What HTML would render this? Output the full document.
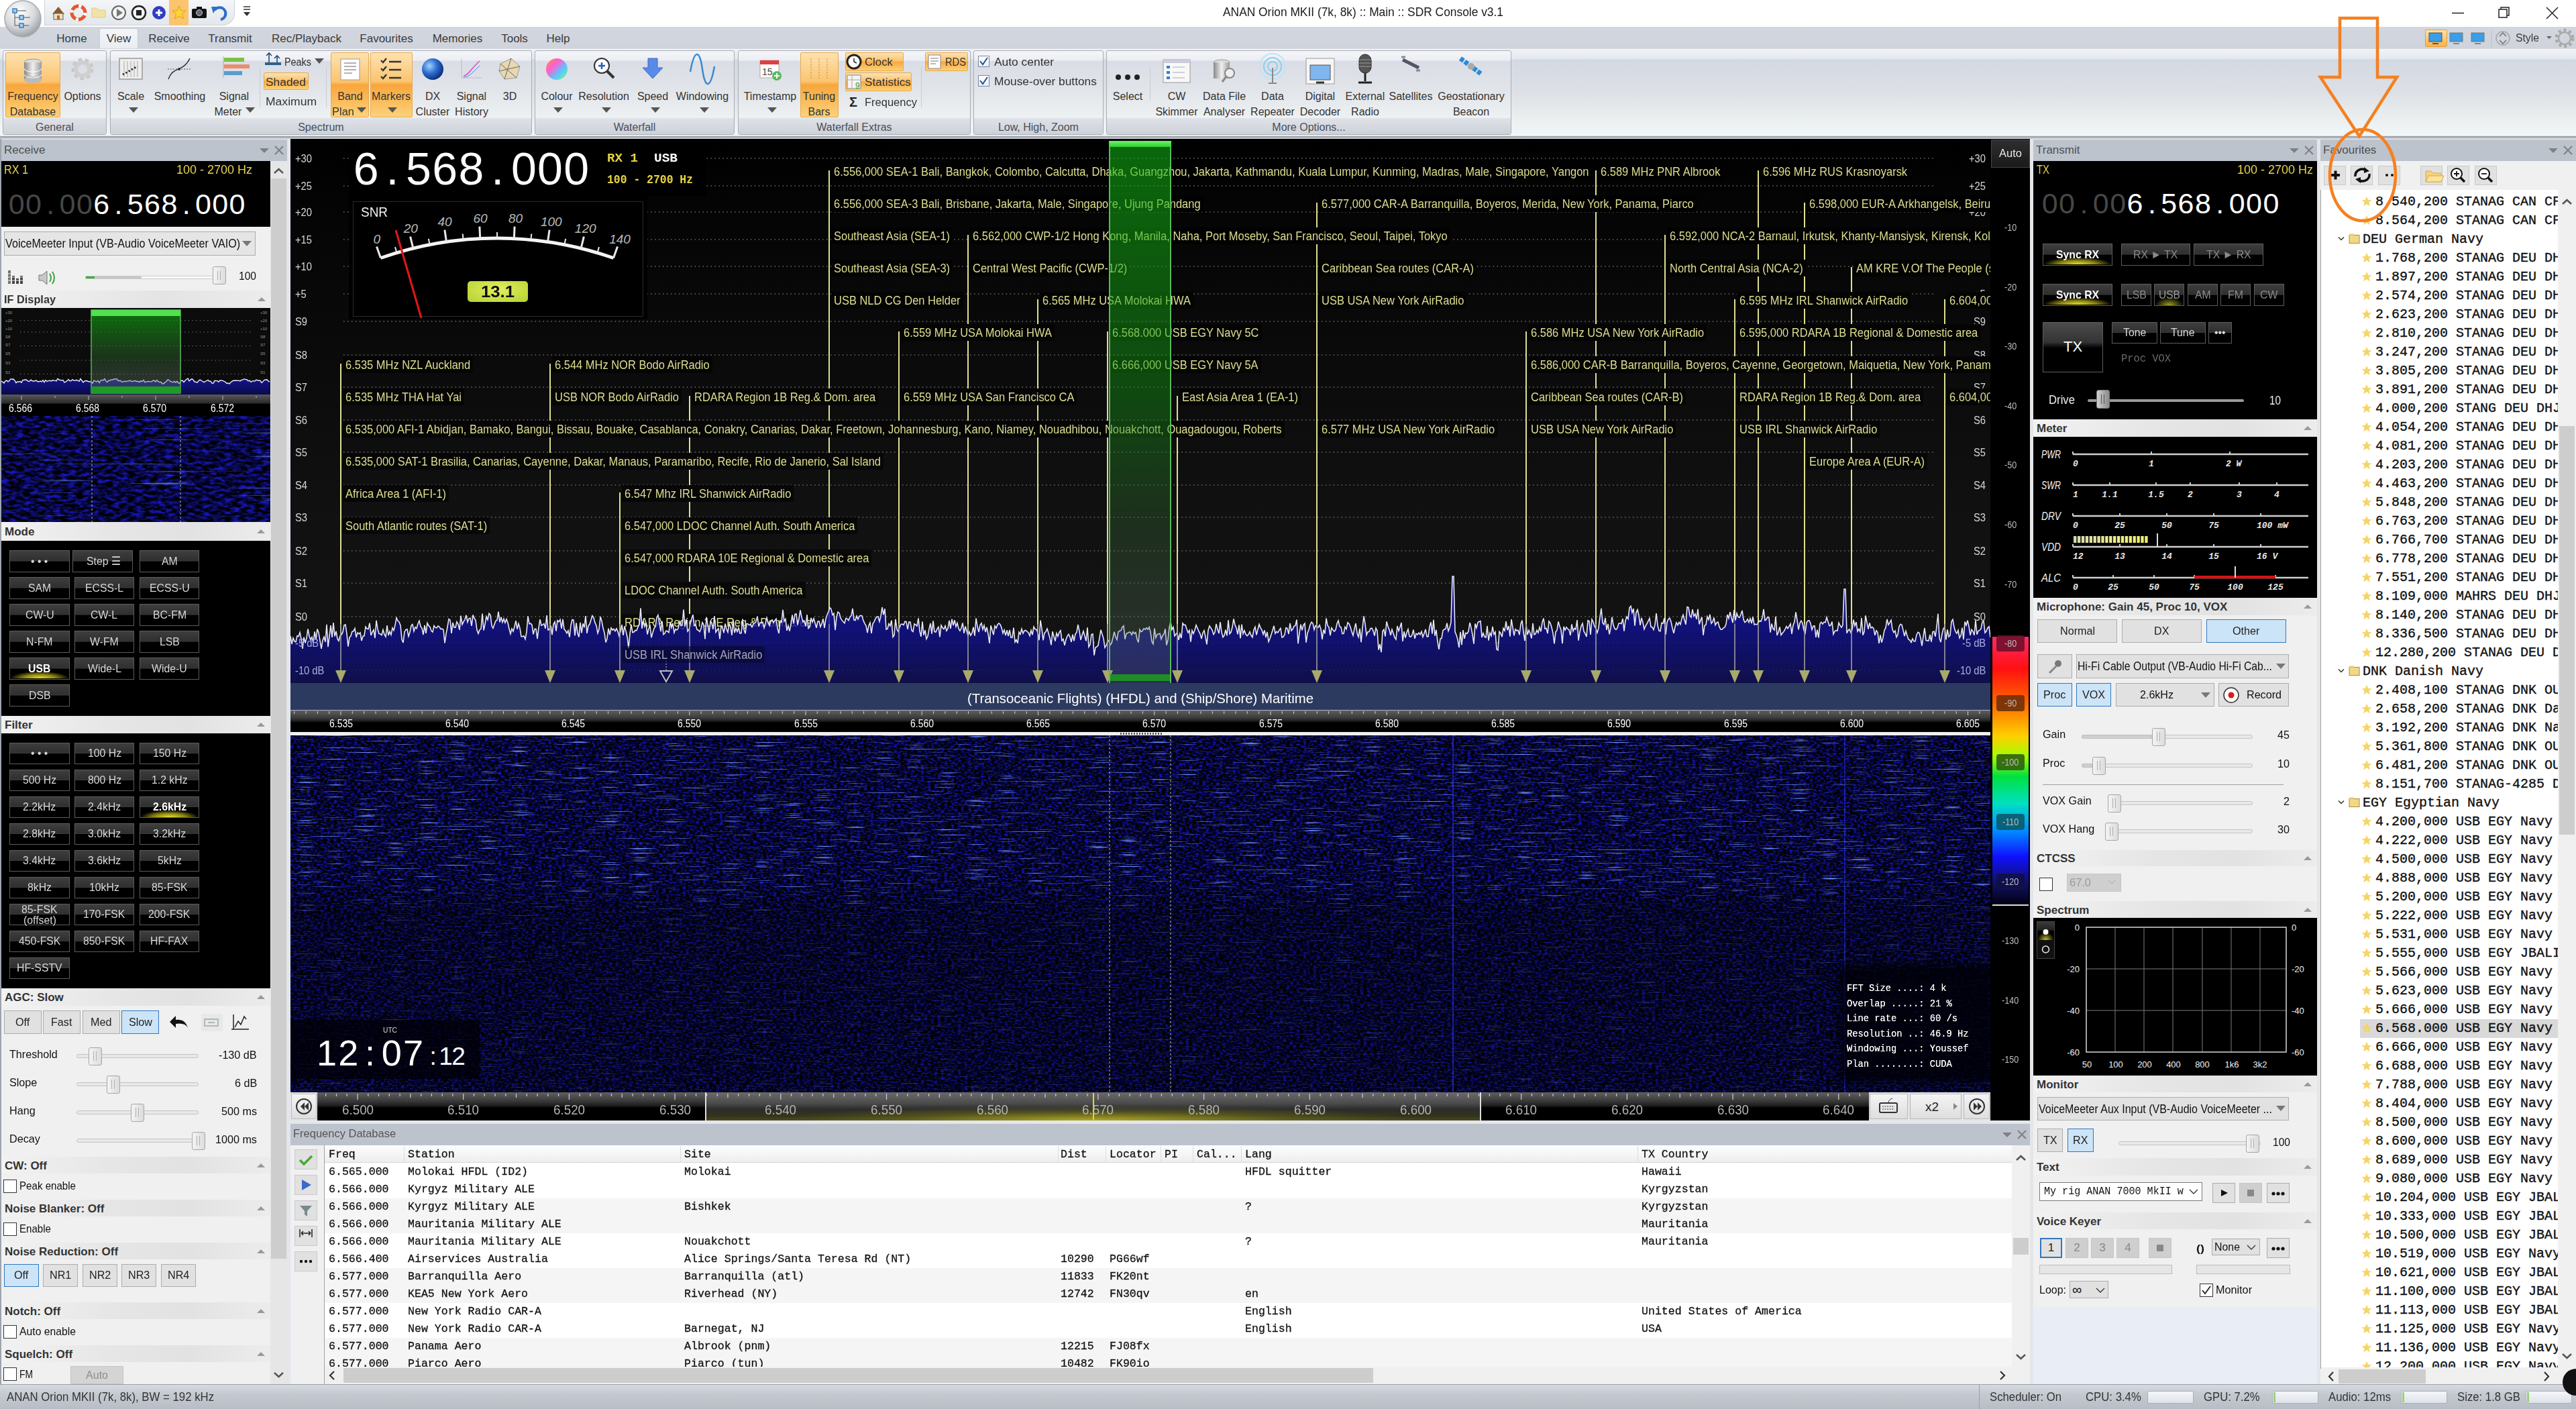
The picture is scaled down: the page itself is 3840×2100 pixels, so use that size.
<!DOCTYPE html><html><head><meta charset="utf-8"><style>
html,body{margin:0;padding:0}
body{width:3840px;height:2100px;overflow:hidden;position:relative;background:#e9ecf0;font-family:"Liberation Sans",sans-serif}
.a{position:absolute}
.t{position:absolute;white-space:nowrap}
.s{font-family:"Liberation Sans",sans-serif}
.m{font-family:"Liberation Mono",monospace}
</style></head><body><div class="a" style="left:0px;top:0px;width:3840px;height:40px;background:#fff;"></div><div class="a" style="left:66px;top:0px;width:284px;height:38px;background:linear-gradient(#f4f6f8,#e3e7ec);border:1px solid #cdd3da;border-top:none;border-radius:0 0 18px 0;box-sizing:border-box;"></div><svg class="a" style="left:66px;top:0px" width="330" height="40">
    <g transform="translate(21,19)"><path d="M-9,2 L0,-9 L9,2 Z" fill="#8b5a2b"/><rect x="-7" y="1" width="14" height="9" fill="#e8e0d0" stroke="#7a5a3a"/><rect x="-2" y="4" width="4" height="6" fill="#b06a20"/></g>
    <g transform="translate(51,19)"><circle r="10" fill="none" stroke="#e4572e" stroke-width="5"/><circle r="10" fill="none" stroke="#fff" stroke-width="5" stroke-dasharray="4 11.7"/></g>
    <g transform="translate(81,19)"><path d="M-10,-7 h7 l2,3 h11 v11 h-20 z" fill="#f3e2a8" stroke="#e2cb86"/></g>
    <g transform="translate(111,19)"><circle r="10" fill="#f4f4f4" stroke="#666" stroke-width="2"/><path d="M-3,-6 L6,0 L-3,6 Z" fill="#777"/></g>
    <g transform="translate(141,19)"><circle r="10" fill="#f4f4f4" stroke="#222" stroke-width="2.5"/><rect x="-4" y="-4" width="8" height="8" fill="#222"/></g>
    <g transform="translate(171,19)"><circle r="10" fill="#2f3fc0"/><path d="M-5,0 h10 M0,-5 v10" stroke="#fff" stroke-width="3"/></g>
    <rect x="186" y="0" width="29" height="38" fill="#fbc46f"/>
    <g transform="translate(201,19)"><path d="M0,-10 L3,-3 L10,-3 L4.5,2 L6.5,9 L0,5 L-6.5,9 L-4.5,2 L-10,-3 L-3,-3 Z" fill="#ffd23a" stroke="#e0a010"/></g>
    <g transform="translate(231,19)"><rect x="-11" y="-6" width="22" height="14" rx="2" fill="#111"/><rect x="-4" y="-9" width="8" height="4" fill="#111"/><circle r="4.5" fill="#667" stroke="#ccc"/></g>
    <g transform="translate(261,19)"><path d="M-7,-4 A9,9 0 1 1 2,10" fill="none" stroke="#2a6fd0" stroke-width="4"/><path d="M-12,-9 L-3,-9 L-9,1 Z" fill="#2a6fd0"/></g>
    <g transform="translate(302,17)"><path d="M-5,-7 h10 M-5,-3 h10" stroke="#333" stroke-width="1.6"/><path d="M-5,1 h10 l-5,6 z" fill="#333"/></g>
    </svg><div class="t s" style="left:1823.0px;top:8.0px;font-size:18px;line-height:21px;color:#1a1a1a;transform:scaleX(0.965);transform-origin:0 50%;">ANAN Orion MKII (7k, 8k) :: Main :: SDR Console v3.1</div><svg class="a" style="left:3640px;top:0px" width="200" height="40">
    <path d="M15,19.5 h18" stroke="#222" stroke-width="1.5"/>
    <rect x="85" y="14" width="12" height="12" fill="none" stroke="#222" stroke-width="1.5"/><path d="M88,14 v-3 h12 v12 h-3" fill="none" stroke="#222" stroke-width="1.5"/>
    <path d="M156,11 l17,17 M173,11 l-17,17" stroke="#222" stroke-width="1.5"/>
    </svg><div class="a" style="left:0px;top:40px;width:3840px;height:33px;background:linear-gradient(#d3d6de,#cfd4dc);"></div><div class="a" style="left:148px;top:42px;width:58px;height:33px;background:linear-gradient(#f3f5f8,#e8ecf1);border:1px solid #c7cdd5;border-bottom:none;border-radius:3px 3px 0 0;box-sizing:border-box;"></div><div class="t s" style="left:84.3px;top:48.0px;font-size:17px;line-height:20px;color:#3a3a3a;">Home</div><div class="t s" style="left:158.7px;top:48.0px;font-size:17px;line-height:20px;color:#3a3a3a;">View</div><div class="t s" style="left:221.3px;top:48.0px;font-size:17px;line-height:20px;color:#3a3a3a;">Receive</div><div class="t s" style="left:310.3px;top:48.0px;font-size:17px;line-height:20px;color:#3a3a3a;">Transmit</div><div class="t s" style="left:405.0px;top:48.0px;font-size:17px;line-height:20px;color:#3a3a3a;">Rec/Playback</div><div class="t s" style="left:536.3px;top:48.0px;font-size:17px;line-height:20px;color:#3a3a3a;">Favourites</div><div class="t s" style="left:644.7px;top:48.0px;font-size:17px;line-height:20px;color:#3a3a3a;">Memories</div><div class="t s" style="left:747.2px;top:48.0px;font-size:17px;line-height:20px;color:#3a3a3a;">Tools</div><div class="t s" style="left:814.5px;top:48.0px;font-size:17px;line-height:20px;color:#3a3a3a;">Help</div><div class="a" style="left:3615px;top:44px;width:33px;height:26px;background:linear-gradient(#fde2b0,#f9b24c);border:1px solid #e0a040;border-radius:2px;box-sizing:border-box;"></div><svg class="a" style="left:3600px;top:40px" width="240" height="34">
    <g><rect x="21" y="9" width="19" height="13" fill="#3a9ee8" stroke="#555"/><path d="M26,25 h9" stroke="#555" stroke-width="2"/></g>
    <g><rect x="52" y="9" width="19" height="13" fill="#3a9ee8" stroke="#777"/><path d="M57,25 h9" stroke="#888" stroke-width="2"/></g>
    <g><rect x="84" y="9" width="19" height="13" fill="#3a9ee8" stroke="#777"/><path d="M89,25 h9" stroke="#888" stroke-width="2"/></g>
    <path d="M114,6 v24" stroke="#b8bec6"/>
    <g transform="translate(131,17)" fill="none" stroke="#777" stroke-width="1.6"><circle r="10" stroke="#aaa"/><path d="M-5,-3 L0,-8 L5,-3 M-5,3 L0,8 L5,3"/></g>
    <path d="M196,14 h8 l-4,4 z" fill="#666"/>
    <g transform="translate(223,17)"><circle r="12" fill="none" stroke="#aaa" stroke-width="5" stroke-dasharray="4 3.8"/><circle r="9" fill="none" stroke="#aaa" stroke-width="2.5"/></g>
    </svg><div class="t s" style="left:3750.0px;top:47.0px;font-size:17px;line-height:20px;color:#3a3a3a;transform:scaleX(0.926);transform-origin:0 50%;">Style</div><svg class="a" style="left:4px;top:0px" width="62" height="60">
    <defs><radialGradient id="ab" cx="40%" cy="30%" r="70%"><stop offset="0" stop-color="#ffffff"/><stop offset="0.6" stop-color="#d8dadd"/><stop offset="1" stop-color="#9ea3a8"/></radialGradient></defs>
    <circle cx="30" cy="28" r="27" fill="url(#ab)" stroke="#a8acb0" stroke-width="1.5"/>
    <g fill="#9fd0f0" stroke="#2f7fc8" stroke-width="1.5"><rect x="15" y="13" width="6" height="6"/><rect x="25" y="23" width="6" height="6"/><rect x="25" y="35" width="6" height="6"/></g>
    <path d="M18,19 v19 h7 M18,26 h7 M21,16 h14 M31,26 h10 M31,38 h8" stroke="#555" stroke-width="1" fill="none"/>
    </svg><div class="a" style="left:0px;top:72px;width:3840px;height:133px;background:linear-gradient(#b9bdc4 0px,#f1f3f7 1px,#e3e7ef 16px,#d3d9e3 17px,#dde0e5 50%,#e9edee 75%,#f1f7f9 98%,#9fa3a8 98.5%);"></div><div class="a" style="left:0px;top:205px;width:3840px;height:2px;background:#c4c8ce;"></div><div class="a" style="left:4px;top:75px;width:155px;height:126px;background:linear-gradient(#f5f6f9 0%,#eceef3 11%,#d9dde5 12.5%,#e1e4e9 45%,#eef1f2 80%);border:1px solid #a9aeb5;border-radius:3px;box-sizing:border-box;"></div><div class="a" style="left:5px;top:176px;width:153px;height:24px;background:linear-gradient(#dfe2e8,#cdd1d8);border-radius:0 0 3px 3px;"></div><div class="t s" style="left:53.0px;top:179.5px;font-size:16px;line-height:19px;color:#4a4f58;">General</div><div class="a" style="left:164px;top:75px;width:629px;height:126px;background:linear-gradient(#f5f6f9 0%,#eceef3 11%,#d9dde5 12.5%,#e1e4e9 45%,#eef1f2 80%);border:1px solid #a9aeb5;border-radius:3px;box-sizing:border-box;"></div><div class="a" style="left:165px;top:176px;width:627px;height:24px;background:linear-gradient(#dfe2e8,#cdd1d8);border-radius:0 0 3px 3px;"></div><div class="t s" style="left:444.2px;top:179.5px;font-size:16px;line-height:19px;color:#4a4f58;">Spectrum</div><div class="a" style="left:797px;top:75px;width:298px;height:126px;background:linear-gradient(#f5f6f9 0%,#eceef3 11%,#d9dde5 12.5%,#e1e4e9 45%,#eef1f2 80%);border:1px solid #a9aeb5;border-radius:3px;box-sizing:border-box;"></div><div class="a" style="left:798px;top:176px;width:296px;height:24px;background:linear-gradient(#dfe2e8,#cdd1d8);border-radius:0 0 3px 3px;"></div><div class="t s" style="left:914.7px;top:179.5px;font-size:16px;line-height:19px;color:#4a4f58;">Waterfall</div><div class="a" style="left:1100px;top:75px;width:347px;height:126px;background:linear-gradient(#f5f6f9 0%,#eceef3 11%,#d9dde5 12.5%,#e1e4e9 45%,#eef1f2 80%);border:1px solid #a9aeb5;border-radius:3px;box-sizing:border-box;"></div><div class="a" style="left:1101px;top:176px;width:345px;height:24px;background:linear-gradient(#dfe2e8,#cdd1d8);border-radius:0 0 3px 3px;"></div><div class="t s" style="left:1217.3px;top:179.5px;font-size:16px;line-height:19px;color:#4a4f58;">Waterfall Extras</div><div class="a" style="left:1451px;top:75px;width:194px;height:126px;background:linear-gradient(#f5f6f9 0%,#eceef3 11%,#d9dde5 12.5%,#e1e4e9 45%,#eef1f2 80%);border:1px solid #a9aeb5;border-radius:3px;box-sizing:border-box;"></div><div class="a" style="left:1452px;top:176px;width:192px;height:24px;background:linear-gradient(#dfe2e8,#cdd1d8);border-radius:0 0 3px 3px;"></div><div class="t s" style="left:1487.9px;top:179.5px;font-size:16px;line-height:19px;color:#4a4f58;">Low, High, Zoom</div><div class="a" style="left:1649px;top:75px;width:604px;height:126px;background:linear-gradient(#f5f6f9 0%,#eceef3 11%,#d9dde5 12.5%,#e1e4e9 45%,#eef1f2 80%);border:1px solid #a9aeb5;border-radius:3px;box-sizing:border-box;"></div><div class="a" style="left:1650px;top:176px;width:602px;height:24px;background:linear-gradient(#dfe2e8,#cdd1d8);border-radius:0 0 3px 3px;"></div><div class="t s" style="left:1896.3px;top:179.5px;font-size:16px;line-height:19px;color:#4a4f58;">More Options...</div><div class="a" style="left:8px;top:78px;width:82px;height:97px;background:linear-gradient(#fde2b0 0%,#fbc46f 45%,#f9a63c 50%,#fcd27a 100%);border:1px solid #e8a94a;border-radius:2px;box-sizing:border-box;"></div><div class="a" style="left:493px;top:78px;width:57px;height:97px;background:linear-gradient(#fde2b0 0%,#fbc46f 45%,#f9a63c 50%,#fcd27a 100%);border:1px solid #e8a94a;border-radius:2px;box-sizing:border-box;"></div><div class="a" style="left:552px;top:78px;width:63px;height:97px;background:linear-gradient(#fde2b0 0%,#fbc46f 45%,#f9a63c 50%,#fcd27a 100%);border:1px solid #e8a94a;border-radius:2px;box-sizing:border-box;"></div><div class="a" style="left:1193px;top:78px;width:57px;height:97px;background:linear-gradient(#fde2b0 0%,#fbc46f 45%,#f9a63c 50%,#fcd27a 100%);border:1px solid #e8a94a;border-radius:2px;box-sizing:border-box;"></div><div class="a" style="left:393px;top:108px;width:67px;height:26px;background:linear-gradient(#fde2b0 0%,#fbc46f 45%,#f9a63c 50%,#fcd27a 100%);border:1px solid #e8a94a;border-radius:2px;box-sizing:border-box;"></div><div class="a" style="left:1260px;top:78px;width:87px;height:28px;background:linear-gradient(#fde2b0 0%,#fbc46f 45%,#f9a63c 50%,#fcd27a 100%);border:1px solid #e8a94a;border-radius:2px;box-sizing:border-box;"></div><div class="a" style="left:1260px;top:108px;width:99px;height:28px;background:linear-gradient(#fde2b0 0%,#fbc46f 45%,#f9a63c 50%,#fcd27a 100%);border:1px solid #e8a94a;border-radius:2px;box-sizing:border-box;"></div><div class="a" style="left:1379px;top:78px;width:64px;height:28px;background:linear-gradient(#fde2b0 0%,#fbc46f 45%,#f9a63c 50%,#fcd27a 100%);border:1px solid #e8a94a;border-radius:2px;box-sizing:border-box;"></div><div class="t s" style="left:11.2px;top:133.5px;font-size:16px;line-height:19px;color:#333;">Frequency</div><div class="t s" style="left:14.7px;top:156.5px;font-size:16px;line-height:19px;color:#333;">Database</div><div class="t s" style="left:95.4px;top:133.5px;font-size:16px;line-height:19px;color:#333;">Options</div><div class="t s" style="left:175.0px;top:133.5px;font-size:16px;line-height:19px;color:#333;">Scale</div><svg class="a" style="left:191px;top:159px" width="16" height="10"><path d="M1,1 h14 l-7,8 z" fill="#555"/></svg><div class="t s" style="left:229.7px;top:133.5px;font-size:16px;line-height:19px;color:#333;">Smoothing</div><div class="t s" style="left:326.7px;top:133.5px;font-size:16px;line-height:19px;color:#333;">Signal</div><div class="t s" style="left:319.5px;top:156.5px;font-size:16px;line-height:19px;color:#333;">Meter</div><svg class="a" style="left:365px;top:159px" width="16" height="10"><path d="M1,1 h14 l-7,8 z" fill="#555"/></svg><div class="t s" style="left:424.0px;top:82.5px;font-size:16px;line-height:19px;color:#333;transform:scaleX(0.899);transform-origin:0 50%;">Peaks</div><svg class="a" style="left:468px;top:86px" width="16" height="10"><path d="M1,1 h14 l-7,8 z" fill="#555"/></svg><div class="t s" style="left:396.0px;top:112.5px;font-size:16px;line-height:19px;color:#333;transform:scaleX(1.087);transform-origin:0 50%;">Shaded</div><div class="t s" style="left:396.0px;top:141.5px;font-size:16px;line-height:19px;color:#333;transform:scaleX(1.096);transform-origin:0 50%;">Maximum</div><div class="a" style="left:387px;top:100px;width:1px;height:60px;background:#c8ccd2;"></div><div class="a" style="left:486px;top:100px;width:1px;height:60px;background:#c8ccd2;"></div><div class="t s" style="left:503.3px;top:133.5px;font-size:16px;line-height:19px;color:#333;">Band</div><div class="t s" style="left:495.0px;top:156.5px;font-size:16px;line-height:19px;color:#333;transform:scaleX(1.030);transform-origin:0 50%;">Plan</div><svg class="a" style="left:531px;top:159px" width="16" height="10"><path d="M1,1 h14 l-7,8 z" fill="#555"/></svg><div class="t s" style="left:554.1px;top:133.5px;font-size:16px;line-height:19px;color:#333;">Markers</div><svg class="a" style="left:577px;top:159px" width="16" height="10"><path d="M1,1 h14 l-7,8 z" fill="#555"/></svg><div class="t s" style="left:633.9px;top:133.5px;font-size:16px;line-height:19px;color:#333;">DX</div><div class="t s" style="left:619.6px;top:156.5px;font-size:16px;line-height:19px;color:#333;">Cluster</div><div class="t s" style="left:680.7px;top:133.5px;font-size:16px;line-height:19px;color:#333;">Signal</div><div class="t s" style="left:678.1px;top:156.5px;font-size:16px;line-height:19px;color:#333;">History</div><div class="t s" style="left:749.8px;top:133.5px;font-size:16px;line-height:19px;color:#333;">3D</div><div class="t s" style="left:806.4px;top:133.5px;font-size:16px;line-height:19px;color:#333;">Colour</div><svg class="a" style="left:824px;top:159px" width="16" height="10"><path d="M1,1 h14 l-7,8 z" fill="#555"/></svg><div class="t s" style="left:862.2px;top:133.5px;font-size:16px;line-height:19px;color:#333;">Resolution</div><svg class="a" style="left:896px;top:159px" width="16" height="10"><path d="M1,1 h14 l-7,8 z" fill="#555"/></svg><div class="t s" style="left:949.9px;top:133.5px;font-size:16px;line-height:19px;color:#333;">Speed</div><svg class="a" style="left:969px;top:159px" width="16" height="10"><path d="M1,1 h14 l-7,8 z" fill="#555"/></svg><div class="t s" style="left:1007.8px;top:133.5px;font-size:16px;line-height:19px;color:#333;">Windowing</div><svg class="a" style="left:1042px;top:159px" width="16" height="10"><path d="M1,1 h14 l-7,8 z" fill="#555"/></svg><div class="t s" style="left:1108.7px;top:133.5px;font-size:16px;line-height:19px;color:#333;">Timestamp</div><svg class="a" style="left:1143px;top:159px" width="16" height="10"><path d="M1,1 h14 l-7,8 z" fill="#555"/></svg><div class="t s" style="left:1196.8px;top:133.5px;font-size:16px;line-height:19px;color:#333;">Tuning</div><div class="t s" style="left:1204.5px;top:156.5px;font-size:16px;line-height:19px;color:#333;">Bars</div><div class="t s" style="left:1289.0px;top:82.5px;font-size:16px;line-height:19px;color:#333;transform:scaleX(1.049);transform-origin:0 50%;">Clock</div><div class="t s" style="left:1289.0px;top:112.5px;font-size:16px;line-height:19px;color:#333;transform:scaleX(1.077);transform-origin:0 50%;">Statistics</div><div class="t s" style="left:1289.0px;top:142.5px;font-size:16px;line-height:19px;color:#333;transform:scaleX(1.031);transform-origin:0 50%;">Frequency</div><div class="t s" style="left:1266.0px;top:140.0px;font-size:20px;line-height:24px;color:#222;font-weight:bold;">Σ</div><div class="t s" style="left:1409.0px;top:82.5px;font-size:16px;line-height:19px;color:#333;transform:scaleX(0.917);transform-origin:0 50%;">RDS</div><div class="a" style="left:1373px;top:100px;width:1px;height:60px;background:#c8ccd2;"></div><div class="t s" style="left:1482.0px;top:82.5px;font-size:16px;line-height:19px;color:#333;transform:scaleX(1.087);transform-origin:0 50%;">Auto center</div><div class="t s" style="left:1482.0px;top:111.5px;font-size:16px;line-height:19px;color:#333;transform:scaleX(1.081);transform-origin:0 50%;">Mouse-over buttons</div><div class="a" style="left:1458px;top:83px;width:17px;height:17px;background:linear-gradient(#fff,#e6eef8);border:1px solid #7a8aa0;box-sizing:border-box;"></div><svg class="a" style="left:1458px;top:83px" width="17" height="17"><path d="M3,8 l4,5 l7,-10" stroke="#2b4f8a" stroke-width="2" fill="none"/></svg><div class="a" style="left:1458px;top:112px;width:17px;height:17px;background:linear-gradient(#fff,#e6eef8);border:1px solid #7a8aa0;box-sizing:border-box;"></div><svg class="a" style="left:1458px;top:112px" width="17" height="17"><path d="M3,8 l4,5 l7,-10" stroke="#2b4f8a" stroke-width="2" fill="none"/></svg><div class="t s" style="left:1658.8px;top:133.5px;font-size:16px;line-height:19px;color:#333;">Select</div><div class="t s" style="left:1740.7px;top:133.5px;font-size:16px;line-height:19px;color:#333;">CW</div><div class="t s" style="left:1722.4px;top:156.5px;font-size:16px;line-height:19px;color:#333;">Skimmer</div><div class="t s" style="left:1793.0px;top:133.5px;font-size:16px;line-height:19px;color:#333;">Data File</div><div class="t s" style="left:1793.9px;top:156.5px;font-size:16px;line-height:19px;color:#333;">Analyser</div><div class="t s" style="left:1880.1px;top:133.5px;font-size:16px;line-height:19px;color:#333;">Data</div><div class="t s" style="left:1864.1px;top:156.5px;font-size:16px;line-height:19px;color:#333;">Repeater</div><div class="t s" style="left:1945.7px;top:133.5px;font-size:16px;line-height:19px;color:#333;">Digital</div><div class="t s" style="left:1937.7px;top:156.5px;font-size:16px;line-height:19px;color:#333;">Decoder</div><div class="t s" style="left:2005.6px;top:133.5px;font-size:16px;line-height:19px;color:#333;">External</div><div class="t s" style="left:2014.1px;top:156.5px;font-size:16px;line-height:19px;color:#333;">Radio</div><div class="t s" style="left:2070.5px;top:133.5px;font-size:16px;line-height:19px;color:#333;">Satellites</div><div class="t s" style="left:2143.2px;top:133.5px;font-size:16px;line-height:19px;color:#333;">Geostationary</div><div class="t s" style="left:2165.9px;top:156.5px;font-size:16px;line-height:19px;color:#333;">Beacon</div><div class="a" style="left:1714px;top:100px;width:1px;height:50px;background:#c8ccd2;"></div><svg class="a" style="left:0px;top:73px" width="2260" height="105">
    <!-- database -->
    <g transform="translate(49,32)"><ellipse cx="0" cy="-12" rx="13" ry="5" fill="#ddd" stroke="#999"/><rect x="-13" y="-12" width="26" height="26" fill="url(#cyl)"/><ellipse cx="0" cy="14" rx="13" ry="5" fill="#bbb"/><path d="M-13,-3 a13,5 0 0 0 26,0 M-13,6 a13,5 0 0 0 26,0" stroke="#fff" fill="none"/></g>
    <defs><linearGradient id="cyl"><stop offset="0" stop-color="#888"/><stop offset="0.5" stop-color="#f0f0f0"/><stop offset="1" stop-color="#999"/></linearGradient></defs>
    <!-- gear -->
    <g transform="translate(123,30)"><circle r="13" fill="none" stroke="#c8c8c8" stroke-width="7" stroke-dasharray="5 4.2"/><circle r="10" fill="none" stroke="#cfcfcf" stroke-width="6"/></g>
    <!-- scale -->
    <g transform="translate(195,30)"><rect x="-17" y="-16" width="34" height="31" fill="#eee" stroke="#999" stroke-width="1.5"/><path d="M-10,-12 v24 M-5,-12 v24 M0,-12 v24 M5,-12 v24 M10,-12 v24" stroke="#aaa"/><path d="M-12,8 L-6,5 L-1,2 L4,-1 L10,-4" stroke="#222" stroke-width="3" stroke-dasharray="2 3"/></g>
    <!-- smoothing -->
    <g transform="translate(268,30)"><path d="M-17,15 C-10,-5 5,5 15,-16" stroke="#333" stroke-width="1.5" fill="none"/><path d="M-18,0 h34" stroke="#555" stroke-dasharray="2 2"/><circle cx="-1" cy="0" r="2" fill="#333"/></g>
    <!-- signal meter -->
    <g transform="translate(349,30)"><rect x="-15" y="-17" width="30" height="6" fill="#7ac144"/><rect x="-15" y="-7" width="38" height="6" fill="#e88e70"/><rect x="-15" y="3" width="27" height="6" fill="#5c9ad0"/><path d="M-16,-19 v32" stroke="#aaa"/></g>
    <!-- peaks icon -->
    <g transform="translate(395,4)"><path d="M6,16 v-14 M2,6 l4,-4 l4,4 M18,16 v-10 M14,10 l4,-4 l4,4" stroke="#1f4f7a" stroke-width="1.6" fill="none"/><rect x="0" y="16" width="24" height="4" fill="#2f5f8a"/></g>
    <!-- band plan -->
    <g transform="translate(522,30)"><rect x="-14" y="-15" width="28" height="31" fill="#fff" stroke="#999"/><path d="M-9,-9 h18 M-9,-4 h18 M-9,1 h18 M-9,6 h12" stroke="#666"/></g>
    <!-- markers -->
    <g transform="translate(583,30)" stroke="#333" stroke-width="2.4" fill="none"><path d="M-15,-13 l3,3 l5,-6 M-15,-1 l3,3 l5,-6 M-15,11 l3,3 l5,-6"/><path d="M-3,-11 h18 M-3,1 h18 M-3,13 h18"/></g>
    <!-- globe -->
    <g transform="translate(645,30)"><circle r="16" fill="url(#gl)"/></g>
    <defs><radialGradient id="gl" cx="35%" cy="35%" r="70%"><stop offset="0" stop-color="#9fd4ff"/><stop offset="0.5" stop-color="#2f6fd0"/><stop offset="1" stop-color="#0b2a7a"/></radialGradient></defs>
    <!-- signal history -->
    <g transform="translate(703,30)"><path d="M-15,-15 v28 h30" stroke="#bbb" fill="none"/><path d="M-12,10 C-5,10 0,-2 12,-12" stroke="#d050c0" stroke-width="1.5" fill="none"/><path d="M-12,12 C-3,12 2,4 12,-5" stroke="#5080ff" stroke-width="1" fill="none"/></g>
    <!-- 3D -->
    <g transform="translate(760,30)"><path d="M-14,-8 L2,-16 L15,-4 L10,13 L-8,15 L-16,3 Z" fill="#e8d8b0" stroke="#999"/><path d="M-14,-8 L10,13 M2,-16 L-8,15 M15,-4 L-16,3" stroke="#666"/></g>
    <!-- colour -->
    <g transform="translate(830,30)"><circle r="16" fill="url(#cw)"/></g>
    <defs><linearGradient id="cw" x1="0" y1="0" x2="1" y2="1"><stop offset="0" stop-color="#ff8a3d"/><stop offset="0.35" stop-color="#ff5fd0"/><stop offset="0.65" stop-color="#59c6ff"/><stop offset="1" stop-color="#7dff7a"/></linearGradient></defs>
    <!-- resolution -->
    <g transform="translate(900,28)"><circle cx="-3" cy="-3" r="11" fill="#fff" stroke="#333" stroke-width="2"/><path d="M-8,-3 h10 M-3,-8 v10" stroke="#2a5ac0" stroke-width="2.5"/><path d="M5,5 l10,10" stroke="#333" stroke-width="4"/></g>
    <!-- speed -->
    <g transform="translate(973,30)"><path d="M-7,-16 h14 v14 h8 l-15,16 l-15,-16 h8 z" fill="#5a8ae8" stroke="#3a6ac8"/></g>
    <!-- windowing -->
    <g transform="translate(1047,30)"><path d="M-18,4 C-12,-30 -4,-30 0,0 C4,30 12,30 18,-4" stroke="#3a8ad0" stroke-width="2.5" fill="none"/></g>
    <!-- timestamp -->
    <g transform="translate(1148,30)"><rect x="-15" y="-13" width="28" height="26" fill="#fff" stroke="#aaa"/><rect x="-15" y="-13" width="28" height="6" fill="#e04040"/><text x="-12" y="9" font-size="14" font-family="Liberation Sans" fill="#444">15</text><circle cx="10" cy="10" r="7" fill="#5cb85c"/><path d="M6,10 h8 M10,6 v8" stroke="#fff" stroke-width="2"/></g>
    <!-- tuning bars -->
    <g transform="translate(1221,30)" stroke="#c08a40" stroke-dasharray="2 2"><path d="M-12,-16 v32 M0,-16 v32 M12,-16 v32"/></g>
    <!-- clock icon -->
    <g transform="translate(1273,19)"><circle r="10" fill="#fff" stroke="#222" stroke-width="3"/><path d="M0,-5 v5 l4,2" stroke="#222" stroke-width="1.5" fill="none"/></g>
    <!-- statistics icon -->
    <g transform="translate(1273,49)"><rect x="-10" y="-10" width="20" height="20" fill="#f4f4f4" stroke="#888"/><path d="M-10,-3 h20 M-3,-10 v20" stroke="#aaa"/><text x="2" y="10" font-size="12" font-family="Liberation Sans" fill="#2a9a2a">9</text></g>
    <!-- RDS icon -->
    <g transform="translate(1393,19)"><rect x="-9" y="-10" width="18" height="20" fill="#fff" stroke="#888"/><path d="M-6,-5 h12 M-6,-1 h12 M-6,3 h8" stroke="#777"/></g>
    <!-- select -->
    <g transform="translate(1681,42)" fill="#222"><circle cx="-14" r="4"/><circle cx="0" r="4"/><circle cx="14" r="4"/></g>
    <!-- cw skimmer -->
    <g transform="translate(1754,32)"><rect x="-20" y="-16" width="40" height="34" fill="#f8f8f8" stroke="#999"/><rect x="-20" y="-16" width="40" height="5" fill="#ccd"/><g fill="#3a7ad0"><rect x="-15" y="-7" width="5" height="4"/><rect x="-15" y="1" width="5" height="4"/><rect x="-15" y="9" width="5" height="4"/></g><path d="M-6,-5 h18 M-6,3 h18 M-6,11 h18" stroke="#aab"/></g>
    <!-- data file analyser -->
    <g transform="translate(1825,32)"><ellipse cx="-4" cy="-12" rx="12" ry="4" fill="#ddd" stroke="#999"/><rect x="-16" y="-12" width="24" height="24" fill="url(#cyl)"/><circle cx="8" cy="4" r="7" fill="#eee" stroke="#888" stroke-width="2"/><path d="M3,9 l-6,8" stroke="#888" stroke-width="3"/></g>
    <!-- data repeater -->
    <g transform="translate(1897,32)"><g fill="none" stroke="#8ccfef" stroke-width="2"><circle cy="-6" r="7"/><circle cy="-6" r="13"/><circle cy="-6" r="19" stroke="#c0e4f4"/></g><path d="M0,-4 v22 M-6,19 h12" stroke="#888" stroke-width="2"/></g>
    <!-- digital decoder -->
    <g transform="translate(1968,32)"><rect x="-21" y="-18" width="42" height="38" fill="#f6f6f6" stroke="#999"/><rect x="-15" y="-8" width="30" height="22" fill="#7fb6ef" stroke="#555"/><path d="M-6,18 h12" stroke="#333" stroke-width="3"/></g>
    <!-- external radio (mic) -->
    <g transform="translate(2035,30)"><rect x="-9" y="-22" width="18" height="28" rx="9" fill="#555" stroke="#222"/><path d="M-9,-14 h18 M-9,-9 h18 M-9,-4 h18" stroke="#999"/><path d="M0,6 v12 M-10,20 h20" stroke="#222" stroke-width="3"/></g>
    <!-- satellites -->
    <g transform="translate(2103,22)"><path d="M-12,-6 L12,6" stroke="#556" stroke-width="5"/><path d="M-14,-10 l6,0 M8,10 l6,0" stroke="#889" stroke-width="3"/></g>
    <!-- geostationary -->
    <g transform="translate(2193,26)"><path d="M-16,-12 L16,12" stroke="#2a8ad8" stroke-width="7" stroke-dasharray="6 2"/><circle r="5" fill="#aaa"/></g>
    </svg><div class="a" style="left:2px;top:240px;width:426px;height:1823px;background:#f0f0f0;"></div><div class="a" style="left:2px;top:208px;width:426px;height:32px;background:#bcc3cc;"></div><div class="t s" style="left:6.0px;top:214.0px;font-size:17px;line-height:20px;color:#505050;">Receive</div><svg class="a" style="left:384px;top:208px" width="44" height="32"><path d="M3,13.0 h14 l-7,7 z" fill="#808080"/><path d="M26,10.0 l12,12 M38,10.0 l-12,12" stroke="#808080" stroke-width="2"/></svg><div class="a" style="left:403px;top:240px;width:25px;height:1823px;background:#e6e6e6;"></div><div class="a" style="left:404px;top:266px;width:23px;height:1610px;background:#cdcdcd;"></div><svg class="a" style="left:403px;top:244px" width="25" height="20"><path d="M6,14 l6.5,-6 l6.5,6" stroke="#555" stroke-width="2.5" fill="none"/></svg><svg class="a" style="left:403px;top:2040px" width="25" height="20"><path d="M6,6 l6.5,6 l6.5,-6" stroke="#555" stroke-width="2.5" fill="none"/></svg><div class="a" style="left:2px;top:240px;width:401px;height:98px;background:#000;"></div><div class="t s" style="left:6.0px;top:242.0px;font-size:19px;line-height:22px;color:#e8d44c;transform:scaleX(0.852);transform-origin:0 50%;">RX 1</div><div class="t s" style="left:263.0px;top:242.0px;font-size:19px;line-height:22px;color:#e8d44c;transform:scaleX(0.947);transform-origin:0 50%;">100 - 2700 Hz</div><div class="t s" style="left:12.7px;top:278.5px;font-size:43px;line-height:51px;color:#474747;">0</div><div class="t s" style="left:38.0px;top:278.5px;font-size:43px;line-height:51px;color:#474747;">0</div><div class="t s" style="left:69.3px;top:278.5px;font-size:43px;line-height:51px;color:#474747;">.</div><div class="t s" style="left:88.6px;top:278.5px;font-size:43px;line-height:51px;color:#474747;">0</div><div class="t s" style="left:113.9px;top:278.5px;font-size:43px;line-height:51px;color:#474747;">0</div><div class="t s" style="left:139.2px;top:278.5px;font-size:43px;line-height:51px;color:#fff;">6</div><div class="t s" style="left:170.5px;top:278.5px;font-size:43px;line-height:51px;color:#fff;">.</div><div class="t s" style="left:189.8px;top:278.5px;font-size:43px;line-height:51px;color:#fff;">5</div><div class="t s" style="left:215.1px;top:278.5px;font-size:43px;line-height:51px;color:#fff;">6</div><div class="t s" style="left:240.4px;top:278.5px;font-size:43px;line-height:51px;color:#fff;">8</div><div class="t s" style="left:271.7px;top:278.5px;font-size:43px;line-height:51px;color:#fff;">.</div><div class="t s" style="left:291.0px;top:278.5px;font-size:43px;line-height:51px;color:#fff;">0</div><div class="t s" style="left:316.3px;top:278.5px;font-size:43px;line-height:51px;color:#fff;">0</div><div class="t s" style="left:341.6px;top:278.5px;font-size:43px;line-height:51px;color:#fff;">0</div><div class="a" style="left:6px;top:345px;width:375px;height:36px;background:#e5e5e5;border:1px solid #acacac;box-sizing:border-box;"></div><div class="t s" style="left:8.0px;top:352.0px;font-size:19px;line-height:22px;color:#111;transform:scaleX(0.851);transform-origin:0 50%;">VoiceMeeter Input (VB-Audio VoiceMeeter VAIO)</div><svg class="a" style="left:360px;top:357px" width="16" height="12"><path d="M1,2 h14 l-7,8 z" fill="#777"/></svg><svg class="a" style="left:12px;top:401px" width="80" height="26"><g fill="#444"><rect x="0" y="2" width="4" height="20" fill="#555" opacity=".8"/><rect x="6" y="10" width="4" height="12"/><rect x="12" y="14" width="4" height="8"/><rect x="18" y="10" width="4" height="12"/></g><g stroke="#f0f0f0" stroke-width="1"><path d="M0,7 h24 M0,12 h24 M0,17 h24"/></g><path d="M46,9 h5 l7,-6 v20 l-7,-6 h-5 z" fill="#c8c8c8" stroke="#777"/><path d="M62,7 q4,6 0,12 M66,4 q6,9 0,18" stroke="#3aa040" stroke-width="2" fill="none"/></svg><div class="a" style="left:127px;top:411px;width:191px;height:5px;background:#fff;border:1px solid #c8c8c8;border-radius:3px;box-sizing:border-box;"></div><div class="a" style="left:127px;top:411px;width:84px;height:5px;background:#c8c8c8;border-radius:3px;"></div><div class="a" style="left:128px;top:412px;width:13px;height:3px;background:#3cb040;"></div><div class="a" style="left:317px;top:397px;width:20px;height:27px;background:linear-gradient(90deg,#f4f4f4,#dcdcdc);border:1px solid #a6a6a6;border-radius:3px;box-sizing:border-box;"></div><div class="a" style="left:324px;top:404px;width:1px;height:13px;background:#b0b0b0;"></div><div class="a" style="left:328px;top:404px;width:1px;height:13px;background:#b0b0b0;"></div><div class="t s" style="left:356.0px;top:402.0px;font-size:17px;line-height:20px;color:#111;transform:scaleX(0.917);transform-origin:0 50%;">100</div><div class="a" style="left:2px;top:433px;width:401px;height:26px;background:linear-gradient(90deg,#f2f2f2,#e4e4e4 60%,#ececec);"></div><div class="t s" style="left:6.0px;top:437.0px;font-size:17px;line-height:20px;color:#333;font-weight:bold;transform:scaleX(0.959);transform-origin:0 50%;">IF Display</div><svg class="a" style="left:383px;top:441px" width="14" height="10"><path d="M1,8 h12 l-6,-6 z" fill="#999"/></svg><div class="a" style="left:2px;top:459px;width:401px;height:129px;background:#0c0c0c;"></div><svg class="a" style="left:2px;top:459px" width="401" height="129"><path d="M28,18.5 H372" stroke="#8a8a8a" stroke-width="1" stroke-dasharray="1.2 4.5"/><path d="M28,36 H372" stroke="#8a8a8a" stroke-width="1" stroke-dasharray="1.2 4.5"/><path d="M28,56.5 H372" stroke="#8a8a8a" stroke-width="1" stroke-dasharray="1.2 4.5"/><path d="M28,78 H372" stroke="#8a8a8a" stroke-width="1" stroke-dasharray="1.2 4.5"/><path d="M28,98.5 H372" stroke="#8a8a8a" stroke-width="1" stroke-dasharray="1.2 4.5"/><text x="6" y="9" font-size="6" fill="#999" font-family="Liberation Sans">+30</text><text x="386" y="9" font-size="6" fill="#999" font-family="Liberation Sans">+30</text><text x="6" y="21" font-size="6" fill="#999" font-family="Liberation Sans">+20</text><text x="386" y="21" font-size="6" fill="#999" font-family="Liberation Sans">+20</text><text x="6" y="33" font-size="6" fill="#999" font-family="Liberation Sans">+10</text><text x="386" y="33" font-size="6" fill="#999" font-family="Liberation Sans">+10</text><text x="6" y="45" font-size="6" fill="#999" font-family="Liberation Sans">S8</text><text x="386" y="45" font-size="6" fill="#999" font-family="Liberation Sans">S8</text><text x="6" y="57" font-size="6" fill="#999" font-family="Liberation Sans">S7</text><text x="386" y="57" font-size="6" fill="#999" font-family="Liberation Sans">S7</text><text x="6" y="70" font-size="6" fill="#999" font-family="Liberation Sans">S5</text><text x="386" y="70" font-size="6" fill="#999" font-family="Liberation Sans">S5</text><text x="6" y="84" font-size="6" fill="#999" font-family="Liberation Sans">S3</text><text x="386" y="84" font-size="6" fill="#999" font-family="Liberation Sans">S3</text><text x="6" y="98" font-size="6" fill="#999" font-family="Liberation Sans">S1</text><text x="386" y="98" font-size="6" fill="#999" font-family="Liberation Sans">S1</text><defs><linearGradient id="iff" x1="0" y1="0" x2="0" y2="1"><stop offset="0" stop-color="#141490"/><stop offset="1" stop-color="#0a0a48"/></linearGradient></defs><path d="M0,129 L0,109.0 L2,110.4 L4,111.9 L6,108.8 L8,108.1 L10,109.8 L12,108.2 L14,105.7 L16,106.3 L18,106.1 L20,108.2 L22,111.6 L24,109.8 L26,110.3 L28,109.4 L30,111.2 L32,107.5 L34,107.2 L36,106.8 L38,107.6 L40,109.3 L42,109.4 L44,107.0 L46,108.8 L48,109.0 L50,108.8 L52,107.8 L54,109.7 L56,109.8 L58,109.1 L60,109.9 L62,107.6 L64,110.7 L66,107.6 L68,109.4 L70,108.6 L72,107.9 L74,109.2 L76,107.7 L78,108.0 L80,108.1 L82,108.9 L84,105.3 L86,107.0 L88,107.5 L90,107.9 L92,107.5 L94,110.9 L96,110.2 L98,108.4 L100,106.6 L102,108.8 L104,108.5 L106,106.7 L108,108.1 L110,108.3 L112,107.3 L114,108.2 L116,109.3 L118,105.6 L120,108.0 L122,110.9 L124,108.8 L126,108.5 L128,108.8 L130,109.7 L132,109.6 L134,110.0 L136,112.2 L138,108.0 L140,109.1 L142,110.0 L144,108.3 L146,111.4 L148,108.6 L150,107.2 L152,107.9 L154,105.4 L156,109.0 L158,110.5 L160,107.9 L162,108.0 L164,106.9 L166,107.0 L168,106.0 L170,106.0 L172,105.5 L174,108.5 L176,108.3 L178,108.5 L180,110.5 L182,109.9 L184,109.0 L186,109.8 L188,108.9 L190,108.7 L192,108.0 L194,109.6 L196,109.3 L198,108.7 L200,108.5 L202,109.7 L204,109.3 L206,110.6 L208,108.7 L210,109.6 L212,107.4 L214,110.7 L216,110.1 L218,109.5 L220,109.4 L222,109.9 L224,109.8 L226,108.2 L228,108.3 L230,109.9 L232,107.5 L234,109.7 L236,110.6 L238,110.2 L240,113.0 L242,112.8 L244,110.8 L246,109.5 L248,106.8 L250,107.6 L252,109.4 L254,110.1 L256,110.7 L258,109.2 L260,111.2 L262,109.1 L264,112.0 L266,112.6 L268,108.3 L270,108.1 L272,110.6 L274,108.2 L276,106.2 L278,105.0 L280,108.9 L282,107.1 L284,105.6 L286,107.0 L288,110.0 L290,110.3 L292,111.1 L294,108.6 L296,107.0 L298,108.0 L300,109.5 L302,110.6 L304,109.6 L306,108.5 L308,107.4 L310,109.3 L312,109.2 L314,112.3 L316,112.0 L318,108.3 L320,108.6 L322,108.5 L324,110.2 L326,108.0 L328,108.0 L330,108.4 L332,109.4 L334,110.3 L336,112.4 L338,112.0 L340,113.2 L342,110.8 L344,109.3 L346,108.1 L348,108.5 L350,107.8 L352,108.4 L354,108.2 L356,108.9 L358,107.5 L360,106.8 L362,105.9 L364,106.5 L366,106.7 L368,108.9 L370,108.0 L372,110.3 L374,109.2 L376,108.6 L378,108.9 L380,107.0 L382,107.8 L384,108.2 L386,108.3 L388,111.5 L390,109.6 L392,107.4 L394,107.0 L396,106.8 L398,108.9 L400,110.1 L401,129 Z" fill="url(#iff)"/><path d="M0,109.0 L2,110.4 L4,111.9 L6,108.8 L8,108.1 L10,109.8 L12,108.2 L14,105.7 L16,106.3 L18,106.1 L20,108.2 L22,111.6 L24,109.8 L26,110.3 L28,109.4 L30,111.2 L32,107.5 L34,107.2 L36,106.8 L38,107.6 L40,109.3 L42,109.4 L44,107.0 L46,108.8 L48,109.0 L50,108.8 L52,107.8 L54,109.7 L56,109.8 L58,109.1 L60,109.9 L62,107.6 L64,110.7 L66,107.6 L68,109.4 L70,108.6 L72,107.9 L74,109.2 L76,107.7 L78,108.0 L80,108.1 L82,108.9 L84,105.3 L86,107.0 L88,107.5 L90,107.9 L92,107.5 L94,110.9 L96,110.2 L98,108.4 L100,106.6 L102,108.8 L104,108.5 L106,106.7 L108,108.1 L110,108.3 L112,107.3 L114,108.2 L116,109.3 L118,105.6 L120,108.0 L122,110.9 L124,108.8 L126,108.5 L128,108.8 L130,109.7 L132,109.6 L134,110.0 L136,112.2 L138,108.0 L140,109.1 L142,110.0 L144,108.3 L146,111.4 L148,108.6 L150,107.2 L152,107.9 L154,105.4 L156,109.0 L158,110.5 L160,107.9 L162,108.0 L164,106.9 L166,107.0 L168,106.0 L170,106.0 L172,105.5 L174,108.5 L176,108.3 L178,108.5 L180,110.5 L182,109.9 L184,109.0 L186,109.8 L188,108.9 L190,108.7 L192,108.0 L194,109.6 L196,109.3 L198,108.7 L200,108.5 L202,109.7 L204,109.3 L206,110.6 L208,108.7 L210,109.6 L212,107.4 L214,110.7 L216,110.1 L218,109.5 L220,109.4 L222,109.9 L224,109.8 L226,108.2 L228,108.3 L230,109.9 L232,107.5 L234,109.7 L236,110.6 L238,110.2 L240,113.0 L242,112.8 L244,110.8 L246,109.5 L248,106.8 L250,107.6 L252,109.4 L254,110.1 L256,110.7 L258,109.2 L260,111.2 L262,109.1 L264,112.0 L266,112.6 L268,108.3 L270,108.1 L272,110.6 L274,108.2 L276,106.2 L278,105.0 L280,108.9 L282,107.1 L284,105.6 L286,107.0 L288,110.0 L290,110.3 L292,111.1 L294,108.6 L296,107.0 L298,108.0 L300,109.5 L302,110.6 L304,109.6 L306,108.5 L308,107.4 L310,109.3 L312,109.2 L314,112.3 L316,112.0 L318,108.3 L320,108.6 L322,108.5 L324,110.2 L326,108.0 L328,108.0 L330,108.4 L332,109.4 L334,110.3 L336,112.4 L338,112.0 L340,113.2 L342,110.8 L344,109.3 L346,108.1 L348,108.5 L350,107.8 L352,108.4 L354,108.2 L356,108.9 L358,107.5 L360,106.8 L362,105.9 L364,106.5 L366,106.7 L368,108.9 L370,108.0 L372,110.3 L374,109.2 L376,108.6 L378,108.9 L380,107.0 L382,107.8 L384,108.2 L386,108.3 L388,111.5 L390,109.6 L392,107.4 L394,107.0 L396,106.8 L398,108.9 L400,110.1" stroke="#e8e8ff" stroke-width="1.4" fill="none"/><defs><linearGradient id="pb" x1="0" y1="0" x2="0" y2="1"><stop offset="0" stop-color="rgba(10,150,10,0.75)"/><stop offset="0.6" stop-color="rgba(40,80,40,0.55)"/><stop offset="1" stop-color="rgba(120,130,130,0.3)"/></linearGradient></defs><rect x="134" y="3" width="133" height="124" fill="url(#pb)" stroke="#58b858" stroke-width="1.5"/><rect x="134" y="3" width="133" height="9" fill="#50e050"/><rect x="134" y="117" width="133" height="10" fill="#1f9a26"/></svg><div class="a" style="left:2px;top:588px;width:401px;height:32px;background:linear-gradient(#5a5a5a 0%,#2a2a2a 40%,#000 45%,#000 100%);"></div><svg class="a" style="left:2px;top:590px" width="401" height="10"><path d="M30,0 v6" stroke="#bbb"/><path d="M80,0 v3" stroke="#bbb"/><path d="M130,0 v6" stroke="#bbb"/><path d="M180,0 v3" stroke="#bbb"/><path d="M230,0 v6" stroke="#bbb"/><path d="M280,0 v3" stroke="#bbb"/><path d="M330,0 v6" stroke="#bbb"/><path d="M380,0 v3" stroke="#bbb"/></svg><div class="t s" style="left:12.5px;top:598.5px;font-size:16px;line-height:19px;color:#fff;transform:scaleX(0.873);transform-origin:0 50%;">6.566</div><div class="t s" style="left:112.5px;top:598.5px;font-size:16px;line-height:19px;color:#fff;transform:scaleX(0.873);transform-origin:0 50%;">6.568</div><div class="t s" style="left:212.5px;top:598.5px;font-size:16px;line-height:19px;color:#fff;transform:scaleX(0.873);transform-origin:0 50%;">6.570</div><div class="t s" style="left:313.5px;top:598.5px;font-size:16px;line-height:19px;color:#fff;transform:scaleX(0.873);transform-origin:0 50%;">6.572</div><svg class="a" style="left:2px;top:620px" width="401" height="158">
<defs><filter id="ifwff" x="0" y="0" width="401" height="158" filterUnits="userSpaceOnUse" color-interpolation-filters="sRGB">
<feTurbulence type="fractalNoise" baseFrequency="0.09 0.22" numOctaves="3" seed="21" result="n"/>
<feColorMatrix type="matrix" in="n" values="0 0 0 0 0  0 0 0 0 0  0 0 0 0 0  2.4 0 0 0 -0.9" result="a"/>
<feFlood flood-color="#1818c8" result="c"/>
<feComposite in="c" in2="a" operator="in" result="b1"/>
<feTurbulence type="fractalNoise" baseFrequency="0.006 0.45" numOctaves="1" seed="9" result="n2"/>
<feColorMatrix type="matrix" in="n2" values="0 0 0 0 0  0 0 0 0 0  0 0 0 0 0  6 0 0 0 -4.0" result="a2"/>
<feFlood flood-color="#6a90f0" result="c2"/>
<feComposite in="c2" in2="a2" operator="in" result="b2"/>
<feMerge><feMergeNode in="b1"/><feMergeNode in="b2"/></feMerge>
</filter></defs>
<rect width="401" height="158" fill="#000008"/>
<rect width="401" height="158" filter="url(#ifwff)"/>
<path d="M135,0 V158" stroke="#8c9a80" stroke-dasharray="3 3" stroke-width="1.3"/>
<path d="M267,0 V158" stroke="#8c9a80" stroke-dasharray="3 3" stroke-width="1.3"/>
</svg><div class="a" style="left:2px;top:778px;width:401px;height:28px;background:linear-gradient(90deg,#f2f2f2 0%,#e6e6e6 40%,#e2e2e2 70%,#ececec 100%);"></div><div class="t s" style="left:7.0px;top:783.0px;font-size:17px;line-height:20px;color:#333;font-weight:bold;">Mode</div><svg class="a" style="left:382px;top:787.0px" width="14" height="10"><path d="M1,8 h12 l-6,-6 z" fill="#999"/></svg><div class="a" style="left:2px;top:806px;width:401px;height:261px;background:#000;"></div><div class="a" style="left:14px;top:820px;width:90px;height:33px;background:linear-gradient(#3e3e3e 0%,#303030 44%,#3a3a3a 49%,#000 51%,#000 100%);border:1px solid #5c5c5c;box-sizing:border-box;"></div><div class="t s" style="left:46.3px;top:826.5px;font-size:17px;line-height:20px;color:#d8d8d8;transform:scaleX(0.930);transform-origin:0 50%;">• • •</div><div class="a" style="left:108px;top:820px;width:90px;height:33px;background:linear-gradient(#3e3e3e 0%,#303030 44%,#3a3a3a 49%,#000 51%,#000 100%);border:1px solid #5c5c5c;box-sizing:border-box;"></div><div class="t s" style="left:128.6px;top:826.5px;font-size:17px;line-height:20px;color:#d8d8d8;transform:scaleX(0.930);transform-origin:0 50%;">Step ☰</div><div class="a" style="left:208px;top:820px;width:89px;height:33px;background:linear-gradient(#3e3e3e 0%,#303030 44%,#3a3a3a 49%,#000 51%,#000 100%);border:1px solid #5c5c5c;box-sizing:border-box;"></div><div class="t s" style="left:240.6px;top:826.5px;font-size:17px;line-height:20px;color:#d8d8d8;transform:scaleX(0.930);transform-origin:0 50%;">AM</div><div class="a" style="left:14px;top:860px;width:90px;height:33px;background:linear-gradient(#3e3e3e 0%,#303030 44%,#3a3a3a 49%,#000 51%,#000 100%);border:1px solid #5c5c5c;box-sizing:border-box;"></div><div class="t s" style="left:41.9px;top:866.5px;font-size:17px;line-height:20px;color:#d8d8d8;transform:scaleX(0.930);transform-origin:0 50%;">SAM</div><div class="a" style="left:111px;top:860px;width:89px;height:33px;background:linear-gradient(#3e3e3e 0%,#303030 44%,#3a3a3a 49%,#000 51%,#000 100%);border:1px solid #5c5c5c;box-sizing:border-box;"></div><div class="t s" style="left:126.9px;top:866.5px;font-size:17px;line-height:20px;color:#d8d8d8;transform:scaleX(0.930);transform-origin:0 50%;">ECSS-L</div><div class="a" style="left:208px;top:860px;width:89px;height:33px;background:linear-gradient(#3e3e3e 0%,#303030 44%,#3a3a3a 49%,#000 51%,#000 100%);border:1px solid #5c5c5c;box-sizing:border-box;"></div><div class="t s" style="left:222.6px;top:866.5px;font-size:17px;line-height:20px;color:#d8d8d8;transform:scaleX(0.930);transform-origin:0 50%;">ECSS-U</div><div class="a" style="left:14px;top:900px;width:90px;height:33px;background:linear-gradient(#3e3e3e 0%,#303030 44%,#3a3a3a 49%,#000 51%,#000 100%);border:1px solid #5c5c5c;box-sizing:border-box;"></div><div class="t s" style="left:37.6px;top:906.5px;font-size:17px;line-height:20px;color:#d8d8d8;transform:scaleX(0.930);transform-origin:0 50%;">CW-U</div><div class="a" style="left:111px;top:900px;width:89px;height:33px;background:linear-gradient(#3e3e3e 0%,#303030 44%,#3a3a3a 49%,#000 51%,#000 100%);border:1px solid #5c5c5c;box-sizing:border-box;"></div><div class="t s" style="left:135.4px;top:906.5px;font-size:17px;line-height:20px;color:#d8d8d8;transform:scaleX(0.930);transform-origin:0 50%;">CW-L</div><div class="a" style="left:208px;top:900px;width:89px;height:33px;background:linear-gradient(#3e3e3e 0%,#303030 44%,#3a3a3a 49%,#000 51%,#000 100%);border:1px solid #5c5c5c;box-sizing:border-box;"></div><div class="t s" style="left:227.5px;top:906.5px;font-size:17px;line-height:20px;color:#d8d8d8;transform:scaleX(0.930);transform-origin:0 50%;">BC-FM</div><div class="a" style="left:14px;top:940px;width:90px;height:33px;background:linear-gradient(#3e3e3e 0%,#303030 44%,#3a3a3a 49%,#000 51%,#000 100%);border:1px solid #5c5c5c;box-sizing:border-box;"></div><div class="t s" style="left:39.2px;top:946.5px;font-size:17px;line-height:20px;color:#d8d8d8;transform:scaleX(0.930);transform-origin:0 50%;">N-FM</div><div class="a" style="left:111px;top:940px;width:89px;height:33px;background:linear-gradient(#3e3e3e 0%,#303030 44%,#3a3a3a 49%,#000 51%,#000 100%);border:1px solid #5c5c5c;box-sizing:border-box;"></div><div class="t s" style="left:134.1px;top:946.5px;font-size:17px;line-height:20px;color:#d8d8d8;transform:scaleX(0.930);transform-origin:0 50%;">W-FM</div><div class="a" style="left:208px;top:940px;width:89px;height:33px;background:linear-gradient(#3e3e3e 0%,#303030 44%,#3a3a3a 49%,#000 51%,#000 100%);border:1px solid #5c5c5c;box-sizing:border-box;"></div><div class="t s" style="left:237.6px;top:946.5px;font-size:17px;line-height:20px;color:#d8d8d8;transform:scaleX(0.930);transform-origin:0 50%;">LSB</div><div class="a" style="left:14px;top:980px;width:90px;height:33px;background:linear-gradient(#3e3e3e 0%,#303030 44%,#3a3a3a 49%,#000 51%,#000 100%);border:1px solid #5c5c5c;box-sizing:border-box;"></div><div class="a" style="left:15px;top:996px;width:88px;height:15px;background:radial-gradient(ellipse 50% 70% at 50% 100%,#e8e030 0%,#8a8410 55%,rgba(0,0,0,0) 100%);"></div><div class="t s" style="left:42.3px;top:986.5px;font-size:17px;line-height:20px;color:#fff;font-weight:bold;transform:scaleX(0.930);transform-origin:0 50%;">USB</div><div class="a" style="left:111px;top:980px;width:89px;height:33px;background:linear-gradient(#3e3e3e 0%,#303030 44%,#3a3a3a 49%,#000 51%,#000 100%);border:1px solid #5c5c5c;box-sizing:border-box;"></div><div class="t s" style="left:130.5px;top:986.5px;font-size:17px;line-height:20px;color:#d8d8d8;transform:scaleX(0.930);transform-origin:0 50%;">Wide-L</div><div class="a" style="left:208px;top:980px;width:89px;height:33px;background:linear-gradient(#3e3e3e 0%,#303030 44%,#3a3a3a 49%,#000 51%,#000 100%);border:1px solid #5c5c5c;box-sizing:border-box;"></div><div class="t s" style="left:226.1px;top:986.5px;font-size:17px;line-height:20px;color:#d8d8d8;transform:scaleX(0.930);transform-origin:0 50%;">Wide-U</div><div class="a" style="left:14px;top:1020px;width:90px;height:33px;background:linear-gradient(#3e3e3e 0%,#303030 44%,#3a3a3a 49%,#000 51%,#000 100%);border:1px solid #5c5c5c;box-sizing:border-box;"></div><div class="t s" style="left:42.7px;top:1026.5px;font-size:17px;line-height:20px;color:#d8d8d8;transform:scaleX(0.930);transform-origin:0 50%;">DSB</div><div class="a" style="left:2px;top:1067px;width:401px;height:26px;background:linear-gradient(90deg,#f2f2f2 0%,#e6e6e6 40%,#e2e2e2 70%,#ececec 100%);"></div><div class="t s" style="left:7.0px;top:1071.0px;font-size:17px;line-height:20px;color:#333;font-weight:bold;">Filter</div><svg class="a" style="left:382px;top:1075.0px" width="14" height="10"><path d="M1,8 h12 l-6,-6 z" fill="#999"/></svg><div class="a" style="left:2px;top:1093px;width:401px;height:380px;background:#000;"></div><div class="a" style="left:14px;top:1107px;width:90px;height:32px;background:linear-gradient(#3e3e3e 0%,#303030 44%,#3a3a3a 49%,#000 51%,#000 100%);border:1px solid #5c5c5c;box-sizing:border-box;"></div><div class="t s" style="left:46.3px;top:1113.0px;font-size:17px;line-height:20px;color:#d8d8d8;transform:scaleX(0.930);transform-origin:0 50%;">• • •</div><div class="a" style="left:111px;top:1107px;width:89px;height:32px;background:linear-gradient(#3e3e3e 0%,#303030 44%,#3a3a3a 49%,#000 51%,#000 100%);border:1px solid #5c5c5c;box-sizing:border-box;"></div><div class="t s" style="left:130.5px;top:1113.0px;font-size:17px;line-height:20px;color:#d8d8d8;transform:scaleX(0.930);transform-origin:0 50%;">100 Hz</div><div class="a" style="left:208px;top:1107px;width:89px;height:32px;background:linear-gradient(#3e3e3e 0%,#303030 44%,#3a3a3a 49%,#000 51%,#000 100%);border:1px solid #5c5c5c;box-sizing:border-box;"></div><div class="t s" style="left:227.5px;top:1113.0px;font-size:17px;line-height:20px;color:#d8d8d8;transform:scaleX(0.930);transform-origin:0 50%;">150 Hz</div><div class="a" style="left:14px;top:1147px;width:90px;height:32px;background:linear-gradient(#3e3e3e 0%,#303030 44%,#3a3a3a 49%,#000 51%,#000 100%);border:1px solid #5c5c5c;box-sizing:border-box;"></div><div class="t s" style="left:34.0px;top:1153.0px;font-size:17px;line-height:20px;color:#d8d8d8;transform:scaleX(0.930);transform-origin:0 50%;">500 Hz</div><div class="a" style="left:111px;top:1147px;width:89px;height:32px;background:linear-gradient(#3e3e3e 0%,#303030 44%,#3a3a3a 49%,#000 51%,#000 100%);border:1px solid #5c5c5c;box-sizing:border-box;"></div><div class="t s" style="left:130.5px;top:1153.0px;font-size:17px;line-height:20px;color:#d8d8d8;transform:scaleX(0.930);transform-origin:0 50%;">800 Hz</div><div class="a" style="left:208px;top:1147px;width:89px;height:32px;background:linear-gradient(#3e3e3e 0%,#303030 44%,#3a3a3a 49%,#000 51%,#000 100%);border:1px solid #5c5c5c;box-sizing:border-box;"></div><div class="t s" style="left:225.7px;top:1153.0px;font-size:17px;line-height:20px;color:#d8d8d8;transform:scaleX(0.930);transform-origin:0 50%;">1.2 kHz</div><div class="a" style="left:14px;top:1187px;width:90px;height:32px;background:linear-gradient(#3e3e3e 0%,#303030 44%,#3a3a3a 49%,#000 51%,#000 100%);border:1px solid #5c5c5c;box-sizing:border-box;"></div><div class="t s" style="left:34.4px;top:1193.0px;font-size:17px;line-height:20px;color:#d8d8d8;transform:scaleX(0.930);transform-origin:0 50%;">2.2kHz</div><div class="a" style="left:111px;top:1187px;width:89px;height:32px;background:linear-gradient(#3e3e3e 0%,#303030 44%,#3a3a3a 49%,#000 51%,#000 100%);border:1px solid #5c5c5c;box-sizing:border-box;"></div><div class="t s" style="left:130.9px;top:1193.0px;font-size:17px;line-height:20px;color:#d8d8d8;transform:scaleX(0.930);transform-origin:0 50%;">2.4kHz</div><div class="a" style="left:208px;top:1187px;width:89px;height:32px;background:linear-gradient(#3e3e3e 0%,#303030 44%,#3a3a3a 49%,#000 51%,#000 100%);border:1px solid #5c5c5c;box-sizing:border-box;"></div><div class="a" style="left:209px;top:1203px;width:87px;height:15px;background:radial-gradient(ellipse 50% 70% at 50% 100%,#e8e030 0%,#8a8410 55%,rgba(0,0,0,0) 100%);"></div><div class="t s" style="left:227.5px;top:1193.0px;font-size:17px;line-height:20px;color:#fff;font-weight:bold;transform:scaleX(0.930);transform-origin:0 50%;">2.6kHz</div><div class="a" style="left:14px;top:1227px;width:90px;height:32px;background:linear-gradient(#3e3e3e 0%,#303030 44%,#3a3a3a 49%,#000 51%,#000 100%);border:1px solid #5c5c5c;box-sizing:border-box;"></div><div class="t s" style="left:34.4px;top:1233.0px;font-size:17px;line-height:20px;color:#d8d8d8;transform:scaleX(0.930);transform-origin:0 50%;">2.8kHz</div><div class="a" style="left:111px;top:1227px;width:89px;height:32px;background:linear-gradient(#3e3e3e 0%,#303030 44%,#3a3a3a 49%,#000 51%,#000 100%);border:1px solid #5c5c5c;box-sizing:border-box;"></div><div class="t s" style="left:130.9px;top:1233.0px;font-size:17px;line-height:20px;color:#d8d8d8;transform:scaleX(0.930);transform-origin:0 50%;">3.0kHz</div><div class="a" style="left:208px;top:1227px;width:89px;height:32px;background:linear-gradient(#3e3e3e 0%,#303030 44%,#3a3a3a 49%,#000 51%,#000 100%);border:1px solid #5c5c5c;box-sizing:border-box;"></div><div class="t s" style="left:227.9px;top:1233.0px;font-size:17px;line-height:20px;color:#d8d8d8;transform:scaleX(0.930);transform-origin:0 50%;">3.2kHz</div><div class="a" style="left:14px;top:1267px;width:90px;height:32px;background:linear-gradient(#3e3e3e 0%,#303030 44%,#3a3a3a 49%,#000 51%,#000 100%);border:1px solid #5c5c5c;box-sizing:border-box;"></div><div class="t s" style="left:34.4px;top:1273.0px;font-size:17px;line-height:20px;color:#d8d8d8;transform:scaleX(0.930);transform-origin:0 50%;">3.4kHz</div><div class="a" style="left:111px;top:1267px;width:89px;height:32px;background:linear-gradient(#3e3e3e 0%,#303030 44%,#3a3a3a 49%,#000 51%,#000 100%);border:1px solid #5c5c5c;box-sizing:border-box;"></div><div class="t s" style="left:130.9px;top:1273.0px;font-size:17px;line-height:20px;color:#d8d8d8;transform:scaleX(0.930);transform-origin:0 50%;">3.6kHz</div><div class="a" style="left:208px;top:1267px;width:89px;height:32px;background:linear-gradient(#3e3e3e 0%,#303030 44%,#3a3a3a 49%,#000 51%,#000 100%);border:1px solid #5c5c5c;box-sizing:border-box;"></div><div class="t s" style="left:234.5px;top:1273.0px;font-size:17px;line-height:20px;color:#d8d8d8;transform:scaleX(0.930);transform-origin:0 50%;">5kHz</div><div class="a" style="left:14px;top:1307px;width:90px;height:32px;background:linear-gradient(#3e3e3e 0%,#303030 44%,#3a3a3a 49%,#000 51%,#000 100%);border:1px solid #5c5c5c;box-sizing:border-box;"></div><div class="t s" style="left:41.0px;top:1313.0px;font-size:17px;line-height:20px;color:#d8d8d8;transform:scaleX(0.930);transform-origin:0 50%;">8kHz</div><div class="a" style="left:111px;top:1307px;width:89px;height:32px;background:linear-gradient(#3e3e3e 0%,#303030 44%,#3a3a3a 49%,#000 51%,#000 100%);border:1px solid #5c5c5c;box-sizing:border-box;"></div><div class="t s" style="left:133.1px;top:1313.0px;font-size:17px;line-height:20px;color:#d8d8d8;transform:scaleX(0.930);transform-origin:0 50%;">10kHz</div><div class="a" style="left:208px;top:1307px;width:89px;height:32px;background:linear-gradient(#3e3e3e 0%,#303030 44%,#3a3a3a 49%,#000 51%,#000 100%);border:1px solid #5c5c5c;box-sizing:border-box;"></div><div class="t s" style="left:225.7px;top:1313.0px;font-size:17px;line-height:20px;color:#d8d8d8;transform:scaleX(0.930);transform-origin:0 50%;">85-FSK</div><div class="a" style="left:14px;top:1347px;width:90px;height:32px;background:linear-gradient(#3e3e3e 0%,#303030 44%,#3a3a3a 49%,#000 51%,#000 100%);border:1px solid #5c5c5c;box-sizing:border-box;"></div><div class="t s" style="left:32.2px;top:1346.0px;font-size:17px;line-height:20px;color:#d8d8d8;transform:scaleX(0.930);transform-origin:0 50%;">85-FSK</div><div class="t s" style="left:34.6px;top:1362.0px;font-size:17px;line-height:20px;color:#d8d8d8;transform:scaleX(0.930);transform-origin:0 50%;">(offset)</div><div class="a" style="left:111px;top:1347px;width:89px;height:32px;background:linear-gradient(#3e3e3e 0%,#303030 44%,#3a3a3a 49%,#000 51%,#000 100%);border:1px solid #5c5c5c;box-sizing:border-box;"></div><div class="t s" style="left:124.3px;top:1353.0px;font-size:17px;line-height:20px;color:#d8d8d8;transform:scaleX(0.930);transform-origin:0 50%;">170-FSK</div><div class="a" style="left:208px;top:1347px;width:89px;height:32px;background:linear-gradient(#3e3e3e 0%,#303030 44%,#3a3a3a 49%,#000 51%,#000 100%);border:1px solid #5c5c5c;box-sizing:border-box;"></div><div class="t s" style="left:221.3px;top:1353.0px;font-size:17px;line-height:20px;color:#d8d8d8;transform:scaleX(0.930);transform-origin:0 50%;">200-FSK</div><div class="a" style="left:14px;top:1387px;width:90px;height:32px;background:linear-gradient(#3e3e3e 0%,#303030 44%,#3a3a3a 49%,#000 51%,#000 100%);border:1px solid #5c5c5c;box-sizing:border-box;"></div><div class="t s" style="left:27.8px;top:1393.0px;font-size:17px;line-height:20px;color:#d8d8d8;transform:scaleX(0.930);transform-origin:0 50%;">450-FSK</div><div class="a" style="left:111px;top:1387px;width:89px;height:32px;background:linear-gradient(#3e3e3e 0%,#303030 44%,#3a3a3a 49%,#000 51%,#000 100%);border:1px solid #5c5c5c;box-sizing:border-box;"></div><div class="t s" style="left:124.3px;top:1393.0px;font-size:17px;line-height:20px;color:#d8d8d8;transform:scaleX(0.930);transform-origin:0 50%;">850-FSK</div><div class="a" style="left:208px;top:1387px;width:89px;height:32px;background:linear-gradient(#3e3e3e 0%,#303030 44%,#3a3a3a 49%,#000 51%,#000 100%);border:1px solid #5c5c5c;box-sizing:border-box;"></div><div class="t s" style="left:224.4px;top:1393.0px;font-size:17px;line-height:20px;color:#d8d8d8;transform:scaleX(0.930);transform-origin:0 50%;">HF-FAX</div><div class="a" style="left:14px;top:1427px;width:90px;height:32px;background:linear-gradient(#3e3e3e 0%,#303030 44%,#3a3a3a 49%,#000 51%,#000 100%);border:1px solid #5c5c5c;box-sizing:border-box;"></div><div class="t s" style="left:25.2px;top:1433.0px;font-size:17px;line-height:20px;color:#d8d8d8;transform:scaleX(0.930);transform-origin:0 50%;">HF-SSTV</div><div class="a" style="left:2px;top:1473px;width:401px;height:26px;background:linear-gradient(90deg,#f2f2f2 0%,#e6e6e6 40%,#e2e2e2 70%,#ececec 100%);"></div><div class="t s" style="left:7.0px;top:1477.0px;font-size:17px;line-height:20px;color:#333;font-weight:bold;">AGC: Slow</div><svg class="a" style="left:382px;top:1481.0px" width="14" height="10"><path d="M1,8 h12 l-6,-6 z" fill="#999"/></svg><div class="a" style="left:6px;top:1506px;width:56px;height:35px;background:#e1e1e1;border:1px solid #adadad;box-sizing:border-box;"></div><div class="t s" style="left:23.4px;top:1513.5px;font-size:17px;line-height:20px;color:#222;transform:scaleX(0.950);transform-origin:0 50%;">Off</div><div class="a" style="left:64px;top:1506px;width:56px;height:35px;background:#e1e1e1;border:1px solid #adadad;box-sizing:border-box;"></div><div class="t s" style="left:76.3px;top:1513.5px;font-size:17px;line-height:20px;color:#222;transform:scaleX(0.950);transform-origin:0 50%;">Fast</div><div class="a" style="left:123px;top:1506px;width:56px;height:35px;background:#e1e1e1;border:1px solid #adadad;box-sizing:border-box;"></div><div class="t s" style="left:135.3px;top:1513.5px;font-size:17px;line-height:20px;color:#222;transform:scaleX(0.950);transform-origin:0 50%;">Med</div><div class="a" style="left:181px;top:1506px;width:56px;height:35px;background:#cce4f7;border:1px solid #2f78c0;box-sizing:border-box;"></div><div class="t s" style="left:191.5px;top:1513.5px;font-size:17px;line-height:20px;color:#222;transform:scaleX(0.950);transform-origin:0 50%;">Slow</div><svg class="a" style="left:250px;top:1506px" width="130" height="36"><path d="M12,14 q14,-2 18,12 q-4,-8 -18,-6 v6 l-9,-9 l9,-9 z" fill="#111"/><rect x="50" y="5" width="32" height="26" fill="#e8e8e8"/><path d="M55,13 h20 v10 h-20 z M60,18 h10" stroke="#9aa" fill="none" stroke-width="1.5"/><path d="M98,28 v-22 M95,28 h26 M100,25 l5,-9 l4,5 l5,-12 l3,4" stroke="#222" fill="none" stroke-width="1.5"/></svg><div class="t s" style="left:14.0px;top:1562.0px;font-size:17px;line-height:20px;color:#111;transform:scaleX(0.950);transform-origin:0 50%;">Threshold</div><div class="a" style="left:114px;top:1571px;width:182px;height:6px;background:#e8e8e8;border:1px solid #c4c4c4;border-radius:3px;box-sizing:border-box;"></div><div class="a" style="left:132px;top:1561px;width:20px;height:27px;background:linear-gradient(90deg,#f4f4f4,#dcdcdc);border:1px solid #a6a6a6;border-radius:3px;box-sizing:border-box;"></div><div class="a" style="left:139px;top:1567px;width:1px;height:14px;background:#b0b0b0;"></div><div class="a" style="left:143px;top:1567px;width:1px;height:14px;background:#b0b0b0;"></div><div class="t s" style="left:326.4px;top:1563.0px;font-size:17px;line-height:20px;color:#111;transform:scaleX(0.950);transform-origin:0 50%;">-130 dB</div><div class="t s" style="left:14.0px;top:1604.0px;font-size:17px;line-height:20px;color:#111;transform:scaleX(0.950);transform-origin:0 50%;">Slope</div><div class="a" style="left:114px;top:1613px;width:182px;height:6px;background:#e8e8e8;border:1px solid #c4c4c4;border-radius:3px;box-sizing:border-box;"></div><div class="a" style="left:159px;top:1603px;width:20px;height:27px;background:linear-gradient(90deg,#f4f4f4,#dcdcdc);border:1px solid #a6a6a6;border-radius:3px;box-sizing:border-box;"></div><div class="a" style="left:166px;top:1609px;width:1px;height:14px;background:#b0b0b0;"></div><div class="a" style="left:170px;top:1609px;width:1px;height:14px;background:#b0b0b0;"></div><div class="t s" style="left:349.8px;top:1605.0px;font-size:17px;line-height:20px;color:#111;transform:scaleX(0.950);transform-origin:0 50%;">6 dB</div><div class="t s" style="left:14.0px;top:1646.0px;font-size:17px;line-height:20px;color:#111;transform:scaleX(0.950);transform-origin:0 50%;">Hang</div><div class="a" style="left:114px;top:1655px;width:182px;height:6px;background:#e8e8e8;border:1px solid #c4c4c4;border-radius:3px;box-sizing:border-box;"></div><div class="a" style="left:195px;top:1645px;width:20px;height:27px;background:linear-gradient(90deg,#f4f4f4,#dcdcdc);border:1px solid #a6a6a6;border-radius:3px;box-sizing:border-box;"></div><div class="a" style="left:202px;top:1651px;width:1px;height:14px;background:#b0b0b0;"></div><div class="a" style="left:206px;top:1651px;width:1px;height:14px;background:#b0b0b0;"></div><div class="t s" style="left:330.1px;top:1647.0px;font-size:17px;line-height:20px;color:#111;transform:scaleX(0.950);transform-origin:0 50%;">500 ms</div><div class="t s" style="left:14.0px;top:1688.0px;font-size:17px;line-height:20px;color:#111;transform:scaleX(0.950);transform-origin:0 50%;">Decay</div><div class="a" style="left:114px;top:1697px;width:182px;height:6px;background:#e8e8e8;border:1px solid #c4c4c4;border-radius:3px;box-sizing:border-box;"></div><div class="a" style="left:286px;top:1687px;width:20px;height:27px;background:linear-gradient(90deg,#f4f4f4,#dcdcdc);border:1px solid #a6a6a6;border-radius:3px;box-sizing:border-box;"></div><div class="a" style="left:293px;top:1693px;width:1px;height:14px;background:#b0b0b0;"></div><div class="a" style="left:297px;top:1693px;width:1px;height:14px;background:#b0b0b0;"></div><div class="t s" style="left:321.1px;top:1689.0px;font-size:17px;line-height:20px;color:#111;transform:scaleX(0.950);transform-origin:0 50%;">1000 ms</div><div class="a" style="left:2px;top:1724px;width:401px;height:25px;background:linear-gradient(90deg,#f2f2f2 0%,#e6e6e6 40%,#e2e2e2 70%,#ececec 100%);"></div><div class="t s" style="left:7.0px;top:1727.5px;font-size:17px;line-height:20px;color:#333;font-weight:bold;">CW: Off</div><svg class="a" style="left:382px;top:1731.5px" width="14" height="10"><path d="M1,8 h12 l-6,-6 z" fill="#999"/></svg><div class="a" style="left:5px;top:1758px;width:20px;height:20px;background:#fff;border:1px solid #333;box-sizing:border-box;"></div><div class="t s" style="left:29.0px;top:1758.0px;font-size:17px;line-height:20px;color:#111;transform:scaleX(0.889);transform-origin:0 50%;">Peak enable</div><div class="a" style="left:2px;top:1788px;width:401px;height:25px;background:linear-gradient(90deg,#f2f2f2 0%,#e6e6e6 40%,#e2e2e2 70%,#ececec 100%);"></div><div class="t s" style="left:7.0px;top:1791.5px;font-size:17px;line-height:20px;color:#333;font-weight:bold;">Noise Blanker: Off</div><svg class="a" style="left:382px;top:1795.5px" width="14" height="10"><path d="M1,8 h12 l-6,-6 z" fill="#999"/></svg><div class="a" style="left:5px;top:1822px;width:20px;height:20px;background:#fff;border:1px solid #333;box-sizing:border-box;"></div><div class="t s" style="left:29.0px;top:1822.0px;font-size:17px;line-height:20px;color:#111;transform:scaleX(0.888);transform-origin:0 50%;">Enable</div><div class="a" style="left:2px;top:1852px;width:401px;height:25px;background:linear-gradient(90deg,#f2f2f2 0%,#e6e6e6 40%,#e2e2e2 70%,#ececec 100%);"></div><div class="t s" style="left:7.0px;top:1855.5px;font-size:17px;line-height:20px;color:#333;font-weight:bold;">Noise Reduction: Off</div><svg class="a" style="left:382px;top:1859.5px" width="14" height="10"><path d="M1,8 h12 l-6,-6 z" fill="#999"/></svg><div class="a" style="left:6px;top:1884px;width:52px;height:34px;background:#cce4f7;border:1px solid #2f78c0;box-sizing:border-box;"></div><div class="t s" style="left:21.4px;top:1891.0px;font-size:17px;line-height:20px;color:#222;transform:scaleX(0.950);transform-origin:0 50%;">Off</div><div class="a" style="left:64px;top:1884px;width:52px;height:34px;background:#e1e1e1;border:1px solid #adadad;box-sizing:border-box;"></div><div class="t s" style="left:73.8px;top:1891.0px;font-size:17px;line-height:20px;color:#222;transform:scaleX(0.950);transform-origin:0 50%;">NR1</div><div class="a" style="left:123px;top:1884px;width:52px;height:34px;background:#e1e1e1;border:1px solid #adadad;box-sizing:border-box;"></div><div class="t s" style="left:132.8px;top:1891.0px;font-size:17px;line-height:20px;color:#222;transform:scaleX(0.950);transform-origin:0 50%;">NR2</div><div class="a" style="left:181px;top:1884px;width:52px;height:34px;background:#e1e1e1;border:1px solid #adadad;box-sizing:border-box;"></div><div class="t s" style="left:190.8px;top:1891.0px;font-size:17px;line-height:20px;color:#222;transform:scaleX(0.950);transform-origin:0 50%;">NR3</div><div class="a" style="left:240px;top:1884px;width:52px;height:34px;background:#e1e1e1;border:1px solid #adadad;box-sizing:border-box;"></div><div class="t s" style="left:249.8px;top:1891.0px;font-size:17px;line-height:20px;color:#222;transform:scaleX(0.950);transform-origin:0 50%;">NR4</div><div class="a" style="left:2px;top:1941px;width:401px;height:25px;background:linear-gradient(90deg,#f2f2f2 0%,#e6e6e6 40%,#e2e2e2 70%,#ececec 100%);"></div><div class="t s" style="left:7.0px;top:1944.5px;font-size:17px;line-height:20px;color:#333;font-weight:bold;">Notch: Off</div><svg class="a" style="left:382px;top:1948.5px" width="14" height="10"><path d="M1,8 h12 l-6,-6 z" fill="#999"/></svg><div class="a" style="left:5px;top:1975px;width:20px;height:20px;background:#fff;border:1px solid #333;box-sizing:border-box;"></div><div class="t s" style="left:29.0px;top:1975.0px;font-size:17px;line-height:20px;color:#111;transform:scaleX(0.926);transform-origin:0 50%;">Auto enable</div><div class="a" style="left:2px;top:2005px;width:401px;height:25px;background:linear-gradient(90deg,#f2f2f2 0%,#e6e6e6 40%,#e2e2e2 70%,#ececec 100%);"></div><div class="t s" style="left:7.0px;top:2008.5px;font-size:17px;line-height:20px;color:#333;font-weight:bold;">Squelch: Off</div><svg class="a" style="left:382px;top:2012.5px" width="14" height="10"><path d="M1,8 h12 l-6,-6 z" fill="#999"/></svg><div class="a" style="left:5px;top:2038px;width:20px;height:20px;background:#fff;border:1px solid #333;box-sizing:border-box;"></div><div class="t s" style="left:29.0px;top:2039.0px;font-size:17px;line-height:20px;color:#111;transform:scaleX(0.815);transform-origin:0 50%;">FM</div><div class="a" style="left:105px;top:2036px;width:79px;height:27px;background:#d4d4d4;border:1px solid #c4c4c4;box-sizing:border-box;"></div><div class="t s" style="left:127.5px;top:2040.0px;font-size:17px;line-height:20px;color:#8d8d8d;transform:scaleX(0.944);transform-origin:0 50%;">Auto</div><div class="a" style="left:0px;top:207px;width:2px;height:1857px;background:#9ea4ab;"></div><div class="a" style="left:428px;top:207px;width:5px;height:1857px;background:#e3e6ea;"></div><div class="a" style="left:433px;top:207px;width:2534px;height:811px;background:linear-gradient(#000 0%,#050505 15%,#0a0a0a 38%,#111 70%,#131313 100%);"></div><svg class="a" style="left:0px;top:0px;overflow:visible" width="2967" height="1100"><path d="M512,236 H2885" stroke="#6e6e6e" stroke-width="1.4" stroke-dasharray="1.5 4.45"/><path d="M512,277 H2885" stroke="#6e6e6e" stroke-width="1.4" stroke-dasharray="1.5 4.45"/><path d="M512,316 H2885" stroke="#6e6e6e" stroke-width="1.4" stroke-dasharray="1.5 4.45"/><path d="M512,357 H2885" stroke="#6e6e6e" stroke-width="1.4" stroke-dasharray="1.5 4.45"/><path d="M512,397 H2885" stroke="#6e6e6e" stroke-width="1.4" stroke-dasharray="1.5 4.45"/><path d="M512,438 H2885" stroke="#6e6e6e" stroke-width="1.4" stroke-dasharray="1.5 4.45"/><path d="M512,479 H2885" stroke="#6e6e6e" stroke-width="1.4" stroke-dasharray="1.5 4.45"/><path d="M512,529 H2885" stroke="#6e6e6e" stroke-width="1.4" stroke-dasharray="1.5 4.45"/><path d="M512,577 H2885" stroke="#6e6e6e" stroke-width="1.4" stroke-dasharray="1.5 4.45"/><path d="M512,626 H2885" stroke="#6e6e6e" stroke-width="1.4" stroke-dasharray="1.5 4.45"/><path d="M512,674 H2885" stroke="#6e6e6e" stroke-width="1.4" stroke-dasharray="1.5 4.45"/><path d="M512,723 H2885" stroke="#6e6e6e" stroke-width="1.4" stroke-dasharray="1.5 4.45"/><path d="M512,771 H2885" stroke="#6e6e6e" stroke-width="1.4" stroke-dasharray="1.5 4.45"/><path d="M512,821 H2885" stroke="#6e6e6e" stroke-width="1.4" stroke-dasharray="1.5 4.45"/><path d="M512,869 H2885" stroke="#6e6e6e" stroke-width="1.4" stroke-dasharray="1.5 4.45"/><path d="M512,919 H2885" stroke="#6e6e6e" stroke-width="1.4" stroke-dasharray="1.5 4.45"/><path d="M512,958 H2885" stroke="#6e6e6e" stroke-width="1.4" stroke-dasharray="1.5 4.45"/><path d="M512,999 H2885" stroke="#6e6e6e" stroke-width="1.4" stroke-dasharray="1.5 4.45"/></svg><div class="t s" style="left:440.0px;top:226.5px;font-size:16px;line-height:19px;color:#d8d8d8;transform:scaleX(0.920);transform-origin:0 50%;">+30</div><div class="t s" style="left:2935.0px;top:226.5px;font-size:16px;line-height:19px;color:#d8d8d8;transform:scaleX(0.920);transform-origin:0 50%;">+30</div><div class="t s" style="left:440.0px;top:267.5px;font-size:16px;line-height:19px;color:#d8d8d8;transform:scaleX(0.920);transform-origin:0 50%;">+25</div><div class="t s" style="left:2935.0px;top:267.5px;font-size:16px;line-height:19px;color:#d8d8d8;transform:scaleX(0.920);transform-origin:0 50%;">+25</div><div class="t s" style="left:440.0px;top:306.5px;font-size:16px;line-height:19px;color:#d8d8d8;transform:scaleX(0.920);transform-origin:0 50%;">+20</div><div class="t s" style="left:2935.0px;top:306.5px;font-size:16px;line-height:19px;color:#d8d8d8;transform:scaleX(0.920);transform-origin:0 50%;">+20</div><div class="t s" style="left:440.0px;top:347.5px;font-size:16px;line-height:19px;color:#d8d8d8;transform:scaleX(0.920);transform-origin:0 50%;">+15</div><div class="t s" style="left:2935.0px;top:347.5px;font-size:16px;line-height:19px;color:#d8d8d8;transform:scaleX(0.920);transform-origin:0 50%;">+15</div><div class="t s" style="left:440.0px;top:387.5px;font-size:16px;line-height:19px;color:#d8d8d8;transform:scaleX(0.920);transform-origin:0 50%;">+10</div><div class="t s" style="left:2935.0px;top:387.5px;font-size:16px;line-height:19px;color:#d8d8d8;transform:scaleX(0.920);transform-origin:0 50%;">+10</div><div class="t s" style="left:440.0px;top:428.5px;font-size:16px;line-height:19px;color:#d8d8d8;transform:scaleX(0.920);transform-origin:0 50%;">+5</div><div class="t s" style="left:2943.2px;top:428.5px;font-size:16px;line-height:19px;color:#d8d8d8;transform:scaleX(0.920);transform-origin:0 50%;">+5</div><div class="t s" style="left:440.0px;top:469.5px;font-size:16px;line-height:19px;color:#d8d8d8;transform:scaleX(0.920);transform-origin:0 50%;">S9</div><div class="t s" style="left:2942.0px;top:469.5px;font-size:16px;line-height:19px;color:#d8d8d8;transform:scaleX(0.920);transform-origin:0 50%;">S9</div><div class="t s" style="left:440.0px;top:519.5px;font-size:16px;line-height:19px;color:#d8d8d8;transform:scaleX(0.920);transform-origin:0 50%;">S8</div><div class="t s" style="left:2942.0px;top:519.5px;font-size:16px;line-height:19px;color:#d8d8d8;transform:scaleX(0.920);transform-origin:0 50%;">S8</div><div class="t s" style="left:440.0px;top:567.5px;font-size:16px;line-height:19px;color:#d8d8d8;transform:scaleX(0.920);transform-origin:0 50%;">S7</div><div class="t s" style="left:2942.0px;top:567.5px;font-size:16px;line-height:19px;color:#d8d8d8;transform:scaleX(0.920);transform-origin:0 50%;">S7</div><div class="t s" style="left:440.0px;top:616.5px;font-size:16px;line-height:19px;color:#d8d8d8;transform:scaleX(0.920);transform-origin:0 50%;">S6</div><div class="t s" style="left:2942.0px;top:616.5px;font-size:16px;line-height:19px;color:#d8d8d8;transform:scaleX(0.920);transform-origin:0 50%;">S6</div><div class="t s" style="left:440.0px;top:664.5px;font-size:16px;line-height:19px;color:#d8d8d8;transform:scaleX(0.920);transform-origin:0 50%;">S5</div><div class="t s" style="left:2942.0px;top:664.5px;font-size:16px;line-height:19px;color:#d8d8d8;transform:scaleX(0.920);transform-origin:0 50%;">S5</div><div class="t s" style="left:440.0px;top:713.5px;font-size:16px;line-height:19px;color:#d8d8d8;transform:scaleX(0.920);transform-origin:0 50%;">S4</div><div class="t s" style="left:2942.0px;top:713.5px;font-size:16px;line-height:19px;color:#d8d8d8;transform:scaleX(0.920);transform-origin:0 50%;">S4</div><div class="t s" style="left:440.0px;top:761.5px;font-size:16px;line-height:19px;color:#d8d8d8;transform:scaleX(0.920);transform-origin:0 50%;">S3</div><div class="t s" style="left:2942.0px;top:761.5px;font-size:16px;line-height:19px;color:#d8d8d8;transform:scaleX(0.920);transform-origin:0 50%;">S3</div><div class="t s" style="left:440.0px;top:811.5px;font-size:16px;line-height:19px;color:#d8d8d8;transform:scaleX(0.920);transform-origin:0 50%;">S2</div><div class="t s" style="left:2942.0px;top:811.5px;font-size:16px;line-height:19px;color:#d8d8d8;transform:scaleX(0.920);transform-origin:0 50%;">S2</div><div class="t s" style="left:440.0px;top:859.5px;font-size:16px;line-height:19px;color:#d8d8d8;transform:scaleX(0.920);transform-origin:0 50%;">S1</div><div class="t s" style="left:2942.0px;top:859.5px;font-size:16px;line-height:19px;color:#d8d8d8;transform:scaleX(0.920);transform-origin:0 50%;">S1</div><div class="t s" style="left:440.0px;top:909.5px;font-size:16px;line-height:19px;color:#d8d8d8;transform:scaleX(0.920);transform-origin:0 50%;">S0</div><div class="t s" style="left:2942.0px;top:909.5px;font-size:16px;line-height:19px;color:#d8d8d8;transform:scaleX(0.920);transform-origin:0 50%;">S0</div><div class="t s" style="left:440.0px;top:948.5px;font-size:16px;line-height:19px;color:#c8c8f0;transform:scaleX(0.920);transform-origin:0 50%;">-5 dB</div><div class="t s" style="left:2924.8px;top:948.5px;font-size:16px;line-height:19px;color:#c8c8f0;transform:scaleX(0.920);transform-origin:0 50%;">-5 dB</div><div class="t s" style="left:440.0px;top:989.5px;font-size:16px;line-height:19px;color:#c8c8f0;transform:scaleX(0.920);transform-origin:0 50%;">-10 dB</div><div class="t s" style="left:2916.6px;top:989.5px;font-size:16px;line-height:19px;color:#c8c8f0;transform:scaleX(0.920);transform-origin:0 50%;">-10 dB</div><div class="a" style="left:0;top:0;width:2967px;height:1018px;overflow:hidden"><svg class="a" style="left:0px;top:0px" width="2967" height="1020"><path d="M508,542 V999" stroke="#dede90" stroke-width="2"/><path d="M820,542 V999" stroke="#dede90" stroke-width="2"/><path d="M924,734 V999" stroke="#dede90" stroke-width="2"/><path d="M1028,590 V999" stroke="#dede90" stroke-width="2"/><path d="M1236,254 V999" stroke="#dede90" stroke-width="2"/><path d="M1340,494 V999" stroke="#dede90" stroke-width="2"/><path d="M1443,350 V999" stroke="#dede90" stroke-width="2"/><path d="M1547,446 V999" stroke="#dede90" stroke-width="2"/><path d="M1651,494 V999" stroke="#dede90" stroke-width="2"/><path d="M1755,590 V999" stroke="#dede90" stroke-width="2"/><path d="M1963,302 V999" stroke="#dede90" stroke-width="2"/><path d="M2275,494 V999" stroke="#dede90" stroke-width="2"/><path d="M2379,254 V999" stroke="#dede90" stroke-width="2"/><path d="M2482,350 V999" stroke="#dede90" stroke-width="2"/><path d="M2586,446 V999" stroke="#dede90" stroke-width="2"/><path d="M2621,254 V999" stroke="#dede90" stroke-width="2"/><path d="M2690,302 V999" stroke="#dede90" stroke-width="2"/><path d="M2760,398 V999" stroke="#dede90" stroke-width="2"/><path d="M2899,446 V999" stroke="#dede90" stroke-width="2"/></svg><div class="a" style="left:511px;top:531px;width:194.17390625000002px;height:25px;background:rgb(5,5,5);"></div><div class="t s" style="left:515.0px;top:533.5px;font-size:18px;line-height:21px;color:#dede90;transform:scaleX(0.915);transform-origin:0 50%;">6.535 MHz NZL Auckland</div><div class="a" style="left:511px;top:579px;width:181.035078125px;height:25px;background:rgb(6,6,6);"></div><div class="t s" style="left:515.0px;top:581.5px;font-size:18px;line-height:21px;color:#dede90;transform:scaleX(0.915);transform-origin:0 50%;">6.535 MHz THA Hat Yai</div><div class="a" style="left:511px;top:627px;width:1403.9754687500001px;height:25px;background:rgb(6,6,6);"></div><div class="t s" style="left:515.0px;top:629.5px;font-size:18px;line-height:21px;color:#dede90;transform:scaleX(0.915);transform-origin:0 50%;">6.535,000 AFI-1 Abidjan, Bamako, Bangui, Bissau, Bouake, Casablanca, Conakry, Canarias, Dakar, Freetown, Johannesburg, Kano, Niamey, Nouadhibou, Nouakchott, Ouagadougou, Roberts</div><div class="a" style="left:511px;top:675px;width:806.1945312500001px;height:25px;background:rgb(7,7,7);"></div><div class="t s" style="left:515.0px;top:677.5px;font-size:18px;line-height:21px;color:#dede90;transform:scaleX(0.915);transform-origin:0 50%;">6.535,000 SAT-1 Brasilia, Canarias, Cayenne, Dakar, Manaus, Paramaribo, Recife, Rio de Janerio, Sal Island</div><div class="a" style="left:511px;top:723px;width:158.131484375px;height:25px;background:rgb(7,7,7);"></div><div class="t s" style="left:515.0px;top:725.5px;font-size:18px;line-height:21px;color:#dede90;transform:scaleX(0.915);transform-origin:0 50%;">Africa Area 1 (AFI-1)</div><div class="a" style="left:511px;top:771px;width:219.19343750000002px;height:25px;background:rgb(8,8,8);"></div><div class="t s" style="left:515.0px;top:773.5px;font-size:18px;line-height:21px;color:#dede90;transform:scaleX(0.915);transform-origin:0 50%;">South Atlantic routes (SAT-1)</div><div class="a" style="left:823px;top:531px;width:238.72296875px;height:25px;background:rgb(5,5,5);"></div><div class="t s" style="left:827.0px;top:533.5px;font-size:18px;line-height:21px;color:#dede90;transform:scaleX(0.915);transform-origin:0 50%;">6.544 MHz NOR Bodo AirRadio</div><div class="a" style="left:823px;top:579px;width:192.91578125px;height:25px;background:rgb(6,6,6);"></div><div class="t s" style="left:827.0px;top:581.5px;font-size:18px;line-height:21px;color:#dede90;transform:scaleX(0.915);transform-origin:0 50%;">USB NOR Bodo AirRadio</div><div class="a" style="left:927px;top:723px;width:256.436796875px;height:25px;background:rgb(7,7,7);"></div><div class="t s" style="left:931.0px;top:725.5px;font-size:18px;line-height:21px;color:#dede90;transform:scaleX(0.915);transform-origin:0 50%;">6.547 Mhz IRL Shanwick AirRadio</div><div class="a" style="left:927px;top:771px;width:351.4109375px;height:25px;background:rgb(8,8,8);"></div><div class="t s" style="left:931.0px;top:773.5px;font-size:18px;line-height:21px;color:#dede90;transform:scaleX(0.915);transform-origin:0 50%;">6.547,000 LDOC Channel Auth. South America</div><div class="a" style="left:927px;top:819px;width:372.441640625px;height:25px;background:rgb(8,8,8);"></div><div class="t s" style="left:931.0px;top:821.5px;font-size:18px;line-height:21px;color:#dede90;transform:scaleX(0.915);transform-origin:0 50%;">6.547,000 RDARA 10E Regional &amp; Domestic area</div><div class="a" style="left:927px;top:867px;width:273.53585937500003px;height:25px;background:rgb(8,8,8);"></div><div class="t s" style="left:931.0px;top:869.5px;font-size:18px;line-height:21px;color:#dede90;transform:scaleX(0.915);transform-origin:0 50%;">LDOC Channel Auth. South America</div><div class="a" style="left:927px;top:915px;width:287.24656250000004px;height:25px;background:rgb(9,9,9);"></div><div class="t s" style="left:931.0px;top:917.5px;font-size:18px;line-height:21px;color:#dede90;transform:scaleX(0.915);transform-origin:0 50%;">RDARA Region 10E Reg.&amp; Dom. area</div><div class="a" style="left:927px;top:963px;width:213.36031250000002px;height:25px;background:rgb(9,9,9);"></div><div class="t s" style="left:931.0px;top:965.5px;font-size:18px;line-height:21px;color:#a8a8b0;transform:scaleX(0.915);transform-origin:0 50%;">USB IRL Shanwick AirRadio</div><div class="a" style="left:1031px;top:579px;width:278.082265625px;height:25px;background:rgb(6,6,6);"></div><div class="t s" style="left:1035.0px;top:581.5px;font-size:18px;line-height:21px;color:#dede90;transform:scaleX(0.915);transform-origin:0 50%;">RDARA Region 1B Reg.&amp; Dom. area</div><div class="a" style="left:1239px;top:243px;width:1133.7931250000001px;height:25px;background:rgb(1,1,1);"></div><div class="t s" style="left:1243.0px;top:245.5px;font-size:18px;line-height:21px;color:#dede90;transform:scaleX(0.915);transform-origin:0 50%;">6.556,000 SEA-1 Bali, Bangkok, Colombo, Calcutta, Dhaka, Guangzhou, Jakarta, Kathmandu, Kuala Lumpur, Kunming, Madras, Male, Singapore, Yangon</div><div class="a" style="left:1239px;top:291px;width:554.726796875px;height:25px;background:rgb(1,1,1);"></div><div class="t s" style="left:1243.0px;top:293.5px;font-size:18px;line-height:21px;color:#dede90;transform:scaleX(0.915);transform-origin:0 50%;">6.556,000 SEA-3 Bali, Brisbane, Jakarta, Male, Singapore, Ujung Pandang</div><div class="a" style="left:1239px;top:339px;width:181.035078125px;height:25px;background:rgb(2,2,2);"></div><div class="t s" style="left:1243.0px;top:341.5px;font-size:18px;line-height:21px;color:#dede90;transform:scaleX(0.915);transform-origin:0 50%;">Southeast Asia (SEA-1)</div><div class="a" style="left:1239px;top:387px;width:181.035078125px;height:25px;background:rgb(3,3,3);"></div><div class="t s" style="left:1243.0px;top:389.5px;font-size:18px;line-height:21px;color:#dede90;transform:scaleX(0.915);transform-origin:0 50%;">Southeast Asia (SEA-3)</div><div class="a" style="left:1239px;top:435px;width:196.57578125px;height:25px;background:rgb(4,4,4);"></div><div class="t s" style="left:1243.0px;top:437.5px;font-size:18px;line-height:21px;color:#dede90;transform:scaleX(0.915);transform-origin:0 50%;">USB NLD CG Den Helder</div><div class="a" style="left:1343px;top:483px;width:228.901015625px;height:25px;background:rgb(4,4,4);"></div><div class="t s" style="left:1347.0px;top:485.5px;font-size:18px;line-height:21px;color:#dede90;transform:scaleX(0.915);transform-origin:0 50%;">6.559 MHz USA Molokai HWA</div><div class="a" style="left:1343px;top:579px;width:262.498671875px;height:25px;background:rgb(6,6,6);"></div><div class="t s" style="left:1347.0px;top:581.5px;font-size:18px;line-height:21px;color:#dede90;transform:scaleX(0.915);transform-origin:0 50%;">6.559 MHz USA San Francisco CA</div><div class="a" style="left:1446px;top:339px;width:715.83828125px;height:25px;background:rgb(2,2,2);"></div><div class="t s" style="left:1450.0px;top:341.5px;font-size:18px;line-height:21px;color:#dede90;transform:scaleX(0.915);transform-origin:0 50%;">6.562,000 CWP-1/2 Hong Kong, Manila, Naha, Port Moseby, San Francisco, Seoul, Taipei, Tokyo</div><div class="a" style="left:1446px;top:387px;width:238.35125000000002px;height:25px;background:rgb(3,3,3);"></div><div class="t s" style="left:1450.0px;top:389.5px;font-size:18px;line-height:21px;color:#dede90;transform:scaleX(0.915);transform-origin:0 50%;">Central West Pacific (CWP-1/2)</div><div class="a" style="left:1550px;top:435px;width:228.901015625px;height:25px;background:rgb(4,4,4);"></div><div class="t s" style="left:1554.0px;top:437.5px;font-size:18px;line-height:21px;color:#dede90;transform:scaleX(0.915);transform-origin:0 50%;">6.565 MHz USA Molokai HWA</div><div class="a" style="left:1654px;top:483px;width:226.5134375px;height:25px;background:rgb(4,4,4);"></div><div class="t s" style="left:1658.0px;top:485.5px;font-size:18px;line-height:21px;color:#dede90;transform:scaleX(0.915);transform-origin:0 50%;">6.568.000 USB EGY Navy 5C</div><div class="a" style="left:1654px;top:531px;width:225.59843750000002px;height:25px;background:rgb(5,5,5);"></div><div class="t s" style="left:1658.0px;top:533.5px;font-size:18px;line-height:21px;color:#dede90;transform:scaleX(0.915);transform-origin:0 50%;">6.666,000 USB EGY Navy 5A</div><div class="a" style="left:1758px;top:579px;width:181.02078125px;height:25px;background:rgb(6,6,6);"></div><div class="t s" style="left:1762.0px;top:581.5px;font-size:18px;line-height:21px;color:#dede90;transform:scaleX(0.915);transform-origin:0 50%;">East Asia Area 1 (EA-1)</div><div class="a" style="left:1966px;top:291px;width:562.8903125px;height:25px;background:rgb(1,1,1);"></div><div class="t s" style="left:1970.0px;top:293.5px;font-size:18px;line-height:21px;color:#dede90;transform:scaleX(0.915);transform-origin:0 50%;">6.577,000 CAR-A Barranquilla, Boyeros, Merida, New York, Panama, Piarco</div><div class="a" style="left:1966px;top:387px;width:235.077265625px;height:25px;background:rgb(3,3,3);"></div><div class="t s" style="left:1970.0px;top:389.5px;font-size:18px;line-height:21px;color:#dede90;transform:scaleX(0.915);transform-origin:0 50%;">Caribbean Sea routes (CAR-A)</div><div class="a" style="left:1966px;top:435px;width:220.36578125px;height:25px;background:rgb(4,4,4);"></div><div class="t s" style="left:1970.0px;top:437.5px;font-size:18px;line-height:21px;color:#dede90;transform:scaleX(0.915);transform-origin:0 50%;">USB USA New York AirRadio</div><div class="a" style="left:1966px;top:627px;width:266.17296875px;height:25px;background:rgb(6,6,6);"></div><div class="t s" style="left:1970.0px;top:629.5px;font-size:18px;line-height:21px;color:#dede90;transform:scaleX(0.915);transform-origin:0 50%;">6.577 MHz USA New York AirRadio</div><div class="a" style="left:2278px;top:483px;width:266.17296875px;height:25px;background:rgb(4,4,4);"></div><div class="t s" style="left:2282.0px;top:485.5px;font-size:18px;line-height:21px;color:#dede90;transform:scaleX(0.915);transform-origin:0 50%;">6.586 MHz USA New York AirRadio</div><div class="a" style="left:2278px;top:531px;width:758.8861718750001px;height:25px;background:rgb(5,5,5);"></div><div class="t s" style="left:2282.0px;top:533.5px;font-size:18px;line-height:21px;color:#dede90;transform:scaleX(0.915);transform-origin:0 50%;">6.586,000 CAR-B Barranquilla, Boyeros, Cayenne, Georgetown, Maiquetia, New York, Panama, Piarco</div><div class="a" style="left:2278px;top:579px;width:235.077265625px;height:25px;background:rgb(6,6,6);"></div><div class="t s" style="left:2282.0px;top:581.5px;font-size:18px;line-height:21px;color:#dede90;transform:scaleX(0.915);transform-origin:0 50%;">Caribbean Sea routes (CAR-B)</div><div class="a" style="left:2278px;top:627px;width:220.36578125px;height:25px;background:rgb(6,6,6);"></div><div class="t s" style="left:2282.0px;top:629.5px;font-size:18px;line-height:21px;color:#dede90;transform:scaleX(0.915);transform-origin:0 50%;">USB USA New York AirRadio</div><div class="a" style="left:2382px;top:243px;width:186.525078125px;height:25px;background:rgb(1,1,1);"></div><div class="t s" style="left:2386.0px;top:245.5px;font-size:18px;line-height:21px;color:#dede90;transform:scaleX(0.915);transform-origin:0 50%;">6.589 MHz PNR Albrook</div><div class="a" style="left:2485px;top:339px;width:648.9289062500001px;height:25px;background:rgb(2,2,2);"></div><div class="t s" style="left:2489.0px;top:341.5px;font-size:18px;line-height:21px;color:#dede90;transform:scaleX(0.915);transform-origin:0 50%;">6.592,000 NCA-2 Barnaul, Irkutsk, Khanty-Mansiysk, Kirensk, Kolpashevo, Krasnoyarsk</div><div class="a" style="left:2485px;top:387px;width:206.65507812500002px;height:25px;background:rgb(3,3,3);"></div><div class="t s" style="left:2489.0px;top:389.5px;font-size:18px;line-height:21px;color:#dede90;transform:scaleX(0.915);transform-origin:0 50%;">North Central Asia (NCA-2)</div><div class="a" style="left:2589px;top:435px;width:259.1675px;height:25px;background:rgb(4,4,4);"></div><div class="t s" style="left:2593.0px;top:437.5px;font-size:18px;line-height:21px;color:#dede90;transform:scaleX(0.915);transform-origin:0 50%;">6.595 MHz IRL Shanwick AirRadio</div><div class="a" style="left:2589px;top:483px;width:363.27734375px;height:25px;background:rgb(4,4,4);"></div><div class="t s" style="left:2593.0px;top:485.5px;font-size:18px;line-height:21px;color:#dede90;transform:scaleX(0.915);transform-origin:0 50%;">6.595,000 RDARA 1B Regional &amp; Domestic area</div><div class="a" style="left:2589px;top:579px;width:278.082265625px;height:25px;background:rgb(6,6,6);"></div><div class="t s" style="left:2593.0px;top:581.5px;font-size:18px;line-height:21px;color:#dede90;transform:scaleX(0.915);transform-origin:0 50%;">RDARA Region 1B Reg.&amp; Dom. area</div><div class="a" style="left:2589px;top:627px;width:213.36031250000002px;height:25px;background:rgb(6,6,6);"></div><div class="t s" style="left:2593.0px;top:629.5px;font-size:18px;line-height:21px;color:#dede90;transform:scaleX(0.915);transform-origin:0 50%;">USB IRL Shanwick AirRadio</div><div class="a" style="left:2624px;top:243px;width:223.139375px;height:25px;background:rgb(1,1,1);"></div><div class="t s" style="left:2628.0px;top:245.5px;font-size:18px;line-height:21px;color:#dede90;transform:scaleX(0.915);transform-origin:0 50%;">6.596 MHz RUS Krasnoyarsk</div><div class="a" style="left:2693px;top:291px;width:467.64453125px;height:25px;background:rgb(1,1,1);"></div><div class="t s" style="left:2697.0px;top:293.5px;font-size:18px;line-height:21px;color:#dede90;transform:scaleX(0.915);transform-origin:0 50%;">6.598,000 EUR-A Arkhangelsk, Beirut, Cairo, Istanbul, Moscow</div><div class="a" style="left:2693px;top:675px;width:180.10578125px;height:25px;background:rgb(7,7,7);"></div><div class="t s" style="left:2697.0px;top:677.5px;font-size:18px;line-height:21px;color:#dede90;transform:scaleX(0.915);transform-origin:0 50%;">Europe Area A (EUR-A)</div><div class="a" style="left:2763px;top:387px;width:219.46507812500002px;height:25px;background:rgb(3,3,3);"></div><div class="t s" style="left:2767.0px;top:389.5px;font-size:18px;line-height:21px;color:#dede90;transform:scaleX(0.915);transform-origin:0 50%;">AM KRE V.Of The People (s)</div><div class="a" style="left:2902px;top:435px;width:120.645078125px;height:25px;background:rgb(4,4,4);"></div><div class="t s" style="left:2906.0px;top:437.5px;font-size:18px;line-height:21px;color:#dede90;transform:scaleX(0.915);transform-origin:0 50%;">6.604,000 EUR</div><div class="a" style="left:2902px;top:579px;width:120.645078125px;height:25px;background:rgb(6,6,6);"></div><div class="t s" style="left:2906.0px;top:581.5px;font-size:18px;line-height:21px;color:#dede90;transform:scaleX(0.915);transform-origin:0 50%;">6.604,000 EUR</div></div><div class="a" style="left:520px;top:212px;width:532px;height:80px;background:#000;"></div><div class="a" style="left:520px;top:292px;width:445px;height:184px;background:#000;"></div><div class="t s" style="left:526.7px;top:210.5px;font-size:68px;line-height:81px;color:#fff;">6</div><div class="t s" style="left:575.4px;top:210.5px;font-size:68px;line-height:81px;color:#fff;">.</div><div class="t s" style="left:605.1px;top:210.5px;font-size:68px;line-height:81px;color:#fff;">5</div><div class="t s" style="left:644.3px;top:210.5px;font-size:68px;line-height:81px;color:#fff;">6</div><div class="t s" style="left:683.5px;top:210.5px;font-size:68px;line-height:81px;color:#fff;">8</div><div class="t s" style="left:732.2px;top:210.5px;font-size:68px;line-height:81px;color:#fff;">.</div><div class="t s" style="left:761.9px;top:210.5px;font-size:68px;line-height:81px;color:#fff;">0</div><div class="t s" style="left:801.1px;top:210.5px;font-size:68px;line-height:81px;color:#fff;">0</div><div class="t s" style="left:840.3px;top:210.5px;font-size:68px;line-height:81px;color:#fff;">0</div><div class="t m" style="left:905.0px;top:225.5px;font-size:18px;line-height:21px;color:#e8d440;font-weight:bold;transform:scaleX(1.065);transform-origin:0 50%;">RX 1</div><div class="t m" style="left:975.0px;top:225.5px;font-size:18px;line-height:21px;color:#fff;font-weight:bold;transform:scaleX(1.081);transform-origin:0 50%;">USB</div><div class="t m" style="left:905.0px;top:257.5px;font-size:18px;line-height:21px;color:#e8d440;font-weight:bold;transform:scaleX(0.912);transform-origin:0 50%;">100 - 2700 Hz</div><div class="a" style="left:526px;top:300px;width:433px;height:172px;background:#000;border:1px solid #2a2a2a;box-sizing:border-box;"></div><div class="t s" style="left:538.0px;top:304.0px;font-size:20px;line-height:24px;color:#f0f0f0;transform:scaleX(0.947);transform-origin:0 50%;">SNR</div><svg class="a" style="left:0px;top:0px" width="1000" height="480"><path d="M567.5,384.5 A525,525 0 0 1 914.5,384.5" stroke="#f4f4f4" stroke-width="5" fill="none"/><path d="M567.5,384.5 L561.5,367.5" stroke="#e8e8e8" stroke-width="3"/><path d="M591.5,376.7 L589.0,368.1" stroke="#e8e8e8" stroke-width="2"/><path d="M615.9,370.1 L611.6,352.6" stroke="#e8e8e8" stroke-width="3"/><path d="M640.6,364.7 L638.8,355.9" stroke="#e8e8e8" stroke-width="2"/><path d="M665.5,360.5 L662.9,342.6" stroke="#e8e8e8" stroke-width="3"/><path d="M690.6,357.4 L689.7,348.5" stroke="#e8e8e8" stroke-width="2"/><path d="M715.7,355.6 L714.9,337.6" stroke="#e8e8e8" stroke-width="3"/><path d="M741.0,355.0 L741.0,346.0" stroke="#e8e8e8" stroke-width="2"/><path d="M766.3,355.6 L767.1,337.6" stroke="#e8e8e8" stroke-width="3"/><path d="M791.4,357.4 L792.3,348.5" stroke="#e8e8e8" stroke-width="2"/><path d="M816.5,360.5 L819.1,342.6" stroke="#e8e8e8" stroke-width="3"/><path d="M841.4,364.7 L843.2,355.9" stroke="#e8e8e8" stroke-width="2"/><path d="M866.1,370.1 L870.4,352.6" stroke="#e8e8e8" stroke-width="3"/><path d="M890.5,376.7 L893.0,368.1" stroke="#e8e8e8" stroke-width="2"/><path d="M914.5,384.5 L920.5,367.5" stroke="#e8e8e8" stroke-width="3"/><text x="561.8" y="362.5" font-size="19" font-style="italic" font-family="Liberation Sans" fill="#b8b8b8" text-anchor="middle">0</text><text x="612.3" y="347.0" font-size="19" font-style="italic" font-family="Liberation Sans" fill="#b8b8b8" text-anchor="middle">20</text><text x="663.0" y="337.0" font-size="19" font-style="italic" font-family="Liberation Sans" fill="#b8b8b8" text-anchor="middle">40</text><text x="716.0" y="332.0" font-size="19" font-style="italic" font-family="Liberation Sans" fill="#b8b8b8" text-anchor="middle">60</text><text x="768.5" y="332.0" font-size="19" font-style="italic" font-family="Liberation Sans" fill="#b8b8b8" text-anchor="middle">80</text><text x="821.8" y="337.0" font-size="19" font-style="italic" font-family="Liberation Sans" fill="#b8b8b8" text-anchor="middle">100</text><text x="872.7" y="347.0" font-size="19" font-style="italic" font-family="Liberation Sans" fill="#b8b8b8" text-anchor="middle">120</text><text x="924.0" y="362.5" font-size="19" font-style="italic" font-family="Liberation Sans" fill="#b8b8b8" text-anchor="middle">140</text><path d="M590,343 L628,474" stroke="#e01818" stroke-width="3"/></svg><div class="a" style="left:697px;top:419px;width:90px;height:31px;background:radial-gradient(ellipse at 50% 40%,#e4f060,#b4d030);border-radius:5px;"></div><div class="t s" style="left:717.0px;top:421.0px;font-size:24px;line-height:28px;color:#111;font-weight:bold;transform:scaleX(1.071);transform-origin:0 50%;">13.1</div><svg class="a" style="left:0px;top:0px" width="2967" height="1020">
<defs><linearGradient id="sf" x1="0" y1="880" x2="0" y2="1018" gradientUnits="userSpaceOnUse"><stop offset="0" stop-color="#1818b8"/><stop offset="0.45" stop-color="#10108e"/><stop offset="1" stop-color="#0e0e58"/></linearGradient></defs>
<path d="M433,1018 L433,948.2 L435,960.0 L437,950.9 L439,955.9 L441,956.9 L443,947.6 L445,948.6 L447,942.6 L449,952.1 L451,966.9 L453,949.8 L455,958.3 L457,951.1 L459,937.4 L461,948.0 L463,953.5 L465,949.5 L467,958.0 L469,941.4 L471,953.1 L473,937.6 L475,942.9 L477,955.0 L479,966.8 L481,954.2 L483,949.3 L485,956.7 L487,930.8 L489,964.2 L491,948.2 L493,932.0 L495,949.9 L497,928.1 L499,948.3 L501,940.8 L503,952.1 L505,955.2 L507,947.7 L509,946.2 L511,942.2 L513,931.7 L515,931.1 L517,945.2 L519,963.6 L521,949.9 L523,947.8 L525,941.1 L527,940.7 L529,936.7 L531,950.0 L533,943.0 L535,944.8 L537,942.8 L539,954.9 L541,948.2 L543,947.6 L545,934.2 L547,937.1 L549,937.5 L551,928.6 L553,947.0 L555,942.0 L557,938.6 L559,951.0 L561,924.7 L563,937.9 L565,944.5 L567,944.8 L569,946.5 L571,938.6 L573,945.6 L575,949.1 L577,932.1 L579,947.1 L581,941.1 L583,946.2 L585,935.8 L587,939.6 L589,931.6 L591,920.9 L593,925.3 L595,926.9 L597,932.1 L599,952.7 L601,957.9 L603,941.7 L605,938.4 L607,937.8 L609,948.4 L611,942.6 L613,932.5 L615,930.6 L617,940.9 L619,934.8 L621,936.7 L623,929.7 L625,925.3 L627,933.7 L629,936.3 L631,946.0 L633,931.9 L635,943.9 L637,928.6 L639,932.7 L641,934.5 L643,940.4 L645,942.1 L647,932.5 L649,935.4 L651,935.9 L653,932.8 L655,934.3 L657,937.6 L659,937.2 L661,938.4 L663,958.3 L665,944.9 L667,934.5 L669,922.6 L671,924.1 L673,943.8 L675,927.9 L677,935.2 L679,935.2 L681,926.7 L683,930.2 L685,938.8 L687,917.6 L689,930.9 L691,926.7 L693,923.3 L695,916.8 L697,927.3 L699,921.8 L701,921.2 L703,932.8 L705,916.5 L707,921.6 L709,924.3 L711,939.0 L713,944.4 L715,938.7 L717,937.4 L719,914.6 L721,939.5 L723,930.3 L725,919.0 L727,923.8 L729,914.3 L731,916.6 L733,932.5 L735,936.3 L737,930.6 L739,925.3 L741,924.2 L743,911.6 L745,927.4 L747,919.6 L749,927.5 L751,922.4 L753,928.2 L755,922.8 L757,928.1 L759,937.3 L761,944.8 L763,937.0 L765,941.1 L767,933.9 L769,925.1 L771,937.7 L773,929.6 L775,936.1 L777,948.7 L779,948.6 L781,947.7 L783,952.6 L785,941.8 L787,918.3 L789,929.8 L791,929.2 L793,931.4 L795,945.4 L797,937.4 L799,937.3 L801,952.1 L803,935.9 L805,923.2 L807,932.3 L809,931.1 L811,929.6 L813,936.9 L815,917.1 L817,939.0 L819,938.1 L821,932.4 L823,946.1 L825,930.4 L827,926.8 L829,940.7 L831,924.8 L833,926.8 L835,923.4 L837,936.9 L839,922.9 L841,937.9 L843,940.0 L845,943.7 L847,939.9 L849,949.7 L851,931.7 L853,923.5 L855,924.2 L857,947.3 L859,928.3 L861,943.5 L863,949.5 L865,927.9 L867,943.5 L869,929.3 L871,935.2 L873,918.0 L875,943.9 L877,932.9 L879,930.3 L881,923.9 L883,917.6 L885,920.9 L887,928.1 L889,932.4 L891,943.6 L893,938.0 L895,919.1 L897,925.7 L899,936.1 L901,943.4 L903,957.5 L905,951.9 L907,936.6 L909,946.1 L911,935.8 L913,939.0 L915,937.5 L917,940.6 L919,936.9 L921,941.4 L923,948.1 L925,941.4 L927,931.1 L929,946.8 L931,933.3 L933,940.6 L935,949.5 L937,965.7 L939,944.4 L941,931.0 L943,942.7 L945,942.1 L947,939.4 L949,939.7 L951,934.5 L953,930.6 L955,906.3 L957,936.9 L959,924.9 L961,933.6 L963,928.0 L965,945.5 L967,937.2 L969,932.9 L971,950.4 L973,943.1 L975,936.5 L977,934.0 L979,920.3 L981,916.6 L983,928.8 L985,941.2 L987,925.9 L989,945.6 L991,944.0 L993,940.0 L995,940.9 L997,942.6 L999,927.8 L1001,935.8 L1003,928.9 L1005,942.8 L1007,937.7 L1009,939.0 L1011,936.4 L1013,926.6 L1015,932.6 L1017,931.6 L1019,908.6 L1021,933.6 L1023,923.2 L1025,941.0 L1027,938.5 L1029,930.4 L1031,922.0 L1033,916.2 L1035,932.6 L1037,931.1 L1039,938.3 L1041,939.2 L1043,941.6 L1045,937.1 L1047,927.7 L1049,931.1 L1051,952.5 L1053,919.7 L1055,931.3 L1057,943.0 L1059,926.5 L1061,928.2 L1063,938.0 L1065,918.0 L1067,942.2 L1069,939.0 L1071,936.6 L1073,952.4 L1075,933.0 L1077,935.6 L1079,943.2 L1081,929.6 L1083,937.5 L1085,942.3 L1087,929.5 L1089,934.3 L1091,946.8 L1093,924.3 L1095,943.1 L1097,936.2 L1099,941.5 L1101,935.6 L1103,944.1 L1105,943.6 L1107,922.6 L1109,938.1 L1111,944.3 L1113,929.5 L1115,929.9 L1117,931.4 L1119,931.0 L1121,934.7 L1123,929.9 L1125,928.3 L1127,926.6 L1129,918.5 L1131,933.8 L1133,928.0 L1135,928.3 L1137,927.4 L1139,935.8 L1141,928.8 L1143,920.7 L1145,928.0 L1147,932.5 L1149,926.3 L1151,923.7 L1153,928.0 L1155,925.0 L1157,922.3 L1159,936.6 L1161,944.1 L1163,926.1 L1165,927.5 L1167,908.8 L1169,925.9 L1171,922.6 L1173,939.9 L1175,932.5 L1177,940.6 L1179,930.7 L1181,916.5 L1183,929.1 L1185,915.4 L1187,914.9 L1189,931.3 L1191,922.0 L1193,909.5 L1195,919.6 L1197,927.0 L1199,925.6 L1201,933.3 L1203,916.0 L1205,936.6 L1207,934.7 L1209,920.8 L1211,927.2 L1213,921.8 L1215,928.8 L1217,935.8 L1219,926.1 L1221,925.8 L1223,934.3 L1225,929.6 L1227,922.3 L1229,935.8 L1231,922.5 L1233,916.0 L1235,911.8 L1237,905.6 L1239,907.8 L1241,916.6 L1243,914.2 L1245,939.1 L1247,920.4 L1249,912.1 L1251,913.4 L1253,920.9 L1255,924.4 L1257,926.8 L1259,928.7 L1261,921.4 L1263,922.4 L1265,924.8 L1267,919.5 L1269,917.6 L1271,906.9 L1273,924.0 L1275,924.5 L1277,918.1 L1279,922.9 L1281,918.3 L1283,917.4 L1285,917.9 L1287,924.9 L1289,929.3 L1291,932.5 L1293,943.0 L1295,932.6 L1297,928.0 L1299,944.0 L1301,929.6 L1303,926.9 L1305,922.1 L1307,919.3 L1309,919.2 L1311,926.5 L1313,918.7 L1315,905.0 L1317,916.2 L1319,907.3 L1321,938.1 L1323,937.1 L1325,929.6 L1327,932.9 L1329,924.7 L1331,949.5 L1333,946.6 L1335,922.8 L1337,937.7 L1339,941.4 L1341,934.9 L1343,930.4 L1345,930.0 L1347,931.5 L1349,926.2 L1351,926.6 L1353,937.8 L1355,926.8 L1357,927.1 L1359,939.7 L1361,941.4 L1363,929.8 L1365,931.1 L1367,932.9 L1369,921.3 L1371,940.5 L1373,948.9 L1375,926.3 L1377,946.6 L1379,939.1 L1381,952.3 L1383,948.3 L1385,937.7 L1387,929.0 L1389,944.7 L1391,925.4 L1393,941.6 L1395,942.1 L1397,937.4 L1399,934.4 L1401,949.5 L1403,931.9 L1405,935.7 L1407,937.7 L1409,932.8 L1411,940.2 L1413,936.8 L1415,924.8 L1417,937.0 L1419,922.6 L1421,932.0 L1423,924.2 L1425,934.0 L1427,928.5 L1429,937.0 L1431,940.2 L1433,936.3 L1435,928.4 L1437,943.9 L1439,933.6 L1441,940.2 L1443,947.3 L1445,941.8 L1447,947.1 L1449,943.5 L1451,934.6 L1453,947.7 L1455,921.3 L1457,934.1 L1459,942.1 L1461,931.7 L1463,928.7 L1465,938.1 L1467,932.1 L1469,942.0 L1471,934.8 L1473,945.0 L1475,958.8 L1477,932.2 L1479,939.4 L1481,946.1 L1483,932.8 L1485,936.2 L1487,930.9 L1489,928.9 L1491,930.7 L1493,935.6 L1495,943.9 L1497,938.9 L1499,947.1 L1501,939.3 L1503,948.1 L1505,938.9 L1507,950.2 L1509,950.1 L1511,935.6 L1513,957.0 L1515,953.5 L1517,958.6 L1519,942.1 L1521,945.3 L1523,937.3 L1525,944.0 L1527,940.0 L1529,939.5 L1531,941.3 L1533,942.7 L1535,947.6 L1537,939.4 L1539,946.2 L1541,934.1 L1543,937.7 L1545,938.5 L1547,942.7 L1549,954.2 L1551,924.6 L1553,937.2 L1555,954.4 L1557,943.4 L1559,941.6 L1561,937.0 L1563,943.8 L1565,950.9 L1567,961.4 L1569,941.2 L1571,948.7 L1573,955.6 L1575,943.7 L1577,948.5 L1579,942.4 L1581,939.8 L1583,954.9 L1585,952.5 L1587,961.8 L1589,953.3 L1591,948.1 L1593,945.3 L1595,949.5 L1597,956.8 L1599,945.7 L1601,955.3 L1603,944.9 L1605,942.4 L1607,930.8 L1609,940.6 L1611,953.9 L1613,946.6 L1615,940.8 L1617,948.0 L1619,955.4 L1621,935.2 L1623,964.3 L1625,960.6 L1627,945.5 L1629,944.9 L1631,976.8 L1633,965.0 L1635,964.1 L1637,962.1 L1639,950.8 L1641,938.7 L1643,945.3 L1645,951.6 L1647,965.2 L1649,962.0 L1651,957.1 L1653,954.4 L1655,961.5 L1657,958.6 L1659,950.7 L1661,941.7 L1663,949.3 L1665,953.5 L1667,941.8 L1669,940.3 L1671,939.7 L1673,934.7 L1675,932.7 L1677,952.6 L1679,944.4 L1681,943.5 L1683,942.2 L1685,942.3 L1687,946.2 L1689,941.7 L1691,944.4 L1693,942.5 L1695,952.5 L1697,957.4 L1699,938.2 L1701,941.7 L1703,940.4 L1705,936.9 L1707,938.1 L1709,935.7 L1711,938.1 L1713,934.5 L1715,941.8 L1717,956.3 L1719,959.7 L1721,936.6 L1723,950.5 L1725,945.5 L1727,945.1 L1729,944.1 L1731,952.6 L1733,947.4 L1735,945.0 L1737,937.4 L1739,961.6 L1741,953.9 L1743,935.6 L1745,926.5 L1747,938.4 L1749,934.7 L1751,947.9 L1753,945.1 L1755,942.4 L1757,953.9 L1759,944.7 L1761,951.1 L1763,928.9 L1765,931.6 L1767,931.3 L1769,937.5 L1771,942.9 L1773,939.5 L1775,956.6 L1777,939.6 L1779,944.3 L1781,939.2 L1783,931.6 L1785,936.0 L1787,940.9 L1789,944.6 L1791,952.1 L1793,943.2 L1795,939.8 L1797,949.7 L1799,960.5 L1801,939.4 L1803,932.9 L1805,936.0 L1807,939.2 L1809,945.7 L1811,942.5 L1813,929.9 L1815,938.1 L1817,944.1 L1819,927.1 L1821,942.2 L1823,949.8 L1825,947.1 L1827,938.7 L1829,947.4 L1831,924.2 L1833,944.8 L1835,942.3 L1837,934.8 L1839,922.3 L1841,931.5 L1843,936.2 L1845,945.4 L1847,931.3 L1849,951.3 L1851,930.7 L1853,944.5 L1855,939.8 L1857,945.3 L1859,947.6 L1861,945.8 L1863,941.6 L1865,947.1 L1867,949.8 L1869,939.0 L1871,934.3 L1873,946.4 L1875,938.3 L1877,930.4 L1879,935.6 L1881,938.9 L1883,945.6 L1885,939.3 L1887,950.0 L1889,941.9 L1891,956.4 L1893,951.8 L1895,945.7 L1897,939.4 L1899,932.7 L1901,944.2 L1903,941.4 L1905,942.8 L1907,939.0 L1909,936.4 L1911,950.0 L1913,949.1 L1915,946.0 L1917,935.7 L1919,936.5 L1921,945.0 L1923,928.8 L1925,940.0 L1927,937.7 L1929,933.4 L1931,932.4 L1933,923.5 L1935,959.3 L1937,943.7 L1939,930.6 L1941,939.2 L1943,931.6 L1945,929.1 L1947,957.6 L1949,943.8 L1951,938.7 L1953,931.4 L1955,927.3 L1957,928.9 L1959,938.4 L1961,932.5 L1963,934.8 L1965,935.1 L1967,931.6 L1969,937.6 L1971,952.8 L1973,938.5 L1975,944.5 L1977,921.5 L1979,932.4 L1981,934.7 L1983,947.0 L1985,935.7 L1987,939.0 L1989,941.0 L1991,938.8 L1993,929.5 L1995,925.1 L1997,933.9 L1999,934.8 L2001,944.6 L2003,944.2 L2005,934.4 L2007,937.6 L2009,927.9 L2011,929.7 L2013,934.5 L2015,941.4 L2017,947.0 L2019,937.4 L2021,929.0 L2023,943.9 L2025,949.4 L2027,936.9 L2029,957.1 L2031,936.3 L2033,918.3 L2035,929.6 L2037,946.6 L2039,941.8 L2041,941.6 L2043,936.6 L2045,936.1 L2047,940.3 L2049,947.5 L2051,936.1 L2053,940.3 L2055,968.6 L2057,960.0 L2059,972.1 L2061,940.9 L2063,938.2 L2065,948.5 L2067,926.3 L2069,933.8 L2071,938.6 L2073,946.7 L2075,938.2 L2077,944.1 L2079,950.1 L2081,953.0 L2083,933.0 L2085,940.4 L2087,934.8 L2089,928.1 L2091,955.9 L2093,941.2 L2095,950.5 L2097,942.8 L2099,937.8 L2101,948.4 L2103,949.2 L2105,946.2 L2107,938.5 L2109,951.9 L2111,944.4 L2113,945.9 L2115,943.2 L2117,945.8 L2119,941.2 L2121,949.4 L2123,944.3 L2125,938.0 L2127,948.8 L2129,948.9 L2131,934.3 L2133,927.3 L2135,944.7 L2137,923.8 L2139,947.7 L2141,938.8 L2143,956.8 L2145,967.8 L2147,952.1 L2149,951.3 L2151,939.7 L2153,937.9 L2155,937.4 L2157,928.6 L2159,940.6 L2161,935.5 L2163,927.5 L2165,859.0 L2167,859.0 L2169,941.8 L2171,946.4 L2173,953.6 L2175,965.1 L2177,941.9 L2179,961.2 L2181,939.0 L2183,951.8 L2185,943.4 L2187,944.3 L2189,941.2 L2191,928.0 L2193,935.6 L2195,945.8 L2197,959.7 L2199,929.5 L2201,935.8 L2203,927.5 L2205,926.6 L2207,925.7 L2209,950.1 L2211,943.8 L2213,949.2 L2215,950.0 L2217,932.9 L2219,954.6 L2221,943.3 L2223,947.8 L2225,933.9 L2227,945.5 L2229,941.9 L2231,967.9 L2233,969.2 L2235,941.3 L2237,943.7 L2239,949.3 L2241,936.5 L2243,940.0 L2245,926.2 L2247,939.2 L2249,932.9 L2251,948.7 L2253,923.1 L2255,935.2 L2257,947.4 L2259,937.7 L2261,940.0 L2263,939.2 L2265,946.2 L2267,930.0 L2269,924.6 L2271,942.5 L2273,955.1 L2275,931.1 L2277,945.9 L2279,939.2 L2281,943.7 L2283,951.5 L2285,928.9 L2287,945.8 L2289,944.9 L2291,939.3 L2293,943.1 L2295,934.8 L2297,941.2 L2299,927.5 L2301,921.5 L2303,937.1 L2305,936.3 L2307,944.1 L2309,925.8 L2311,928.5 L2313,934.9 L2315,943.9 L2317,959.5 L2319,941.8 L2321,939.2 L2323,926.4 L2325,933.4 L2327,938.9 L2329,959.2 L2331,933.7 L2333,939.1 L2335,934.7 L2337,937.4 L2339,938.6 L2341,947.0 L2343,930.4 L2345,940.8 L2347,936.3 L2349,938.0 L2351,924.0 L2353,954.6 L2355,941.8 L2357,933.5 L2359,929.2 L2361,941.0 L2363,944.4 L2365,949.0 L2367,924.8 L2369,925.8 L2371,946.0 L2373,923.1 L2375,927.0 L2377,933.5 L2379,936.5 L2381,942.9 L2383,936.2 L2385,919.5 L2387,906.8 L2389,928.3 L2391,930.8 L2393,921.0 L2395,938.8 L2397,929.9 L2399,945.2 L2401,936.9 L2403,919.6 L2405,931.6 L2407,936.9 L2409,938.4 L2411,935.9 L2413,929.1 L2415,928.8 L2417,929.6 L2419,922.0 L2421,940.7 L2423,925.2 L2425,919.2 L2427,922.5 L2429,905.9 L2431,903.3 L2433,913.1 L2435,907.1 L2437,932.6 L2439,913.0 L2441,908.7 L2443,917.2 L2445,932.0 L2447,921.0 L2449,927.6 L2451,937.7 L2453,933.0 L2455,929.5 L2457,925.7 L2459,921.6 L2461,934.2 L2463,934.6 L2465,938.5 L2467,931.4 L2469,914.0 L2471,931.9 L2473,940.2 L2475,940.7 L2477,928.3 L2479,929.2 L2481,921.3 L2483,945.9 L2485,927.8 L2487,922.7 L2489,921.2 L2491,926.7 L2493,936.0 L2495,943.9 L2497,934.5 L2499,927.8 L2501,931.7 L2503,927.4 L2505,930.7 L2507,921.9 L2509,916.5 L2511,923.9 L2513,930.9 L2515,904.6 L2517,905.4 L2519,917.7 L2521,920.1 L2523,908.1 L2525,918.3 L2527,915.1 L2529,922.8 L2531,907.7 L2533,930.5 L2535,924.4 L2537,919.9 L2539,946.8 L2541,932.3 L2543,931.3 L2545,919.1 L2547,923.5 L2549,915.8 L2551,929.1 L2553,926.9 L2555,920.5 L2557,931.7 L2559,928.2 L2561,927.0 L2563,934.1 L2565,938.2 L2567,938.3 L2569,935.9 L2571,934.9 L2573,930.3 L2575,916.1 L2577,921.7 L2579,912.2 L2581,920.6 L2583,928.2 L2585,909.1 L2587,924.7 L2589,914.0 L2591,919.5 L2593,920.5 L2595,916.0 L2597,909.9 L2599,923.2 L2601,927.5 L2603,926.3 L2605,922.6 L2607,927.5 L2609,921.9 L2611,929.0 L2613,919.3 L2615,930.9 L2617,930.3 L2619,930.9 L2621,928.1 L2623,925.3 L2625,926.1 L2627,920.8 L2629,907.8 L2631,924.8 L2633,923.2 L2635,919.6 L2637,920.5 L2639,942.7 L2641,929.5 L2643,937.0 L2645,939.0 L2647,918.8 L2649,946.9 L2651,942.3 L2653,934.5 L2655,946.4 L2657,943.7 L2659,941.4 L2661,938.0 L2663,933.5 L2665,936.8 L2667,933.5 L2669,929.8 L2671,944.9 L2673,932.0 L2675,926.8 L2677,912.4 L2679,924.6 L2681,938.4 L2683,928.9 L2685,925.2 L2687,928.9 L2689,939.4 L2691,943.5 L2693,928.1 L2695,925.3 L2697,924.9 L2699,929.2 L2701,938.6 L2703,932.9 L2705,932.8 L2707,949.9 L2709,938.6 L2711,950.5 L2713,929.6 L2715,927.2 L2717,930.1 L2719,927.1 L2721,927.8 L2723,919.9 L2725,926.6 L2727,932.8 L2729,932.1 L2731,926.5 L2733,945.3 L2735,941.0 L2737,939.7 L2739,940.1 L2741,928.1 L2743,932.3 L2745,935.1 L2747,931.8 L2749,878.0 L2751,878.0 L2753,943.7 L2755,939.6 L2757,937.9 L2759,943.0 L2761,938.8 L2763,923.7 L2765,932.6 L2767,927.1 L2769,941.0 L2771,937.5 L2773,941.8 L2775,921.0 L2777,946.7 L2779,941.5 L2781,917.4 L2783,928.1 L2785,937.5 L2787,928.4 L2789,935.9 L2791,934.5 L2793,936.6 L2795,946.8 L2797,939.8 L2799,942.6 L2801,958.9 L2803,946.4 L2805,957.6 L2807,950.4 L2809,939.3 L2811,935.7 L2813,922.9 L2815,931.2 L2817,928.2 L2819,924.4 L2821,938.1 L2823,942.7 L2825,940.1 L2827,949.6 L2829,945.9 L2831,933.7 L2833,930.3 L2835,931.3 L2837,939.4 L2839,948.0 L2841,940.4 L2843,947.4 L2845,953.2 L2847,954.0 L2849,957.4 L2851,952.0 L2853,955.8 L2855,955.7 L2857,946.2 L2859,942.3 L2861,943.3 L2863,951.0 L2865,962.7 L2867,948.6 L2869,936.0 L2871,954.4 L2873,954.9 L2875,954.9 L2877,946.0 L2879,956.6 L2881,941.8 L2883,941.1 L2885,948.7 L2887,933.4 L2889,914.7 L2891,951.2 L2893,957.0 L2895,944.7 L2897,936.7 L2899,934.9 L2901,953.5 L2903,938.3 L2905,949.1 L2907,947.0 L2909,926.5 L2911,923.3 L2913,934.8 L2915,941.4 L2917,944.1 L2919,939.3 L2921,950.9 L2923,947.3 L2925,935.7 L2927,953.2 L2929,926.5 L2931,931.9 L2933,924.7 L2935,933.6 L2937,946.7 L2939,938.3 L2941,941.1 L2943,946.7 L2945,924.5 L2947,945.7 L2949,940.3 L2951,939.4 L2953,937.2 L2955,927.1 L2957,925.9 L2959,943.1 L2961,940.9 L2963,935.6 L2965,933.8 L2967,950.1 L2967,1018 Z" fill="url(#sf)" opacity="0.8"/>
<path d="M433,948.2 L435,960.0 L437,950.9 L439,955.9 L441,956.9 L443,947.6 L445,948.6 L447,942.6 L449,952.1 L451,966.9 L453,949.8 L455,958.3 L457,951.1 L459,937.4 L461,948.0 L463,953.5 L465,949.5 L467,958.0 L469,941.4 L471,953.1 L473,937.6 L475,942.9 L477,955.0 L479,966.8 L481,954.2 L483,949.3 L485,956.7 L487,930.8 L489,964.2 L491,948.2 L493,932.0 L495,949.9 L497,928.1 L499,948.3 L501,940.8 L503,952.1 L505,955.2 L507,947.7 L509,946.2 L511,942.2 L513,931.7 L515,931.1 L517,945.2 L519,963.6 L521,949.9 L523,947.8 L525,941.1 L527,940.7 L529,936.7 L531,950.0 L533,943.0 L535,944.8 L537,942.8 L539,954.9 L541,948.2 L543,947.6 L545,934.2 L547,937.1 L549,937.5 L551,928.6 L553,947.0 L555,942.0 L557,938.6 L559,951.0 L561,924.7 L563,937.9 L565,944.5 L567,944.8 L569,946.5 L571,938.6 L573,945.6 L575,949.1 L577,932.1 L579,947.1 L581,941.1 L583,946.2 L585,935.8 L587,939.6 L589,931.6 L591,920.9 L593,925.3 L595,926.9 L597,932.1 L599,952.7 L601,957.9 L603,941.7 L605,938.4 L607,937.8 L609,948.4 L611,942.6 L613,932.5 L615,930.6 L617,940.9 L619,934.8 L621,936.7 L623,929.7 L625,925.3 L627,933.7 L629,936.3 L631,946.0 L633,931.9 L635,943.9 L637,928.6 L639,932.7 L641,934.5 L643,940.4 L645,942.1 L647,932.5 L649,935.4 L651,935.9 L653,932.8 L655,934.3 L657,937.6 L659,937.2 L661,938.4 L663,958.3 L665,944.9 L667,934.5 L669,922.6 L671,924.1 L673,943.8 L675,927.9 L677,935.2 L679,935.2 L681,926.7 L683,930.2 L685,938.8 L687,917.6 L689,930.9 L691,926.7 L693,923.3 L695,916.8 L697,927.3 L699,921.8 L701,921.2 L703,932.8 L705,916.5 L707,921.6 L709,924.3 L711,939.0 L713,944.4 L715,938.7 L717,937.4 L719,914.6 L721,939.5 L723,930.3 L725,919.0 L727,923.8 L729,914.3 L731,916.6 L733,932.5 L735,936.3 L737,930.6 L739,925.3 L741,924.2 L743,911.6 L745,927.4 L747,919.6 L749,927.5 L751,922.4 L753,928.2 L755,922.8 L757,928.1 L759,937.3 L761,944.8 L763,937.0 L765,941.1 L767,933.9 L769,925.1 L771,937.7 L773,929.6 L775,936.1 L777,948.7 L779,948.6 L781,947.7 L783,952.6 L785,941.8 L787,918.3 L789,929.8 L791,929.2 L793,931.4 L795,945.4 L797,937.4 L799,937.3 L801,952.1 L803,935.9 L805,923.2 L807,932.3 L809,931.1 L811,929.6 L813,936.9 L815,917.1 L817,939.0 L819,938.1 L821,932.4 L823,946.1 L825,930.4 L827,926.8 L829,940.7 L831,924.8 L833,926.8 L835,923.4 L837,936.9 L839,922.9 L841,937.9 L843,940.0 L845,943.7 L847,939.9 L849,949.7 L851,931.7 L853,923.5 L855,924.2 L857,947.3 L859,928.3 L861,943.5 L863,949.5 L865,927.9 L867,943.5 L869,929.3 L871,935.2 L873,918.0 L875,943.9 L877,932.9 L879,930.3 L881,923.9 L883,917.6 L885,920.9 L887,928.1 L889,932.4 L891,943.6 L893,938.0 L895,919.1 L897,925.7 L899,936.1 L901,943.4 L903,957.5 L905,951.9 L907,936.6 L909,946.1 L911,935.8 L913,939.0 L915,937.5 L917,940.6 L919,936.9 L921,941.4 L923,948.1 L925,941.4 L927,931.1 L929,946.8 L931,933.3 L933,940.6 L935,949.5 L937,965.7 L939,944.4 L941,931.0 L943,942.7 L945,942.1 L947,939.4 L949,939.7 L951,934.5 L953,930.6 L955,906.3 L957,936.9 L959,924.9 L961,933.6 L963,928.0 L965,945.5 L967,937.2 L969,932.9 L971,950.4 L973,943.1 L975,936.5 L977,934.0 L979,920.3 L981,916.6 L983,928.8 L985,941.2 L987,925.9 L989,945.6 L991,944.0 L993,940.0 L995,940.9 L997,942.6 L999,927.8 L1001,935.8 L1003,928.9 L1005,942.8 L1007,937.7 L1009,939.0 L1011,936.4 L1013,926.6 L1015,932.6 L1017,931.6 L1019,908.6 L1021,933.6 L1023,923.2 L1025,941.0 L1027,938.5 L1029,930.4 L1031,922.0 L1033,916.2 L1035,932.6 L1037,931.1 L1039,938.3 L1041,939.2 L1043,941.6 L1045,937.1 L1047,927.7 L1049,931.1 L1051,952.5 L1053,919.7 L1055,931.3 L1057,943.0 L1059,926.5 L1061,928.2 L1063,938.0 L1065,918.0 L1067,942.2 L1069,939.0 L1071,936.6 L1073,952.4 L1075,933.0 L1077,935.6 L1079,943.2 L1081,929.6 L1083,937.5 L1085,942.3 L1087,929.5 L1089,934.3 L1091,946.8 L1093,924.3 L1095,943.1 L1097,936.2 L1099,941.5 L1101,935.6 L1103,944.1 L1105,943.6 L1107,922.6 L1109,938.1 L1111,944.3 L1113,929.5 L1115,929.9 L1117,931.4 L1119,931.0 L1121,934.7 L1123,929.9 L1125,928.3 L1127,926.6 L1129,918.5 L1131,933.8 L1133,928.0 L1135,928.3 L1137,927.4 L1139,935.8 L1141,928.8 L1143,920.7 L1145,928.0 L1147,932.5 L1149,926.3 L1151,923.7 L1153,928.0 L1155,925.0 L1157,922.3 L1159,936.6 L1161,944.1 L1163,926.1 L1165,927.5 L1167,908.8 L1169,925.9 L1171,922.6 L1173,939.9 L1175,932.5 L1177,940.6 L1179,930.7 L1181,916.5 L1183,929.1 L1185,915.4 L1187,914.9 L1189,931.3 L1191,922.0 L1193,909.5 L1195,919.6 L1197,927.0 L1199,925.6 L1201,933.3 L1203,916.0 L1205,936.6 L1207,934.7 L1209,920.8 L1211,927.2 L1213,921.8 L1215,928.8 L1217,935.8 L1219,926.1 L1221,925.8 L1223,934.3 L1225,929.6 L1227,922.3 L1229,935.8 L1231,922.5 L1233,916.0 L1235,911.8 L1237,905.6 L1239,907.8 L1241,916.6 L1243,914.2 L1245,939.1 L1247,920.4 L1249,912.1 L1251,913.4 L1253,920.9 L1255,924.4 L1257,926.8 L1259,928.7 L1261,921.4 L1263,922.4 L1265,924.8 L1267,919.5 L1269,917.6 L1271,906.9 L1273,924.0 L1275,924.5 L1277,918.1 L1279,922.9 L1281,918.3 L1283,917.4 L1285,917.9 L1287,924.9 L1289,929.3 L1291,932.5 L1293,943.0 L1295,932.6 L1297,928.0 L1299,944.0 L1301,929.6 L1303,926.9 L1305,922.1 L1307,919.3 L1309,919.2 L1311,926.5 L1313,918.7 L1315,905.0 L1317,916.2 L1319,907.3 L1321,938.1 L1323,937.1 L1325,929.6 L1327,932.9 L1329,924.7 L1331,949.5 L1333,946.6 L1335,922.8 L1337,937.7 L1339,941.4 L1341,934.9 L1343,930.4 L1345,930.0 L1347,931.5 L1349,926.2 L1351,926.6 L1353,937.8 L1355,926.8 L1357,927.1 L1359,939.7 L1361,941.4 L1363,929.8 L1365,931.1 L1367,932.9 L1369,921.3 L1371,940.5 L1373,948.9 L1375,926.3 L1377,946.6 L1379,939.1 L1381,952.3 L1383,948.3 L1385,937.7 L1387,929.0 L1389,944.7 L1391,925.4 L1393,941.6 L1395,942.1 L1397,937.4 L1399,934.4 L1401,949.5 L1403,931.9 L1405,935.7 L1407,937.7 L1409,932.8 L1411,940.2 L1413,936.8 L1415,924.8 L1417,937.0 L1419,922.6 L1421,932.0 L1423,924.2 L1425,934.0 L1427,928.5 L1429,937.0 L1431,940.2 L1433,936.3 L1435,928.4 L1437,943.9 L1439,933.6 L1441,940.2 L1443,947.3 L1445,941.8 L1447,947.1 L1449,943.5 L1451,934.6 L1453,947.7 L1455,921.3 L1457,934.1 L1459,942.1 L1461,931.7 L1463,928.7 L1465,938.1 L1467,932.1 L1469,942.0 L1471,934.8 L1473,945.0 L1475,958.8 L1477,932.2 L1479,939.4 L1481,946.1 L1483,932.8 L1485,936.2 L1487,930.9 L1489,928.9 L1491,930.7 L1493,935.6 L1495,943.9 L1497,938.9 L1499,947.1 L1501,939.3 L1503,948.1 L1505,938.9 L1507,950.2 L1509,950.1 L1511,935.6 L1513,957.0 L1515,953.5 L1517,958.6 L1519,942.1 L1521,945.3 L1523,937.3 L1525,944.0 L1527,940.0 L1529,939.5 L1531,941.3 L1533,942.7 L1535,947.6 L1537,939.4 L1539,946.2 L1541,934.1 L1543,937.7 L1545,938.5 L1547,942.7 L1549,954.2 L1551,924.6 L1553,937.2 L1555,954.4 L1557,943.4 L1559,941.6 L1561,937.0 L1563,943.8 L1565,950.9 L1567,961.4 L1569,941.2 L1571,948.7 L1573,955.6 L1575,943.7 L1577,948.5 L1579,942.4 L1581,939.8 L1583,954.9 L1585,952.5 L1587,961.8 L1589,953.3 L1591,948.1 L1593,945.3 L1595,949.5 L1597,956.8 L1599,945.7 L1601,955.3 L1603,944.9 L1605,942.4 L1607,930.8 L1609,940.6 L1611,953.9 L1613,946.6 L1615,940.8 L1617,948.0 L1619,955.4 L1621,935.2 L1623,964.3 L1625,960.6 L1627,945.5 L1629,944.9 L1631,976.8 L1633,965.0 L1635,964.1 L1637,962.1 L1639,950.8 L1641,938.7 L1643,945.3 L1645,951.6 L1647,965.2 L1649,962.0 L1651,957.1 L1653,954.4 L1655,961.5 L1657,958.6 L1659,950.7 L1661,941.7 L1663,949.3 L1665,953.5 L1667,941.8 L1669,940.3 L1671,939.7 L1673,934.7 L1675,932.7 L1677,952.6 L1679,944.4 L1681,943.5 L1683,942.2 L1685,942.3 L1687,946.2 L1689,941.7 L1691,944.4 L1693,942.5 L1695,952.5 L1697,957.4 L1699,938.2 L1701,941.7 L1703,940.4 L1705,936.9 L1707,938.1 L1709,935.7 L1711,938.1 L1713,934.5 L1715,941.8 L1717,956.3 L1719,959.7 L1721,936.6 L1723,950.5 L1725,945.5 L1727,945.1 L1729,944.1 L1731,952.6 L1733,947.4 L1735,945.0 L1737,937.4 L1739,961.6 L1741,953.9 L1743,935.6 L1745,926.5 L1747,938.4 L1749,934.7 L1751,947.9 L1753,945.1 L1755,942.4 L1757,953.9 L1759,944.7 L1761,951.1 L1763,928.9 L1765,931.6 L1767,931.3 L1769,937.5 L1771,942.9 L1773,939.5 L1775,956.6 L1777,939.6 L1779,944.3 L1781,939.2 L1783,931.6 L1785,936.0 L1787,940.9 L1789,944.6 L1791,952.1 L1793,943.2 L1795,939.8 L1797,949.7 L1799,960.5 L1801,939.4 L1803,932.9 L1805,936.0 L1807,939.2 L1809,945.7 L1811,942.5 L1813,929.9 L1815,938.1 L1817,944.1 L1819,927.1 L1821,942.2 L1823,949.8 L1825,947.1 L1827,938.7 L1829,947.4 L1831,924.2 L1833,944.8 L1835,942.3 L1837,934.8 L1839,922.3 L1841,931.5 L1843,936.2 L1845,945.4 L1847,931.3 L1849,951.3 L1851,930.7 L1853,944.5 L1855,939.8 L1857,945.3 L1859,947.6 L1861,945.8 L1863,941.6 L1865,947.1 L1867,949.8 L1869,939.0 L1871,934.3 L1873,946.4 L1875,938.3 L1877,930.4 L1879,935.6 L1881,938.9 L1883,945.6 L1885,939.3 L1887,950.0 L1889,941.9 L1891,956.4 L1893,951.8 L1895,945.7 L1897,939.4 L1899,932.7 L1901,944.2 L1903,941.4 L1905,942.8 L1907,939.0 L1909,936.4 L1911,950.0 L1913,949.1 L1915,946.0 L1917,935.7 L1919,936.5 L1921,945.0 L1923,928.8 L1925,940.0 L1927,937.7 L1929,933.4 L1931,932.4 L1933,923.5 L1935,959.3 L1937,943.7 L1939,930.6 L1941,939.2 L1943,931.6 L1945,929.1 L1947,957.6 L1949,943.8 L1951,938.7 L1953,931.4 L1955,927.3 L1957,928.9 L1959,938.4 L1961,932.5 L1963,934.8 L1965,935.1 L1967,931.6 L1969,937.6 L1971,952.8 L1973,938.5 L1975,944.5 L1977,921.5 L1979,932.4 L1981,934.7 L1983,947.0 L1985,935.7 L1987,939.0 L1989,941.0 L1991,938.8 L1993,929.5 L1995,925.1 L1997,933.9 L1999,934.8 L2001,944.6 L2003,944.2 L2005,934.4 L2007,937.6 L2009,927.9 L2011,929.7 L2013,934.5 L2015,941.4 L2017,947.0 L2019,937.4 L2021,929.0 L2023,943.9 L2025,949.4 L2027,936.9 L2029,957.1 L2031,936.3 L2033,918.3 L2035,929.6 L2037,946.6 L2039,941.8 L2041,941.6 L2043,936.6 L2045,936.1 L2047,940.3 L2049,947.5 L2051,936.1 L2053,940.3 L2055,968.6 L2057,960.0 L2059,972.1 L2061,940.9 L2063,938.2 L2065,948.5 L2067,926.3 L2069,933.8 L2071,938.6 L2073,946.7 L2075,938.2 L2077,944.1 L2079,950.1 L2081,953.0 L2083,933.0 L2085,940.4 L2087,934.8 L2089,928.1 L2091,955.9 L2093,941.2 L2095,950.5 L2097,942.8 L2099,937.8 L2101,948.4 L2103,949.2 L2105,946.2 L2107,938.5 L2109,951.9 L2111,944.4 L2113,945.9 L2115,943.2 L2117,945.8 L2119,941.2 L2121,949.4 L2123,944.3 L2125,938.0 L2127,948.8 L2129,948.9 L2131,934.3 L2133,927.3 L2135,944.7 L2137,923.8 L2139,947.7 L2141,938.8 L2143,956.8 L2145,967.8 L2147,952.1 L2149,951.3 L2151,939.7 L2153,937.9 L2155,937.4 L2157,928.6 L2159,940.6 L2161,935.5 L2163,927.5 L2165,859.0 L2167,859.0 L2169,941.8 L2171,946.4 L2173,953.6 L2175,965.1 L2177,941.9 L2179,961.2 L2181,939.0 L2183,951.8 L2185,943.4 L2187,944.3 L2189,941.2 L2191,928.0 L2193,935.6 L2195,945.8 L2197,959.7 L2199,929.5 L2201,935.8 L2203,927.5 L2205,926.6 L2207,925.7 L2209,950.1 L2211,943.8 L2213,949.2 L2215,950.0 L2217,932.9 L2219,954.6 L2221,943.3 L2223,947.8 L2225,933.9 L2227,945.5 L2229,941.9 L2231,967.9 L2233,969.2 L2235,941.3 L2237,943.7 L2239,949.3 L2241,936.5 L2243,940.0 L2245,926.2 L2247,939.2 L2249,932.9 L2251,948.7 L2253,923.1 L2255,935.2 L2257,947.4 L2259,937.7 L2261,940.0 L2263,939.2 L2265,946.2 L2267,930.0 L2269,924.6 L2271,942.5 L2273,955.1 L2275,931.1 L2277,945.9 L2279,939.2 L2281,943.7 L2283,951.5 L2285,928.9 L2287,945.8 L2289,944.9 L2291,939.3 L2293,943.1 L2295,934.8 L2297,941.2 L2299,927.5 L2301,921.5 L2303,937.1 L2305,936.3 L2307,944.1 L2309,925.8 L2311,928.5 L2313,934.9 L2315,943.9 L2317,959.5 L2319,941.8 L2321,939.2 L2323,926.4 L2325,933.4 L2327,938.9 L2329,959.2 L2331,933.7 L2333,939.1 L2335,934.7 L2337,937.4 L2339,938.6 L2341,947.0 L2343,930.4 L2345,940.8 L2347,936.3 L2349,938.0 L2351,924.0 L2353,954.6 L2355,941.8 L2357,933.5 L2359,929.2 L2361,941.0 L2363,944.4 L2365,949.0 L2367,924.8 L2369,925.8 L2371,946.0 L2373,923.1 L2375,927.0 L2377,933.5 L2379,936.5 L2381,942.9 L2383,936.2 L2385,919.5 L2387,906.8 L2389,928.3 L2391,930.8 L2393,921.0 L2395,938.8 L2397,929.9 L2399,945.2 L2401,936.9 L2403,919.6 L2405,931.6 L2407,936.9 L2409,938.4 L2411,935.9 L2413,929.1 L2415,928.8 L2417,929.6 L2419,922.0 L2421,940.7 L2423,925.2 L2425,919.2 L2427,922.5 L2429,905.9 L2431,903.3 L2433,913.1 L2435,907.1 L2437,932.6 L2439,913.0 L2441,908.7 L2443,917.2 L2445,932.0 L2447,921.0 L2449,927.6 L2451,937.7 L2453,933.0 L2455,929.5 L2457,925.7 L2459,921.6 L2461,934.2 L2463,934.6 L2465,938.5 L2467,931.4 L2469,914.0 L2471,931.9 L2473,940.2 L2475,940.7 L2477,928.3 L2479,929.2 L2481,921.3 L2483,945.9 L2485,927.8 L2487,922.7 L2489,921.2 L2491,926.7 L2493,936.0 L2495,943.9 L2497,934.5 L2499,927.8 L2501,931.7 L2503,927.4 L2505,930.7 L2507,921.9 L2509,916.5 L2511,923.9 L2513,930.9 L2515,904.6 L2517,905.4 L2519,917.7 L2521,920.1 L2523,908.1 L2525,918.3 L2527,915.1 L2529,922.8 L2531,907.7 L2533,930.5 L2535,924.4 L2537,919.9 L2539,946.8 L2541,932.3 L2543,931.3 L2545,919.1 L2547,923.5 L2549,915.8 L2551,929.1 L2553,926.9 L2555,920.5 L2557,931.7 L2559,928.2 L2561,927.0 L2563,934.1 L2565,938.2 L2567,938.3 L2569,935.9 L2571,934.9 L2573,930.3 L2575,916.1 L2577,921.7 L2579,912.2 L2581,920.6 L2583,928.2 L2585,909.1 L2587,924.7 L2589,914.0 L2591,919.5 L2593,920.5 L2595,916.0 L2597,909.9 L2599,923.2 L2601,927.5 L2603,926.3 L2605,922.6 L2607,927.5 L2609,921.9 L2611,929.0 L2613,919.3 L2615,930.9 L2617,930.3 L2619,930.9 L2621,928.1 L2623,925.3 L2625,926.1 L2627,920.8 L2629,907.8 L2631,924.8 L2633,923.2 L2635,919.6 L2637,920.5 L2639,942.7 L2641,929.5 L2643,937.0 L2645,939.0 L2647,918.8 L2649,946.9 L2651,942.3 L2653,934.5 L2655,946.4 L2657,943.7 L2659,941.4 L2661,938.0 L2663,933.5 L2665,936.8 L2667,933.5 L2669,929.8 L2671,944.9 L2673,932.0 L2675,926.8 L2677,912.4 L2679,924.6 L2681,938.4 L2683,928.9 L2685,925.2 L2687,928.9 L2689,939.4 L2691,943.5 L2693,928.1 L2695,925.3 L2697,924.9 L2699,929.2 L2701,938.6 L2703,932.9 L2705,932.8 L2707,949.9 L2709,938.6 L2711,950.5 L2713,929.6 L2715,927.2 L2717,930.1 L2719,927.1 L2721,927.8 L2723,919.9 L2725,926.6 L2727,932.8 L2729,932.1 L2731,926.5 L2733,945.3 L2735,941.0 L2737,939.7 L2739,940.1 L2741,928.1 L2743,932.3 L2745,935.1 L2747,931.8 L2749,878.0 L2751,878.0 L2753,943.7 L2755,939.6 L2757,937.9 L2759,943.0 L2761,938.8 L2763,923.7 L2765,932.6 L2767,927.1 L2769,941.0 L2771,937.5 L2773,941.8 L2775,921.0 L2777,946.7 L2779,941.5 L2781,917.4 L2783,928.1 L2785,937.5 L2787,928.4 L2789,935.9 L2791,934.5 L2793,936.6 L2795,946.8 L2797,939.8 L2799,942.6 L2801,958.9 L2803,946.4 L2805,957.6 L2807,950.4 L2809,939.3 L2811,935.7 L2813,922.9 L2815,931.2 L2817,928.2 L2819,924.4 L2821,938.1 L2823,942.7 L2825,940.1 L2827,949.6 L2829,945.9 L2831,933.7 L2833,930.3 L2835,931.3 L2837,939.4 L2839,948.0 L2841,940.4 L2843,947.4 L2845,953.2 L2847,954.0 L2849,957.4 L2851,952.0 L2853,955.8 L2855,955.7 L2857,946.2 L2859,942.3 L2861,943.3 L2863,951.0 L2865,962.7 L2867,948.6 L2869,936.0 L2871,954.4 L2873,954.9 L2875,954.9 L2877,946.0 L2879,956.6 L2881,941.8 L2883,941.1 L2885,948.7 L2887,933.4 L2889,914.7 L2891,951.2 L2893,957.0 L2895,944.7 L2897,936.7 L2899,934.9 L2901,953.5 L2903,938.3 L2905,949.1 L2907,947.0 L2909,926.5 L2911,923.3 L2913,934.8 L2915,941.4 L2917,944.1 L2919,939.3 L2921,950.9 L2923,947.3 L2925,935.7 L2927,953.2 L2929,926.5 L2931,931.9 L2933,924.7 L2935,933.6 L2937,946.7 L2939,938.3 L2941,941.1 L2943,946.7 L2945,924.5 L2947,945.7 L2949,940.3 L2951,939.4 L2953,937.2 L2955,927.1 L2957,925.9 L2959,943.1 L2961,940.9 L2963,935.6 L2965,933.8 L2967,950.1" stroke="#e6e6f4" stroke-width="1.6" fill="none"/>
</svg><svg class="a" style="left:0px;top:0px" width="2967" height="1020"><path d="M508,930 V1000" stroke="#9a9a9a" stroke-width="1.5"/><path d="M500,999 h16 l-8,19 z" fill="#a9a96a"/><path d="M820,930 V1000" stroke="#9a9a9a" stroke-width="1.5"/><path d="M812,999 h16 l-8,19 z" fill="#a9a96a"/><path d="M924,930 V1000" stroke="#9a9a9a" stroke-width="1.5"/><path d="M916,999 h16 l-8,19 z" fill="#a9a96a"/><path d="M1028,930 V1000" stroke="#9a9a9a" stroke-width="1.5"/><path d="M1020,999 h16 l-8,19 z" fill="#a9a96a"/><path d="M1236,930 V1000" stroke="#9a9a9a" stroke-width="1.5"/><path d="M1228,999 h16 l-8,19 z" fill="#a9a96a"/><path d="M1340,930 V1000" stroke="#9a9a9a" stroke-width="1.5"/><path d="M1332,999 h16 l-8,19 z" fill="#a9a96a"/><path d="M1443,930 V1000" stroke="#9a9a9a" stroke-width="1.5"/><path d="M1435,999 h16 l-8,19 z" fill="#a9a96a"/><path d="M1547,930 V1000" stroke="#9a9a9a" stroke-width="1.5"/><path d="M1539,999 h16 l-8,19 z" fill="#a9a96a"/><path d="M1651,930 V1000" stroke="#9a9a9a" stroke-width="1.5"/><path d="M1643,999 h16 l-8,19 z" fill="#a9a96a"/><path d="M1755,930 V1000" stroke="#9a9a9a" stroke-width="1.5"/><path d="M1747,999 h16 l-8,19 z" fill="#a9a96a"/><path d="M1963,930 V1000" stroke="#9a9a9a" stroke-width="1.5"/><path d="M1955,999 h16 l-8,19 z" fill="#a9a96a"/><path d="M2275,930 V1000" stroke="#9a9a9a" stroke-width="1.5"/><path d="M2267,999 h16 l-8,19 z" fill="#a9a96a"/><path d="M2379,930 V1000" stroke="#9a9a9a" stroke-width="1.5"/><path d="M2371,999 h16 l-8,19 z" fill="#a9a96a"/><path d="M2482,930 V1000" stroke="#9a9a9a" stroke-width="1.5"/><path d="M2474,999 h16 l-8,19 z" fill="#a9a96a"/><path d="M2586,930 V1000" stroke="#9a9a9a" stroke-width="1.5"/><path d="M2578,999 h16 l-8,19 z" fill="#a9a96a"/><path d="M2621,930 V1000" stroke="#9a9a9a" stroke-width="1.5"/><path d="M2613,999 h16 l-8,19 z" fill="#a9a96a"/><path d="M2690,930 V1000" stroke="#9a9a9a" stroke-width="1.5"/><path d="M2682,999 h16 l-8,19 z" fill="#a9a96a"/><path d="M2760,930 V1000" stroke="#9a9a9a" stroke-width="1.5"/><path d="M2752,999 h16 l-8,19 z" fill="#a9a96a"/><path d="M2899,930 V1000" stroke="#9a9a9a" stroke-width="1.5"/><path d="M2891,999 h16 l-8,19 z" fill="#a9a96a"/><path d="M993,985 V999" stroke="#bbb" stroke-dasharray="2 2"/><path d="M984,1000 h18 l-9,16 z" fill="none" stroke="#bbb" stroke-width="2"/></svg><div class="a" style="left:1653px;top:210px;width:93px;height:808px;background:linear-gradient(rgba(20,190,20,0.55) 0%,rgba(20,150,20,0.45) 45%,rgba(50,100,50,0.36) 70%,rgba(120,130,130,0.26) 100%);border-left:2px solid #58b858;border-right:2px solid #58b858;box-sizing:border-box;"></div><div class="a" style="left:1653px;top:210px;width:93px;height:9px;background:linear-gradient(#70f070,#30d030);"></div><div class="a" style="left:1655px;top:1005px;width:89px;height:10px;background:#1e8e24;"></div><div class="a" style="left:927px;top:963px;width:213.36031250000002px;height:25px;background:rgba(10,10,40,0.55);"></div><div class="t s" style="left:931.0px;top:965.5px;font-size:18px;line-height:21px;color:#a4a4b4;transform:scaleX(0.915);transform-origin:0 50%;">USB IRL Shanwick AirRadio</div><div class="t s" style="left:440.0px;top:948.5px;font-size:16px;line-height:19px;color:#a4a4d4;transform:scaleX(0.920);transform-origin:0 50%;">-5 dB</div><div class="t s" style="left:2924.8px;top:948.5px;font-size:16px;line-height:19px;color:#a4a4d4;transform:scaleX(0.920);transform-origin:0 50%;">-5 dB</div><div class="t s" style="left:440.0px;top:989.5px;font-size:16px;line-height:19px;color:#a4a4d4;transform:scaleX(0.920);transform-origin:0 50%;">-10 dB</div><div class="t s" style="left:2916.6px;top:989.5px;font-size:16px;line-height:19px;color:#a4a4d4;transform:scaleX(0.920);transform-origin:0 50%;">-10 dB</div><div class="a" style="left:433px;top:1018px;width:2534px;height:41px;background:#2d3a5f;border-bottom:1px solid #aab0c8;box-sizing:border-box;"></div><div class="t s" style="left:1442.0px;top:1027.5px;font-size:21px;line-height:25px;color:#fff;transform:scaleX(0.969);transform-origin:0 50%;">(Transoceanic Flights) (HFDL) and (Ship/Shore) Maritime</div><div class="a" style="left:433px;top:1059px;width:2534px;height:32px;background:linear-gradient(#5e5e5e 0%,#3a3a3a 35%,#1a1a1a 50%,#000 56%,#000 100%);"></div><svg class="a" style="left:0px;top:0px" width="2967" height="1095"><path d="M438.7,1060 v4" stroke="#d0d0d0" stroke-width="1"/><path d="M456.0,1060 v4" stroke="#d0d0d0" stroke-width="1"/><path d="M473.4,1060 v4" stroke="#d0d0d0" stroke-width="1"/><path d="M490.7,1060 v4" stroke="#d0d0d0" stroke-width="1"/><path d="M508.0,1060 v6" stroke="#d0d0d0" stroke-width="1"/><path d="M525.3,1060 v4" stroke="#d0d0d0" stroke-width="1"/><path d="M542.6,1060 v4" stroke="#d0d0d0" stroke-width="1"/><path d="M560.0,1060 v4" stroke="#d0d0d0" stroke-width="1"/><path d="M577.3,1060 v4" stroke="#d0d0d0" stroke-width="1"/><path d="M594.6,1060 v4" stroke="#d0d0d0" stroke-width="1"/><path d="M612.0,1060 v4" stroke="#d0d0d0" stroke-width="1"/><path d="M629.3,1060 v4" stroke="#d0d0d0" stroke-width="1"/><path d="M646.6,1060 v4" stroke="#d0d0d0" stroke-width="1"/><path d="M663.9,1060 v4" stroke="#d0d0d0" stroke-width="1"/><path d="M681.2,1060 v6" stroke="#d0d0d0" stroke-width="1"/><path d="M698.6,1060 v4" stroke="#d0d0d0" stroke-width="1"/><path d="M715.9,1060 v4" stroke="#d0d0d0" stroke-width="1"/><path d="M733.2,1060 v4" stroke="#d0d0d0" stroke-width="1"/><path d="M750.5,1060 v4" stroke="#d0d0d0" stroke-width="1"/><path d="M767.9,1060 v4" stroke="#d0d0d0" stroke-width="1"/><path d="M785.2,1060 v4" stroke="#d0d0d0" stroke-width="1"/><path d="M802.5,1060 v4" stroke="#d0d0d0" stroke-width="1"/><path d="M819.8,1060 v4" stroke="#d0d0d0" stroke-width="1"/><path d="M837.2,1060 v4" stroke="#d0d0d0" stroke-width="1"/><path d="M854.5,1060 v6" stroke="#d0d0d0" stroke-width="1"/><path d="M871.8,1060 v4" stroke="#d0d0d0" stroke-width="1"/><path d="M889.1,1060 v4" stroke="#d0d0d0" stroke-width="1"/><path d="M906.5,1060 v4" stroke="#d0d0d0" stroke-width="1"/><path d="M923.8,1060 v4" stroke="#d0d0d0" stroke-width="1"/><path d="M941.1,1060 v4" stroke="#d0d0d0" stroke-width="1"/><path d="M958.5,1060 v4" stroke="#d0d0d0" stroke-width="1"/><path d="M975.8,1060 v4" stroke="#d0d0d0" stroke-width="1"/><path d="M993.1,1060 v4" stroke="#d0d0d0" stroke-width="1"/><path d="M1010.4,1060 v4" stroke="#d0d0d0" stroke-width="1"/><path d="M1027.8,1060 v6" stroke="#d0d0d0" stroke-width="1"/><path d="M1045.1,1060 v4" stroke="#d0d0d0" stroke-width="1"/><path d="M1062.4,1060 v4" stroke="#d0d0d0" stroke-width="1"/><path d="M1079.7,1060 v4" stroke="#d0d0d0" stroke-width="1"/><path d="M1097.0,1060 v4" stroke="#d0d0d0" stroke-width="1"/><path d="M1114.4,1060 v4" stroke="#d0d0d0" stroke-width="1"/><path d="M1131.7,1060 v4" stroke="#d0d0d0" stroke-width="1"/><path d="M1149.0,1060 v4" stroke="#d0d0d0" stroke-width="1"/><path d="M1166.3,1060 v4" stroke="#d0d0d0" stroke-width="1"/><path d="M1183.7,1060 v4" stroke="#d0d0d0" stroke-width="1"/><path d="M1201.0,1060 v6" stroke="#d0d0d0" stroke-width="1"/><path d="M1218.3,1060 v4" stroke="#d0d0d0" stroke-width="1"/><path d="M1235.7,1060 v4" stroke="#d0d0d0" stroke-width="1"/><path d="M1253.0,1060 v4" stroke="#d0d0d0" stroke-width="1"/><path d="M1270.3,1060 v4" stroke="#d0d0d0" stroke-width="1"/><path d="M1287.6,1060 v4" stroke="#d0d0d0" stroke-width="1"/><path d="M1304.9,1060 v4" stroke="#d0d0d0" stroke-width="1"/><path d="M1322.3,1060 v4" stroke="#d0d0d0" stroke-width="1"/><path d="M1339.6,1060 v4" stroke="#d0d0d0" stroke-width="1"/><path d="M1356.9,1060 v4" stroke="#d0d0d0" stroke-width="1"/><path d="M1374.2,1060 v6" stroke="#d0d0d0" stroke-width="1"/><path d="M1391.6,1060 v4" stroke="#d0d0d0" stroke-width="1"/><path d="M1408.9,1060 v4" stroke="#d0d0d0" stroke-width="1"/><path d="M1426.2,1060 v4" stroke="#d0d0d0" stroke-width="1"/><path d="M1443.5,1060 v4" stroke="#d0d0d0" stroke-width="1"/><path d="M1460.9,1060 v4" stroke="#d0d0d0" stroke-width="1"/><path d="M1478.2,1060 v4" stroke="#d0d0d0" stroke-width="1"/><path d="M1495.5,1060 v4" stroke="#d0d0d0" stroke-width="1"/><path d="M1512.8,1060 v4" stroke="#d0d0d0" stroke-width="1"/><path d="M1530.2,1060 v4" stroke="#d0d0d0" stroke-width="1"/><path d="M1547.5,1060 v6" stroke="#d0d0d0" stroke-width="1"/><path d="M1564.8,1060 v4" stroke="#d0d0d0" stroke-width="1"/><path d="M1582.1,1060 v4" stroke="#d0d0d0" stroke-width="1"/><path d="M1599.5,1060 v4" stroke="#d0d0d0" stroke-width="1"/><path d="M1616.8,1060 v4" stroke="#d0d0d0" stroke-width="1"/><path d="M1634.1,1060 v4" stroke="#d0d0d0" stroke-width="1"/><path d="M1651.5,1060 v4" stroke="#d0d0d0" stroke-width="1"/><path d="M1668.8,1060 v4" stroke="#d0d0d0" stroke-width="1"/><path d="M1686.1,1060 v4" stroke="#d0d0d0" stroke-width="1"/><path d="M1703.4,1060 v4" stroke="#d0d0d0" stroke-width="1"/><path d="M1720.8,1060 v6" stroke="#d0d0d0" stroke-width="1"/><path d="M1738.1,1060 v4" stroke="#d0d0d0" stroke-width="1"/><path d="M1755.4,1060 v4" stroke="#d0d0d0" stroke-width="1"/><path d="M1772.7,1060 v4" stroke="#d0d0d0" stroke-width="1"/><path d="M1790.0,1060 v4" stroke="#d0d0d0" stroke-width="1"/><path d="M1807.4,1060 v4" stroke="#d0d0d0" stroke-width="1"/><path d="M1824.7,1060 v4" stroke="#d0d0d0" stroke-width="1"/><path d="M1842.0,1060 v4" stroke="#d0d0d0" stroke-width="1"/><path d="M1859.3,1060 v4" stroke="#d0d0d0" stroke-width="1"/><path d="M1876.7,1060 v4" stroke="#d0d0d0" stroke-width="1"/><path d="M1894.0,1060 v6" stroke="#d0d0d0" stroke-width="1"/><path d="M1911.3,1060 v4" stroke="#d0d0d0" stroke-width="1"/><path d="M1928.6,1060 v4" stroke="#d0d0d0" stroke-width="1"/><path d="M1946.0,1060 v4" stroke="#d0d0d0" stroke-width="1"/><path d="M1963.3,1060 v4" stroke="#d0d0d0" stroke-width="1"/><path d="M1980.6,1060 v4" stroke="#d0d0d0" stroke-width="1"/><path d="M1998.0,1060 v4" stroke="#d0d0d0" stroke-width="1"/><path d="M2015.3,1060 v4" stroke="#d0d0d0" stroke-width="1"/><path d="M2032.6,1060 v4" stroke="#d0d0d0" stroke-width="1"/><path d="M2049.9,1060 v4" stroke="#d0d0d0" stroke-width="1"/><path d="M2067.2,1060 v6" stroke="#d0d0d0" stroke-width="1"/><path d="M2084.6,1060 v4" stroke="#d0d0d0" stroke-width="1"/><path d="M2101.9,1060 v4" stroke="#d0d0d0" stroke-width="1"/><path d="M2119.2,1060 v4" stroke="#d0d0d0" stroke-width="1"/><path d="M2136.6,1060 v4" stroke="#d0d0d0" stroke-width="1"/><path d="M2153.9,1060 v4" stroke="#d0d0d0" stroke-width="1"/><path d="M2171.2,1060 v4" stroke="#d0d0d0" stroke-width="1"/><path d="M2188.5,1060 v4" stroke="#d0d0d0" stroke-width="1"/><path d="M2205.8,1060 v4" stroke="#d0d0d0" stroke-width="1"/><path d="M2223.2,1060 v4" stroke="#d0d0d0" stroke-width="1"/><path d="M2240.5,1060 v6" stroke="#d0d0d0" stroke-width="1"/><path d="M2257.8,1060 v4" stroke="#d0d0d0" stroke-width="1"/><path d="M2275.1,1060 v4" stroke="#d0d0d0" stroke-width="1"/><path d="M2292.5,1060 v4" stroke="#d0d0d0" stroke-width="1"/><path d="M2309.8,1060 v4" stroke="#d0d0d0" stroke-width="1"/><path d="M2327.1,1060 v4" stroke="#d0d0d0" stroke-width="1"/><path d="M2344.4,1060 v4" stroke="#d0d0d0" stroke-width="1"/><path d="M2361.8,1060 v4" stroke="#d0d0d0" stroke-width="1"/><path d="M2379.1,1060 v4" stroke="#d0d0d0" stroke-width="1"/><path d="M2396.4,1060 v4" stroke="#d0d0d0" stroke-width="1"/><path d="M2413.8,1060 v6" stroke="#d0d0d0" stroke-width="1"/><path d="M2431.1,1060 v4" stroke="#d0d0d0" stroke-width="1"/><path d="M2448.4,1060 v4" stroke="#d0d0d0" stroke-width="1"/><path d="M2465.7,1060 v4" stroke="#d0d0d0" stroke-width="1"/><path d="M2483.1,1060 v4" stroke="#d0d0d0" stroke-width="1"/><path d="M2500.4,1060 v4" stroke="#d0d0d0" stroke-width="1"/><path d="M2517.7,1060 v4" stroke="#d0d0d0" stroke-width="1"/><path d="M2535.0,1060 v4" stroke="#d0d0d0" stroke-width="1"/><path d="M2552.3,1060 v4" stroke="#d0d0d0" stroke-width="1"/><path d="M2569.7,1060 v4" stroke="#d0d0d0" stroke-width="1"/><path d="M2587.0,1060 v6" stroke="#d0d0d0" stroke-width="1"/><path d="M2604.3,1060 v4" stroke="#d0d0d0" stroke-width="1"/><path d="M2621.7,1060 v4" stroke="#d0d0d0" stroke-width="1"/><path d="M2639.0,1060 v4" stroke="#d0d0d0" stroke-width="1"/><path d="M2656.3,1060 v4" stroke="#d0d0d0" stroke-width="1"/><path d="M2673.6,1060 v4" stroke="#d0d0d0" stroke-width="1"/><path d="M2690.9,1060 v4" stroke="#d0d0d0" stroke-width="1"/><path d="M2708.3,1060 v4" stroke="#d0d0d0" stroke-width="1"/><path d="M2725.6,1060 v4" stroke="#d0d0d0" stroke-width="1"/><path d="M2742.9,1060 v4" stroke="#d0d0d0" stroke-width="1"/><path d="M2760.2,1060 v6" stroke="#d0d0d0" stroke-width="1"/><path d="M2777.6,1060 v4" stroke="#d0d0d0" stroke-width="1"/><path d="M2794.9,1060 v4" stroke="#d0d0d0" stroke-width="1"/><path d="M2812.2,1060 v4" stroke="#d0d0d0" stroke-width="1"/><path d="M2829.5,1060 v4" stroke="#d0d0d0" stroke-width="1"/><path d="M2846.9,1060 v4" stroke="#d0d0d0" stroke-width="1"/><path d="M2864.2,1060 v4" stroke="#d0d0d0" stroke-width="1"/><path d="M2881.5,1060 v4" stroke="#d0d0d0" stroke-width="1"/><path d="M2898.8,1060 v4" stroke="#d0d0d0" stroke-width="1"/><path d="M2916.2,1060 v4" stroke="#d0d0d0" stroke-width="1"/><path d="M2933.5,1060 v6" stroke="#d0d0d0" stroke-width="1"/><path d="M2950.8,1060 v4" stroke="#d0d0d0" stroke-width="1"/></svg><div class="t s" style="left:490.5px;top:1068.5px;font-size:16px;line-height:19px;color:#fff;transform:scaleX(0.873);transform-origin:0 50%;">6.535</div><div class="t s" style="left:663.8px;top:1068.5px;font-size:16px;line-height:19px;color:#fff;transform:scaleX(0.873);transform-origin:0 50%;">6.540</div><div class="t s" style="left:837.0px;top:1068.5px;font-size:16px;line-height:19px;color:#fff;transform:scaleX(0.873);transform-origin:0 50%;">6.545</div><div class="t s" style="left:1010.2px;top:1068.5px;font-size:16px;line-height:19px;color:#fff;transform:scaleX(0.873);transform-origin:0 50%;">6.550</div><div class="t s" style="left:1183.5px;top:1068.5px;font-size:16px;line-height:19px;color:#fff;transform:scaleX(0.873);transform-origin:0 50%;">6.555</div><div class="t s" style="left:1356.8px;top:1068.5px;font-size:16px;line-height:19px;color:#fff;transform:scaleX(0.873);transform-origin:0 50%;">6.560</div><div class="t s" style="left:1530.0px;top:1068.5px;font-size:16px;line-height:19px;color:#fff;transform:scaleX(0.873);transform-origin:0 50%;">6.565</div><div class="t s" style="left:1703.2px;top:1068.5px;font-size:16px;line-height:19px;color:#fff;transform:scaleX(0.873);transform-origin:0 50%;">6.570</div><div class="t s" style="left:1876.5px;top:1068.5px;font-size:16px;line-height:19px;color:#fff;transform:scaleX(0.873);transform-origin:0 50%;">6.575</div><div class="t s" style="left:2049.8px;top:1068.5px;font-size:16px;line-height:19px;color:#fff;transform:scaleX(0.873);transform-origin:0 50%;">6.580</div><div class="t s" style="left:2223.0px;top:1068.5px;font-size:16px;line-height:19px;color:#fff;transform:scaleX(0.873);transform-origin:0 50%;">6.585</div><div class="t s" style="left:2396.2px;top:1068.5px;font-size:16px;line-height:19px;color:#fff;transform:scaleX(0.873);transform-origin:0 50%;">6.590</div><div class="t s" style="left:2569.5px;top:1068.5px;font-size:16px;line-height:19px;color:#fff;transform:scaleX(0.873);transform-origin:0 50%;">6.595</div><div class="t s" style="left:2742.8px;top:1068.5px;font-size:16px;line-height:19px;color:#fff;transform:scaleX(0.873);transform-origin:0 50%;">6.600</div><div class="t s" style="left:2916.0px;top:1068.5px;font-size:16px;line-height:19px;color:#fff;transform:scaleX(0.873);transform-origin:0 50%;">6.605</div><div class="a" style="left:433px;top:1091px;width:2534px;height:5px;background:#eef0f4;"></div><div class="a" style="left:1670px;top:1092px;width:62px;height:3px;background:repeating-linear-gradient(90deg,#555 0 2px,transparent 2px 4px);"></div><svg class="a" style="left:433px;top:1096px" width="2534" height="532">
<defs><filter id="mwf" x="0" y="0" width="2534" height="532" filterUnits="userSpaceOnUse" color-interpolation-filters="sRGB">
<feTurbulence type="fractalNoise" baseFrequency="0.2 0.38" numOctaves="2" seed="3" result="n"/>
<feColorMatrix type="matrix" in="n" values="0 0 0 0 0  0 0 0 0 0  0 0 0 0 0  2.5 0 0 0 -1.02" result="a"/>
<feFlood flood-color="#1616c4" result="c"/>
<feComposite in="c" in2="a" operator="in"/>
</filter>
<filter id="mws" x="0" y="0" width="2534" height="532" filterUnits="userSpaceOnUse" color-interpolation-filters="sRGB">
<feTurbulence type="fractalNoise" baseFrequency="0.022 0.6" numOctaves="1" seed="8" result="n2"/>
<feColorMatrix type="matrix" in="n2" values="0 0 0 0 0  0 0 0 0 0  0 0 0 0 0  6.5 0 0 0 -4.1" result="a2"/>
<feFlood flood-color="#6a8cf4" result="c2"/>
<feComposite in="c2" in2="a2" operator="in"/>
</filter>
<linearGradient id="wsg" x1="0" y1="0" x2="0" y2="1"><stop offset="0" stop-color="#fff"/><stop offset="0.4" stop-color="#fff"/><stop offset="0.5" stop-color="#666"/><stop offset="1" stop-color="#555"/></linearGradient>
<linearGradient id="wsh" x1="0" y1="0" x2="1" y2="0"><stop offset="0" stop-color="#fff"/><stop offset="0.45" stop-color="#ddd"/><stop offset="0.55" stop-color="#999"/><stop offset="1" stop-color="#bbb"/></linearGradient>
<mask id="wsm" maskUnits="userSpaceOnUse" x="0" y="0" width="2534" height="532"><rect width="2534" height="532" fill="url(#wsg)"/></mask>
<linearGradient id="wdk" x1="0" y1="0" x2="0" y2="1"><stop offset="0" stop-color="rgba(0,0,0,0)"/><stop offset="0.4" stop-color="rgba(0,0,0,0)"/><stop offset="0.5" stop-color="rgba(0,0,0,0.25)"/><stop offset="1" stop-color="rgba(0,0,0,0.2)"/></linearGradient>
</defs>
<rect width="2534" height="532" fill="#000006"/>
<rect width="2534" height="532" filter="url(#mwf)"/>
<g mask="url(#wsm)"><rect width="2534" height="532" filter="url(#mws)"/></g>
<rect width="2534" height="532" fill="url(#wdk)"/>
<path d="M1221,0 V532" stroke="#8c9a80" stroke-dasharray="3 3" stroke-width="1.3"/>
<path d="M1312,0 V532" stroke="#8c9a80" stroke-dasharray="3 3" stroke-width="1.3"/>
<path d="M1733,0 V532" stroke="#2a3aff" stroke-width="2" opacity="0.55"/>
<path d="M2317,0 V532" stroke="#2a3aff" stroke-width="2" opacity="0.45"/>
</svg><div class="a" style="left:433px;top:1520px;width:282px;height:88px;background:rgba(0,0,6,0.72);"></div><div class="t s" style="left:472.1px;top:1537.0px;font-size:54px;line-height:64px;color:#fff;">1</div><div class="t s" style="left:504.3px;top:1537.0px;font-size:54px;line-height:64px;color:#fff;">2</div><div class="t s" style="left:544.0px;top:1537.0px;font-size:54px;line-height:64px;color:#fff;">:</div><div class="t s" style="left:568.7px;top:1537.0px;font-size:54px;line-height:64px;color:#fff;">0</div><div class="t s" style="left:600.9px;top:1537.0px;font-size:54px;line-height:64px;color:#fff;">7</div><div class="t s" style="left:640.4px;top:1553.0px;font-size:37px;line-height:44px;color:#fff;">:</div><div class="t s" style="left:654.2px;top:1553.0px;font-size:37px;line-height:44px;color:#fff;">1</div><div class="t s" style="left:673.2px;top:1553.0px;font-size:37px;line-height:44px;color:#fff;">2</div><div class="t s" style="left:571.0px;top:1528.5px;font-size:11px;line-height:13px;color:#ddd;transform:scaleX(0.929);transform-origin:0 50%;">UTC</div><div class="a" style="left:2750px;top:1445px;width:212px;height:160px;background:rgba(0,0,6,0.8);box-shadow:0 0 12px 8px rgba(0,0,6,0.8);"></div><div class="t m" style="left:2753.0px;top:1465.0px;font-size:15px;line-height:18px;color:#fff;transform:scaleX(0.917);transform-origin:0 50%;text-shadow:0 0 0.6px #fff;">FFT Size ....: 4 k</div><div class="t m" style="left:2753.0px;top:1487.6px;font-size:15px;line-height:18px;color:#fff;transform:scaleX(0.917);transform-origin:0 50%;text-shadow:0 0 0.6px #fff;">Overlap .....: 21 %</div><div class="t m" style="left:2753.0px;top:1510.2px;font-size:15px;line-height:18px;color:#fff;transform:scaleX(0.917);transform-origin:0 50%;text-shadow:0 0 0.6px #fff;">Line rate ...: 60 /s</div><div class="t m" style="left:2753.0px;top:1532.8px;font-size:15px;line-height:18px;color:#fff;transform:scaleX(0.917);transform-origin:0 50%;text-shadow:0 0 0.6px #fff;">Resolution ..: 46.9 Hz</div><div class="t m" style="left:2753.0px;top:1555.4px;font-size:15px;line-height:18px;color:#fff;transform:scaleX(0.917);transform-origin:0 50%;text-shadow:0 0 0.6px #fff;">Windowing ...: Youssef</div><div class="t m" style="left:2753.0px;top:1578.0px;font-size:15px;line-height:18px;color:#fff;transform:scaleX(0.917);transform-origin:0 50%;text-shadow:0 0 0.6px #fff;">Plan ........: CUDA</div><div class="a" style="left:433px;top:1628px;width:2534px;height:42px;background:#e6e6e6;"></div><div class="a" style="left:473px;top:1628px;width:2313px;height:42px;background:linear-gradient(#606060 0%,#3a3a3a 30%,#1c1c1c 48%,#000 55%,#000 100%);"></div><div class="a" style="left:1051px;top:1628px;width:1157px;height:42px;background:linear-gradient(#6a6a6a 0%,#4a4a4a 40%,#2c2c2c 60%,#34341c 85%,#4a4a20 100%);border-left:2px solid #ddd;border-right:2px solid #ddd;box-sizing:border-box;"></div><div class="a" style="left:1150px;top:1648px;width:960px;height:22px;background:radial-gradient(ellipse 50% 100% at 50% 100%,rgba(210,200,40,0.75),rgba(150,150,30,0.3) 60%,rgba(0,0,0,0));"></div><div class="a" style="left:1629px;top:1629px;width:2px;height:40px;background:#e8d820;"></div><svg class="a" style="left:0px;top:0px" width="2967" height="1670"><path d="M485.7,1630 v4" stroke="#cfcfcf" stroke-width="1.2"/><path d="M501.5,1630 v4" stroke="#cfcfcf" stroke-width="1.2"/><path d="M517.2,1630 v4" stroke="#cfcfcf" stroke-width="1.2"/><path d="M533.0,1630 v9" stroke="#cfcfcf" stroke-width="1.2"/><path d="M548.8,1630 v4" stroke="#cfcfcf" stroke-width="1.2"/><path d="M564.5,1630 v4" stroke="#cfcfcf" stroke-width="1.2"/><path d="M580.3,1630 v4" stroke="#cfcfcf" stroke-width="1.2"/><path d="M596.1,1630 v4" stroke="#cfcfcf" stroke-width="1.2"/><path d="M611.9,1630 v6" stroke="#cfcfcf" stroke-width="1.2"/><path d="M627.6,1630 v4" stroke="#cfcfcf" stroke-width="1.2"/><path d="M643.4,1630 v4" stroke="#cfcfcf" stroke-width="1.2"/><path d="M659.2,1630 v4" stroke="#cfcfcf" stroke-width="1.2"/><path d="M674.9,1630 v4" stroke="#cfcfcf" stroke-width="1.2"/><path d="M690.7,1630 v9" stroke="#cfcfcf" stroke-width="1.2"/><path d="M706.5,1630 v4" stroke="#cfcfcf" stroke-width="1.2"/><path d="M722.2,1630 v4" stroke="#cfcfcf" stroke-width="1.2"/><path d="M738.0,1630 v4" stroke="#cfcfcf" stroke-width="1.2"/><path d="M753.8,1630 v4" stroke="#cfcfcf" stroke-width="1.2"/><path d="M769.5,1630 v6" stroke="#cfcfcf" stroke-width="1.2"/><path d="M785.3,1630 v4" stroke="#cfcfcf" stroke-width="1.2"/><path d="M801.1,1630 v4" stroke="#cfcfcf" stroke-width="1.2"/><path d="M816.9,1630 v4" stroke="#cfcfcf" stroke-width="1.2"/><path d="M832.6,1630 v4" stroke="#cfcfcf" stroke-width="1.2"/><path d="M848.4,1630 v9" stroke="#cfcfcf" stroke-width="1.2"/><path d="M864.2,1630 v4" stroke="#cfcfcf" stroke-width="1.2"/><path d="M879.9,1630 v4" stroke="#cfcfcf" stroke-width="1.2"/><path d="M895.7,1630 v4" stroke="#cfcfcf" stroke-width="1.2"/><path d="M911.5,1630 v4" stroke="#cfcfcf" stroke-width="1.2"/><path d="M927.2,1630 v6" stroke="#cfcfcf" stroke-width="1.2"/><path d="M943.0,1630 v4" stroke="#cfcfcf" stroke-width="1.2"/><path d="M958.8,1630 v4" stroke="#cfcfcf" stroke-width="1.2"/><path d="M974.6,1630 v4" stroke="#cfcfcf" stroke-width="1.2"/><path d="M990.3,1630 v4" stroke="#cfcfcf" stroke-width="1.2"/><path d="M1006.1,1630 v9" stroke="#cfcfcf" stroke-width="1.2"/><path d="M1021.9,1630 v4" stroke="#cfcfcf" stroke-width="1.2"/><path d="M1037.6,1630 v4" stroke="#cfcfcf" stroke-width="1.2"/><path d="M1053.4,1630 v4" stroke="#cfcfcf" stroke-width="1.2"/><path d="M1069.2,1630 v4" stroke="#cfcfcf" stroke-width="1.2"/><path d="M1084.9,1630 v6" stroke="#cfcfcf" stroke-width="1.2"/><path d="M1100.7,1630 v4" stroke="#cfcfcf" stroke-width="1.2"/><path d="M1116.5,1630 v4" stroke="#cfcfcf" stroke-width="1.2"/><path d="M1132.3,1630 v4" stroke="#cfcfcf" stroke-width="1.2"/><path d="M1148.0,1630 v4" stroke="#cfcfcf" stroke-width="1.2"/><path d="M1163.8,1630 v9" stroke="#cfcfcf" stroke-width="1.2"/><path d="M1179.6,1630 v4" stroke="#cfcfcf" stroke-width="1.2"/><path d="M1195.3,1630 v4" stroke="#cfcfcf" stroke-width="1.2"/><path d="M1211.1,1630 v4" stroke="#cfcfcf" stroke-width="1.2"/><path d="M1226.9,1630 v4" stroke="#cfcfcf" stroke-width="1.2"/><path d="M1242.7,1630 v6" stroke="#cfcfcf" stroke-width="1.2"/><path d="M1258.4,1630 v4" stroke="#cfcfcf" stroke-width="1.2"/><path d="M1274.2,1630 v4" stroke="#cfcfcf" stroke-width="1.2"/><path d="M1290.0,1630 v4" stroke="#cfcfcf" stroke-width="1.2"/><path d="M1305.7,1630 v4" stroke="#cfcfcf" stroke-width="1.2"/><path d="M1321.5,1630 v9" stroke="#cfcfcf" stroke-width="1.2"/><path d="M1337.3,1630 v4" stroke="#cfcfcf" stroke-width="1.2"/><path d="M1353.0,1630 v4" stroke="#cfcfcf" stroke-width="1.2"/><path d="M1368.8,1630 v4" stroke="#cfcfcf" stroke-width="1.2"/><path d="M1384.6,1630 v4" stroke="#cfcfcf" stroke-width="1.2"/><path d="M1400.3,1630 v6" stroke="#cfcfcf" stroke-width="1.2"/><path d="M1416.1,1630 v4" stroke="#cfcfcf" stroke-width="1.2"/><path d="M1431.9,1630 v4" stroke="#cfcfcf" stroke-width="1.2"/><path d="M1447.7,1630 v4" stroke="#cfcfcf" stroke-width="1.2"/><path d="M1463.4,1630 v4" stroke="#cfcfcf" stroke-width="1.2"/><path d="M1479.2,1630 v9" stroke="#cfcfcf" stroke-width="1.2"/><path d="M1495.0,1630 v4" stroke="#cfcfcf" stroke-width="1.2"/><path d="M1510.7,1630 v4" stroke="#cfcfcf" stroke-width="1.2"/><path d="M1526.5,1630 v4" stroke="#cfcfcf" stroke-width="1.2"/><path d="M1542.3,1630 v4" stroke="#cfcfcf" stroke-width="1.2"/><path d="M1558.0,1630 v6" stroke="#cfcfcf" stroke-width="1.2"/><path d="M1573.8,1630 v4" stroke="#cfcfcf" stroke-width="1.2"/><path d="M1589.6,1630 v4" stroke="#cfcfcf" stroke-width="1.2"/><path d="M1605.4,1630 v4" stroke="#cfcfcf" stroke-width="1.2"/><path d="M1621.1,1630 v4" stroke="#cfcfcf" stroke-width="1.2"/><path d="M1636.9,1630 v9" stroke="#cfcfcf" stroke-width="1.2"/><path d="M1652.7,1630 v4" stroke="#cfcfcf" stroke-width="1.2"/><path d="M1668.4,1630 v4" stroke="#cfcfcf" stroke-width="1.2"/><path d="M1684.2,1630 v4" stroke="#cfcfcf" stroke-width="1.2"/><path d="M1700.0,1630 v4" stroke="#cfcfcf" stroke-width="1.2"/><path d="M1715.8,1630 v6" stroke="#cfcfcf" stroke-width="1.2"/><path d="M1731.5,1630 v4" stroke="#cfcfcf" stroke-width="1.2"/><path d="M1747.3,1630 v4" stroke="#cfcfcf" stroke-width="1.2"/><path d="M1763.1,1630 v4" stroke="#cfcfcf" stroke-width="1.2"/><path d="M1778.8,1630 v4" stroke="#cfcfcf" stroke-width="1.2"/><path d="M1794.6,1630 v9" stroke="#cfcfcf" stroke-width="1.2"/><path d="M1810.4,1630 v4" stroke="#cfcfcf" stroke-width="1.2"/><path d="M1826.1,1630 v4" stroke="#cfcfcf" stroke-width="1.2"/><path d="M1841.9,1630 v4" stroke="#cfcfcf" stroke-width="1.2"/><path d="M1857.7,1630 v4" stroke="#cfcfcf" stroke-width="1.2"/><path d="M1873.4,1630 v6" stroke="#cfcfcf" stroke-width="1.2"/><path d="M1889.2,1630 v4" stroke="#cfcfcf" stroke-width="1.2"/><path d="M1905.0,1630 v4" stroke="#cfcfcf" stroke-width="1.2"/><path d="M1920.8,1630 v4" stroke="#cfcfcf" stroke-width="1.2"/><path d="M1936.5,1630 v4" stroke="#cfcfcf" stroke-width="1.2"/><path d="M1952.3,1630 v9" stroke="#cfcfcf" stroke-width="1.2"/><path d="M1968.1,1630 v4" stroke="#cfcfcf" stroke-width="1.2"/><path d="M1983.8,1630 v4" stroke="#cfcfcf" stroke-width="1.2"/><path d="M1999.6,1630 v4" stroke="#cfcfcf" stroke-width="1.2"/><path d="M2015.4,1630 v4" stroke="#cfcfcf" stroke-width="1.2"/><path d="M2031.1,1630 v6" stroke="#cfcfcf" stroke-width="1.2"/><path d="M2046.9,1630 v4" stroke="#cfcfcf" stroke-width="1.2"/><path d="M2062.7,1630 v4" stroke="#cfcfcf" stroke-width="1.2"/><path d="M2078.5,1630 v4" stroke="#cfcfcf" stroke-width="1.2"/><path d="M2094.2,1630 v4" stroke="#cfcfcf" stroke-width="1.2"/><path d="M2110.0,1630 v9" stroke="#cfcfcf" stroke-width="1.2"/><path d="M2125.8,1630 v4" stroke="#cfcfcf" stroke-width="1.2"/><path d="M2141.5,1630 v4" stroke="#cfcfcf" stroke-width="1.2"/><path d="M2157.3,1630 v4" stroke="#cfcfcf" stroke-width="1.2"/><path d="M2173.1,1630 v4" stroke="#cfcfcf" stroke-width="1.2"/><path d="M2188.8,1630 v6" stroke="#cfcfcf" stroke-width="1.2"/><path d="M2204.6,1630 v4" stroke="#cfcfcf" stroke-width="1.2"/><path d="M2220.4,1630 v4" stroke="#cfcfcf" stroke-width="1.2"/><path d="M2236.2,1630 v4" stroke="#cfcfcf" stroke-width="1.2"/><path d="M2251.9,1630 v4" stroke="#cfcfcf" stroke-width="1.2"/><path d="M2267.7,1630 v9" stroke="#cfcfcf" stroke-width="1.2"/><path d="M2283.5,1630 v4" stroke="#cfcfcf" stroke-width="1.2"/><path d="M2299.2,1630 v4" stroke="#cfcfcf" stroke-width="1.2"/><path d="M2315.0,1630 v4" stroke="#cfcfcf" stroke-width="1.2"/><path d="M2330.8,1630 v4" stroke="#cfcfcf" stroke-width="1.2"/><path d="M2346.6,1630 v6" stroke="#cfcfcf" stroke-width="1.2"/><path d="M2362.3,1630 v4" stroke="#cfcfcf" stroke-width="1.2"/><path d="M2378.1,1630 v4" stroke="#cfcfcf" stroke-width="1.2"/><path d="M2393.9,1630 v4" stroke="#cfcfcf" stroke-width="1.2"/><path d="M2409.6,1630 v4" stroke="#cfcfcf" stroke-width="1.2"/><path d="M2425.4,1630 v9" stroke="#cfcfcf" stroke-width="1.2"/><path d="M2441.2,1630 v4" stroke="#cfcfcf" stroke-width="1.2"/><path d="M2456.9,1630 v4" stroke="#cfcfcf" stroke-width="1.2"/><path d="M2472.7,1630 v4" stroke="#cfcfcf" stroke-width="1.2"/><path d="M2488.5,1630 v4" stroke="#cfcfcf" stroke-width="1.2"/><path d="M2504.2,1630 v6" stroke="#cfcfcf" stroke-width="1.2"/><path d="M2520.0,1630 v4" stroke="#cfcfcf" stroke-width="1.2"/><path d="M2535.8,1630 v4" stroke="#cfcfcf" stroke-width="1.2"/><path d="M2551.6,1630 v4" stroke="#cfcfcf" stroke-width="1.2"/><path d="M2567.3,1630 v4" stroke="#cfcfcf" stroke-width="1.2"/><path d="M2583.1,1630 v9" stroke="#cfcfcf" stroke-width="1.2"/><path d="M2598.9,1630 v4" stroke="#cfcfcf" stroke-width="1.2"/><path d="M2614.6,1630 v4" stroke="#cfcfcf" stroke-width="1.2"/><path d="M2630.4,1630 v4" stroke="#cfcfcf" stroke-width="1.2"/><path d="M2646.2,1630 v4" stroke="#cfcfcf" stroke-width="1.2"/><path d="M2661.9,1630 v6" stroke="#cfcfcf" stroke-width="1.2"/><path d="M2677.7,1630 v4" stroke="#cfcfcf" stroke-width="1.2"/><path d="M2693.5,1630 v4" stroke="#cfcfcf" stroke-width="1.2"/><path d="M2709.3,1630 v4" stroke="#cfcfcf" stroke-width="1.2"/><path d="M2725.0,1630 v4" stroke="#cfcfcf" stroke-width="1.2"/><path d="M2740.8,1630 v9" stroke="#cfcfcf" stroke-width="1.2"/><path d="M2756.6,1630 v4" stroke="#cfcfcf" stroke-width="1.2"/><path d="M2772.3,1630 v4" stroke="#cfcfcf" stroke-width="1.2"/></svg><div class="t s" style="left:509.5px;top:1640.5px;font-size:21px;line-height:25px;color:#b4b4b4;transform:scaleX(0.895);transform-origin:0 50%;">6.500</div><div class="t s" style="left:667.2px;top:1640.5px;font-size:21px;line-height:25px;color:#b4b4b4;transform:scaleX(0.895);transform-origin:0 50%;">6.510</div><div class="t s" style="left:824.9px;top:1640.5px;font-size:21px;line-height:25px;color:#b4b4b4;transform:scaleX(0.895);transform-origin:0 50%;">6.520</div><div class="t s" style="left:982.6px;top:1640.5px;font-size:21px;line-height:25px;color:#b4b4b4;transform:scaleX(0.895);transform-origin:0 50%;">6.530</div><div class="t s" style="left:1140.3px;top:1640.5px;font-size:21px;line-height:25px;color:#b4b4b4;transform:scaleX(0.895);transform-origin:0 50%;">6.540</div><div class="t s" style="left:1298.0px;top:1640.5px;font-size:21px;line-height:25px;color:#b4b4b4;transform:scaleX(0.895);transform-origin:0 50%;">6.550</div><div class="t s" style="left:1455.7px;top:1640.5px;font-size:21px;line-height:25px;color:#b4b4b4;transform:scaleX(0.895);transform-origin:0 50%;">6.560</div><div class="t s" style="left:1613.4px;top:1640.5px;font-size:21px;line-height:25px;color:#b4b4b4;transform:scaleX(0.895);transform-origin:0 50%;">6.570</div><div class="t s" style="left:1771.1px;top:1640.5px;font-size:21px;line-height:25px;color:#b4b4b4;transform:scaleX(0.895);transform-origin:0 50%;">6.580</div><div class="t s" style="left:1928.8px;top:1640.5px;font-size:21px;line-height:25px;color:#b4b4b4;transform:scaleX(0.895);transform-origin:0 50%;">6.590</div><div class="t s" style="left:2086.5px;top:1640.5px;font-size:21px;line-height:25px;color:#b4b4b4;transform:scaleX(0.895);transform-origin:0 50%;">6.600</div><div class="t s" style="left:2244.2px;top:1640.5px;font-size:21px;line-height:25px;color:#b4b4b4;transform:scaleX(0.895);transform-origin:0 50%;">6.610</div><div class="t s" style="left:2401.9px;top:1640.5px;font-size:21px;line-height:25px;color:#b4b4b4;transform:scaleX(0.895);transform-origin:0 50%;">6.620</div><div class="t s" style="left:2559.6px;top:1640.5px;font-size:21px;line-height:25px;color:#b4b4b4;transform:scaleX(0.895);transform-origin:0 50%;">6.630</div><div class="t s" style="left:2717.3px;top:1640.5px;font-size:21px;line-height:25px;color:#b4b4b4;transform:scaleX(0.895);transform-origin:0 50%;">6.640</div><div class="a" style="left:1051px;top:1628px;width:2px;height:42px;background:#ddd;"></div><div class="a" style="left:434px;top:1630px;width:38px;height:38px;background:linear-gradient(#f4f4f4,#dedede);border:1px solid #b8b8b8;box-sizing:border-box;"></div><svg class="a" style="left:434px;top:1630px" width="38" height="38"><circle cx="19" cy="19" r="11" fill="none" stroke="#333" stroke-width="2"/><path d="M20,13 l-6,6 l6,6 z M26,13 l-6,6 l6,6 z" fill="#333"/></svg><div class="a" style="left:2787px;top:1630px;width:57px;height:38px;background:linear-gradient(#f4f4f4,#dedede);border:1px solid #b8b8b8;box-sizing:border-box;"></div><div class="a" style="left:2847px;top:1630px;width:77px;height:38px;background:linear-gradient(#f4f4f4,#dedede);border:1px solid #b8b8b8;box-sizing:border-box;"></div><div class="a" style="left:2927px;top:1630px;width:39px;height:38px;background:linear-gradient(#f4f4f4,#dedede);border:1px solid #b8b8b8;box-sizing:border-box;"></div><svg class="a" style="left:2787px;top:1630px" width="180" height="38"><rect x="15" y="14" width="26" height="14" rx="2" fill="none" stroke="#333" stroke-width="2"/><path d="M19,19 h18 M19,23 h18" stroke="#333" stroke-dasharray="2 1.5"/><path d="M28,14 q0,-5 6,-7" stroke="#333" fill="none"/><path d="M125,14 l6,5 l-6,5 z" fill="#888"/><circle cx="160" cy="19" r="11" fill="none" stroke="#333" stroke-width="2"/><path d="M155,13 l6,6 l-6,6 z M161,13 l6,6 l-6,6 z" fill="#333"/></svg><div class="t s" style="left:2870.0px;top:1639.0px;font-size:19px;line-height:22px;color:#222;">x2</div><div class="a" style="left:2967px;top:207px;width:59px;height:1463px;background:#000;"></div><div class="a" style="left:2968px;top:208px;width:58px;height:42px;background:linear-gradient(#2e2e2e,#1a1a1a);border:1px solid #444;box-sizing:border-box;"></div><div class="t s" style="left:2980.0px;top:219.0px;font-size:17px;line-height:20px;color:#e8e8e8;transform:scaleX(0.972);transform-origin:0 50%;">Auto</div><div class="a" style="left:2970px;top:949px;width:54px;height:400px;background:linear-gradient(#ff2a6a 0%,#ff1010 12%,#ff6a00 25%,#ffd000 37%,#a0ff00 45%,#00e040 52%,#00e0c0 62%,#0090ff 72%,#1010ff 82%,#101060 92%,#000010 100%);"></div><div class="a" style="left:2970px;top:1348px;width:54px;height:2px;background:#ddd;"></div><div class="t s" style="left:2987.9px;top:331.0px;font-size:14px;line-height:16px;color:#bcbcbc;transform:scaleX(0.900);transform-origin:0 50%;">-10</div><div class="t s" style="left:2987.9px;top:419.6px;font-size:14px;line-height:16px;color:#bcbcbc;transform:scaleX(0.900);transform-origin:0 50%;">-20</div><div class="t s" style="left:2987.9px;top:508.2px;font-size:14px;line-height:16px;color:#bcbcbc;transform:scaleX(0.900);transform-origin:0 50%;">-30</div><div class="t s" style="left:2987.9px;top:596.8px;font-size:14px;line-height:16px;color:#bcbcbc;transform:scaleX(0.900);transform-origin:0 50%;">-40</div><div class="t s" style="left:2987.9px;top:685.4px;font-size:14px;line-height:16px;color:#bcbcbc;transform:scaleX(0.900);transform-origin:0 50%;">-50</div><div class="t s" style="left:2987.9px;top:774.0px;font-size:14px;line-height:16px;color:#bcbcbc;transform:scaleX(0.900);transform-origin:0 50%;">-60</div><div class="t s" style="left:2987.9px;top:862.6px;font-size:14px;line-height:16px;color:#bcbcbc;transform:scaleX(0.900);transform-origin:0 50%;">-70</div><div class="a" style="left:2976px;top:947.1999999999999px;width:42px;height:24px;background:#70102a;border-radius:4px;opacity:0.9;"></div><div class="t s" style="left:2987.9px;top:951.2px;font-size:14px;line-height:16px;color:#bcbcbc;transform:scaleX(0.900);transform-origin:0 50%;">-80</div><div class="a" style="left:2976px;top:1035.8px;width:42px;height:24px;background:#703008;border-radius:4px;opacity:0.9;"></div><div class="t s" style="left:2987.9px;top:1039.8px;font-size:14px;line-height:16px;color:#bcbcbc;transform:scaleX(0.900);transform-origin:0 50%;">-90</div><div class="a" style="left:2976px;top:1124.4px;width:42px;height:24px;background:#306010;border-radius:4px;opacity:0.9;"></div><div class="t s" style="left:2984.4px;top:1128.4px;font-size:14px;line-height:16px;color:#bcbcbc;transform:scaleX(0.900);transform-origin:0 50%;">-100</div><div class="a" style="left:2976px;top:1213.0px;width:42px;height:24px;background:#0a5a6a;border-radius:4px;opacity:0.9;"></div><div class="t s" style="left:2984.9px;top:1217.0px;font-size:14px;line-height:16px;color:#bcbcbc;transform:scaleX(0.900);transform-origin:0 50%;">-110</div><div class="a" style="left:2976px;top:1301.6px;width:42px;height:24px;background:#10104a;border-radius:4px;opacity:0.9;"></div><div class="t s" style="left:2984.4px;top:1305.6px;font-size:14px;line-height:16px;color:#bcbcbc;transform:scaleX(0.900);transform-origin:0 50%;">-120</div><div class="t s" style="left:2984.4px;top:1394.2px;font-size:14px;line-height:16px;color:#bcbcbc;transform:scaleX(0.900);transform-origin:0 50%;">-130</div><div class="t s" style="left:2984.4px;top:1482.8px;font-size:14px;line-height:16px;color:#bcbcbc;transform:scaleX(0.900);transform-origin:0 50%;">-140</div><div class="t s" style="left:2984.4px;top:1571.4px;font-size:14px;line-height:16px;color:#bcbcbc;transform:scaleX(0.900);transform-origin:0 50%;">-150</div><div class="a" style="left:3031px;top:240px;width:423px;height:1823px;background:#f0f0f0;"></div><div class="a" style="left:3031px;top:208px;width:423px;height:32px;background:#bcc3cc;"></div><div class="t s" style="left:3035.0px;top:214.0px;font-size:17px;line-height:20px;color:#505050;">Transmit</div><svg class="a" style="left:3410px;top:208px" width="44" height="32"><path d="M3,13.0 h14 l-7,7 z" fill="#808080"/><path d="M26,10.0 l12,12 M38,10.0 l-12,12" stroke="#808080" stroke-width="2"/></svg><div class="a" style="left:3026px;top:207px;width:5px;height:1857px;background:#e3e6ea;"></div><div class="a" style="left:3454px;top:207px;width:5px;height:1857px;background:#e3e6ea;"></div><div class="a" style="left:3031px;top:240px;width:423px;height:385px;background:#000;"></div><div class="t s" style="left:3036.0px;top:242.0px;font-size:19px;line-height:22px;color:#e8d44c;transform:scaleX(0.782);transform-origin:0 50%;">TX</div><div class="t s" style="left:3335.0px;top:242.0px;font-size:19px;line-height:22px;color:#e8d44c;transform:scaleX(0.947);transform-origin:0 50%;">100 - 2700 Hz</div><div class="t s" style="left:3043.7px;top:277.5px;font-size:43px;line-height:51px;color:#474747;">0</div><div class="t s" style="left:3069.1px;top:277.5px;font-size:43px;line-height:51px;color:#474747;">0</div><div class="t s" style="left:3100.4px;top:277.5px;font-size:43px;line-height:51px;color:#474747;">.</div><div class="t s" style="left:3119.8px;top:277.5px;font-size:43px;line-height:51px;color:#474747;">0</div><div class="t s" style="left:3145.2px;top:277.5px;font-size:43px;line-height:51px;color:#474747;">0</div><div class="t s" style="left:3170.5px;top:277.5px;font-size:43px;line-height:51px;color:#fff;">6</div><div class="t s" style="left:3201.9px;top:277.5px;font-size:43px;line-height:51px;color:#fff;">.</div><div class="t s" style="left:3221.2px;top:277.5px;font-size:43px;line-height:51px;color:#fff;">5</div><div class="t s" style="left:3246.6px;top:277.5px;font-size:43px;line-height:51px;color:#fff;">6</div><div class="t s" style="left:3272.0px;top:277.5px;font-size:43px;line-height:51px;color:#fff;">8</div><div class="t s" style="left:3303.3px;top:277.5px;font-size:43px;line-height:51px;color:#fff;">.</div><div class="t s" style="left:3322.7px;top:277.5px;font-size:43px;line-height:51px;color:#fff;">0</div><div class="t s" style="left:3348.0px;top:277.5px;font-size:43px;line-height:51px;color:#fff;">0</div><div class="t s" style="left:3373.4px;top:277.5px;font-size:43px;line-height:51px;color:#fff;">0</div><div class="a" style="left:3045px;top:363px;width:104px;height:33px;background:linear-gradient(#3e3e3e 0%,#303030 44%,#3a3a3a 49%,#000 51%,#000 100%);border:1px solid #5c5c5c;box-sizing:border-box;"></div><div class="a" style="left:3046px;top:379px;width:102px;height:15px;background:radial-gradient(ellipse 50% 70% at 50% 100%,#e8e030 0%,#8a8410 55%,rgba(0,0,0,0) 100%);"></div><div class="t s" style="left:3064.9px;top:369.5px;font-size:17px;line-height:20px;color:#fff;font-weight:bold;transform:scaleX(0.930);transform-origin:0 50%;">Sync RX</div><div class="a" style="left:3162px;top:363px;width:103px;height:33px;background:linear-gradient(#3e3e3e 0%,#303030 44%,#3a3a3a 49%,#000 51%,#000 100%);border:1px solid #5c5c5c;box-sizing:border-box;"></div><div class="t s" style="left:3180.3px;top:369.5px;font-size:17px;line-height:20px;color:#8a8a8a;transform:scaleX(0.930);transform-origin:0 50%;">RX ► TX</div><div class="a" style="left:3270px;top:363px;width:104px;height:33px;background:linear-gradient(#3e3e3e 0%,#303030 44%,#3a3a3a 49%,#000 51%,#000 100%);border:1px solid #5c5c5c;box-sizing:border-box;"></div><div class="t s" style="left:3288.7px;top:369.5px;font-size:17px;line-height:20px;color:#8a8a8a;transform:scaleX(0.930);transform-origin:0 50%;">TX ► RX</div><div class="a" style="left:3045px;top:423px;width:104px;height:33px;background:linear-gradient(#3e3e3e 0%,#303030 44%,#3a3a3a 49%,#000 51%,#000 100%);border:1px solid #5c5c5c;box-sizing:border-box;"></div><div class="a" style="left:3046px;top:439px;width:102px;height:15px;background:radial-gradient(ellipse 50% 70% at 50% 100%,#e8e030 0%,#8a8410 55%,rgba(0,0,0,0) 100%);"></div><div class="t s" style="left:3064.9px;top:429.5px;font-size:17px;line-height:20px;color:#fff;font-weight:bold;transform:scaleX(0.930);transform-origin:0 50%;">Sync RX</div><div class="a" style="left:3162px;top:423px;width:45px;height:33px;background:linear-gradient(#3e3e3e 0%,#303030 44%,#3a3a3a 49%,#000 51%,#000 100%);border:1px solid #5c5c5c;box-sizing:border-box;"></div><div class="t s" style="left:3169.6px;top:429.5px;font-size:17px;line-height:20px;color:#8a8a8a;transform:scaleX(0.930);transform-origin:0 50%;">LSB</div><div class="a" style="left:3211px;top:423px;width:45px;height:33px;background:linear-gradient(#3e3e3e 0%,#303030 44%,#3a3a3a 49%,#000 51%,#000 100%);border:1px solid #5c5c5c;box-sizing:border-box;"></div><div class="t s" style="left:3233.5px;top:429.5px;font-size:17px;line-height:20px;color:#8a8a8a;"></div><div class="a" style="left:3261px;top:423px;width:45px;height:33px;background:linear-gradient(#3e3e3e 0%,#303030 44%,#3a3a3a 49%,#000 51%,#000 100%);border:1px solid #5c5c5c;box-sizing:border-box;"></div><div class="t s" style="left:3271.6px;top:429.5px;font-size:17px;line-height:20px;color:#8a8a8a;transform:scaleX(0.930);transform-origin:0 50%;">AM</div><div class="a" style="left:3310px;top:423px;width:45px;height:33px;background:linear-gradient(#3e3e3e 0%,#303030 44%,#3a3a3a 49%,#000 51%,#000 100%);border:1px solid #5c5c5c;box-sizing:border-box;"></div><div class="t s" style="left:3321.1px;top:429.5px;font-size:17px;line-height:20px;color:#8a8a8a;transform:scaleX(0.930);transform-origin:0 50%;">FM</div><div class="a" style="left:3360px;top:423px;width:45px;height:33px;background:linear-gradient(#3e3e3e 0%,#303030 44%,#3a3a3a 49%,#000 51%,#000 100%);border:1px solid #5c5c5c;box-sizing:border-box;"></div><div class="t s" style="left:3369.3px;top:429.5px;font-size:17px;line-height:20px;color:#8a8a8a;transform:scaleX(0.930);transform-origin:0 50%;">CW</div><div class="a" style="left:3212px;top:440px;width:43px;height:15px;background:radial-gradient(ellipse 50% 80% at 50% 100%,rgba(200,200,40,0.8),rgba(0,0,0,0));"></div><div class="t s" style="left:3217.5px;top:430.0px;font-size:17px;line-height:20px;color:#9a9a9a;transform:scaleX(0.915);transform-origin:0 50%;">USB</div><div class="a" style="left:3045px;top:480px;width:90px;height:75px;background:linear-gradient(#4c4c4c 0%,#333 40%,#1c1c1c 45%,#000 52%,#000 100%);border:1px solid #5c5c5c;box-sizing:border-box;"></div><div class="t s" style="left:3076.0px;top:504.0px;font-size:22px;line-height:26px;color:#fff;">TX</div><div class="a" style="left:3148px;top:480px;width:68px;height:32px;background:linear-gradient(#3e3e3e 0%,#303030 44%,#3a3a3a 49%,#000 51%,#000 100%);border:1px solid #5c5c5c;box-sizing:border-box;"></div><div class="t s" style="left:3164.9px;top:486.0px;font-size:17px;line-height:20px;color:#d8d8d8;transform:scaleX(0.930);transform-origin:0 50%;">Tone</div><div class="a" style="left:3220px;top:480px;width:68px;height:32px;background:linear-gradient(#3e3e3e 0%,#303030 44%,#3a3a3a 49%,#000 51%,#000 100%);border:1px solid #5c5c5c;box-sizing:border-box;"></div><div class="t s" style="left:3236.3px;top:486.0px;font-size:17px;line-height:20px;color:#d8d8d8;transform:scaleX(0.930);transform-origin:0 50%;">Tune</div><div class="a" style="left:3292px;top:480px;width:35px;height:32px;background:linear-gradient(#3e3e3e 0%,#303030 44%,#3a3a3a 49%,#000 51%,#000 100%);border:1px solid #5c5c5c;box-sizing:border-box;"></div><div class="t s" style="left:3301.2px;top:486.0px;font-size:17px;line-height:20px;color:#d8d8d8;transform:scaleX(0.930);transform-origin:0 50%;">•••</div><div class="t m" style="left:3162.0px;top:525.0px;font-size:17px;line-height:20px;color:#6a6a6a;transform:scaleX(0.907);transform-origin:0 50%;">Proc VOX</div><div class="t s" style="left:3054.0px;top:585.5px;font-size:18px;line-height:21px;color:#f0f0f0;transform:scaleX(0.928);transform-origin:0 50%;">Drive</div><div class="a" style="left:3112px;top:595px;width:233px;height:4px;background:#9a9a9a;border-radius:2px;"></div><div class="a" style="left:3125px;top:581px;width:20px;height:28px;background:linear-gradient(90deg,#cfcfcf,#8a8a8a);border:1px solid #777;border-radius:3px;box-sizing:border-box;"></div><div class="a" style="left:3132px;top:588px;width:1px;height:14px;background:#555;"></div><div class="a" style="left:3136px;top:588px;width:1px;height:14px;background:#555;"></div><div class="t s" style="left:3383.0px;top:586.5px;font-size:18px;line-height:21px;color:#f0f0f0;transform:scaleX(0.849);transform-origin:0 50%;">10</div><div class="a" style="left:3031px;top:625px;width:423px;height:26px;background:linear-gradient(90deg,#f2f2f2 0%,#e6e6e6 40%,#e2e2e2 70%,#ececec 100%);"></div><div class="t s" style="left:3036.0px;top:629.0px;font-size:17px;line-height:20px;color:#333;font-weight:bold;">Meter</div><svg class="a" style="left:3433px;top:633.0px" width="14" height="10"><path d="M1,8 h12 l-6,-6 z" fill="#999"/></svg><div class="a" style="left:3031px;top:651px;width:423px;height:240px;background:#000;"></div><svg class="a" style="left:3031px;top:651px" width="423" height="240"><text x="12" y="32" font-size="16" font-style="italic" font-family="Liberation Sans" fill="#f4f4f4" textLength="29" lengthAdjust="spacingAndGlyphs">PWR</text><path d="M59,26 H410" stroke="#cfcfcf" stroke-width="2.5"/><path d="M59,26 v-4" stroke="#cfcfcf" stroke-width="2"/><text x="59" y="44" font-size="13" font-style="italic" font-family="Liberation Mono" font-weight="bold" fill="#e8e8e8" text-anchor="start">0</text><path d="M176,26 v-4" stroke="#cfcfcf" stroke-width="2"/><text x="176" y="44" font-size="13" font-style="italic" font-family="Liberation Mono" font-weight="bold" fill="#e8e8e8" text-anchor="middle">1</text><path d="M293,26 v-4" stroke="#cfcfcf" stroke-width="2"/><text x="287" y="44" font-size="13" font-style="italic" font-family="Liberation Mono" font-weight="bold" fill="#e8e8e8" text-anchor="start">2 W</text><text x="12" y="78" font-size="16" font-style="italic" font-family="Liberation Sans" fill="#f4f4f4" textLength="29" lengthAdjust="spacingAndGlyphs">SWR</text><path d="M59,72 H410" stroke="#cfcfcf" stroke-width="2.5"/><path d="M59,72 v-4" stroke="#cfcfcf" stroke-width="2"/><text x="59" y="90" font-size="13" font-style="italic" font-family="Liberation Mono" font-weight="bold" fill="#e8e8e8" text-anchor="start">1</text><path d="M114,72 v-4" stroke="#cfcfcf" stroke-width="2"/><text x="114" y="90" font-size="13" font-style="italic" font-family="Liberation Mono" font-weight="bold" fill="#e8e8e8" text-anchor="middle">1.1</text><path d="M183,72 v-4" stroke="#cfcfcf" stroke-width="2"/><text x="183" y="90" font-size="13" font-style="italic" font-family="Liberation Mono" font-weight="bold" fill="#e8e8e8" text-anchor="middle">1.5</text><path d="M234,72 v-4" stroke="#cfcfcf" stroke-width="2"/><text x="234" y="90" font-size="13" font-style="italic" font-family="Liberation Mono" font-weight="bold" fill="#e8e8e8" text-anchor="middle">2</text><path d="M307,72 v-4" stroke="#cfcfcf" stroke-width="2"/><text x="307" y="90" font-size="13" font-style="italic" font-family="Liberation Mono" font-weight="bold" fill="#e8e8e8" text-anchor="middle">3</text><path d="M363,72 v-4" stroke="#cfcfcf" stroke-width="2"/><text x="363" y="90" font-size="13" font-style="italic" font-family="Liberation Mono" font-weight="bold" fill="#e8e8e8" text-anchor="middle">4</text><text x="12" y="124" font-size="16" font-style="italic" font-family="Liberation Sans" fill="#f4f4f4" textLength="29" lengthAdjust="spacingAndGlyphs">DRV</text><path d="M59,118 H410" stroke="#cfcfcf" stroke-width="2.5"/><path d="M59,118 v-4" stroke="#cfcfcf" stroke-width="2"/><text x="59" y="136" font-size="13" font-style="italic" font-family="Liberation Mono" font-weight="bold" fill="#e8e8e8" text-anchor="start">0</text><path d="M129,118 v-4" stroke="#cfcfcf" stroke-width="2"/><text x="129" y="136" font-size="13" font-style="italic" font-family="Liberation Mono" font-weight="bold" fill="#e8e8e8" text-anchor="middle">25</text><path d="M199,118 v-4" stroke="#cfcfcf" stroke-width="2"/><text x="199" y="136" font-size="13" font-style="italic" font-family="Liberation Mono" font-weight="bold" fill="#e8e8e8" text-anchor="middle">50</text><path d="M269,118 v-4" stroke="#cfcfcf" stroke-width="2"/><text x="269" y="136" font-size="13" font-style="italic" font-family="Liberation Mono" font-weight="bold" fill="#e8e8e8" text-anchor="middle">75</text><path d="M339,118 v-4" stroke="#cfcfcf" stroke-width="2"/><text x="333" y="136" font-size="13" font-style="italic" font-family="Liberation Mono" font-weight="bold" fill="#e8e8e8" text-anchor="start">100 mW</text><text x="12" y="170" font-size="16" font-style="italic" font-family="Liberation Sans" fill="#f4f4f4" textLength="29" lengthAdjust="spacingAndGlyphs">VDD</text><path d="M59,164 H410" stroke="#cfcfcf" stroke-width="2.5"/><path d="M59,164 v-4" stroke="#cfcfcf" stroke-width="2"/><text x="59" y="182" font-size="13" font-style="italic" font-family="Liberation Mono" font-weight="bold" fill="#e8e8e8" text-anchor="start">12</text><path d="M129,164 v-4" stroke="#cfcfcf" stroke-width="2"/><text x="129" y="182" font-size="13" font-style="italic" font-family="Liberation Mono" font-weight="bold" fill="#e8e8e8" text-anchor="middle">13</text><path d="M199,164 v-4" stroke="#cfcfcf" stroke-width="2"/><text x="199" y="182" font-size="13" font-style="italic" font-family="Liberation Mono" font-weight="bold" fill="#e8e8e8" text-anchor="middle">14</text><path d="M269,164 v-4" stroke="#cfcfcf" stroke-width="2"/><text x="269" y="182" font-size="13" font-style="italic" font-family="Liberation Mono" font-weight="bold" fill="#e8e8e8" text-anchor="middle">15</text><path d="M339,164 v-4" stroke="#cfcfcf" stroke-width="2"/><text x="333" y="182" font-size="13" font-style="italic" font-family="Liberation Mono" font-weight="bold" fill="#e8e8e8" text-anchor="start">16 V</text><rect x="60.0" y="148" width="4.4" height="10" fill="#d8d8b0"/><rect x="65.9" y="148" width="4.4" height="10" fill="#dadaac"/><rect x="71.8" y="148" width="4.4" height="10" fill="#dcdca8"/><rect x="77.7" y="148" width="4.4" height="10" fill="#dedea4"/><rect x="83.6" y="148" width="4.4" height="10" fill="#e0e0a0"/><rect x="89.5" y="148" width="4.4" height="10" fill="#e2e29c"/><rect x="95.4" y="148" width="4.4" height="10" fill="#e4e498"/><rect x="101.3" y="148" width="4.4" height="10" fill="#e6e694"/><rect x="107.2" y="148" width="4.4" height="10" fill="#e8e890"/><rect x="113.1" y="148" width="4.4" height="10" fill="#eaea8c"/><rect x="119.0" y="148" width="4.4" height="10" fill="#ecec88"/><rect x="124.9" y="148" width="4.4" height="10" fill="#ecec84"/><rect x="130.8" y="148" width="4.4" height="10" fill="#ecec80"/><rect x="136.7" y="148" width="4.4" height="10" fill="#ecec7c"/><rect x="142.6" y="148" width="4.4" height="10" fill="#ecec78"/><rect x="148.5" y="148" width="4.4" height="10" fill="#ecec74"/><rect x="154.4" y="148" width="4.4" height="10" fill="#ecec70"/><rect x="160.3" y="148" width="4.4" height="10" fill="#ecec70"/><rect x="166.2" y="148" width="4.4" height="10" fill="#ecec70"/><path d="M185,144 v20" stroke="#ddd" stroke-width="2"/><text x="12" y="216" font-size="16" font-style="italic" font-family="Liberation Sans" fill="#f4f4f4" textLength="29" lengthAdjust="spacingAndGlyphs">ALC</text><path d="M59,210 H410" stroke="#cfcfcf" stroke-width="2.5"/><path d="M59,210 v-4" stroke="#cfcfcf" stroke-width="2"/><text x="59" y="228" font-size="13" font-style="italic" font-family="Liberation Mono" font-weight="bold" fill="#e8e8e8" text-anchor="start">0</text><path d="M119,210 v-4" stroke="#cfcfcf" stroke-width="2"/><text x="119" y="228" font-size="13" font-style="italic" font-family="Liberation Mono" font-weight="bold" fill="#e8e8e8" text-anchor="middle">25</text><path d="M180,210 v-4" stroke="#cfcfcf" stroke-width="2"/><text x="180" y="228" font-size="13" font-style="italic" font-family="Liberation Mono" font-weight="bold" fill="#e8e8e8" text-anchor="middle">50</text><path d="M240,210 v-4" stroke="#cfcfcf" stroke-width="2"/><text x="240" y="228" font-size="13" font-style="italic" font-family="Liberation Mono" font-weight="bold" fill="#e8e8e8" text-anchor="middle">75</text><path d="M301,210 v-4" stroke="#cfcfcf" stroke-width="2"/><text x="301" y="228" font-size="13" font-style="italic" font-family="Liberation Mono" font-weight="bold" fill="#e8e8e8" text-anchor="middle">100</text><path d="M361,210 v-4" stroke="#cfcfcf" stroke-width="2"/><text x="361" y="228" font-size="13" font-style="italic" font-family="Liberation Mono" font-weight="bold" fill="#e8e8e8" text-anchor="middle">125</text><rect x="240" y="207" width="121" height="4" fill="#e01010"/><path d="M301,193 v17" stroke="#ddd" stroke-width="2"/></svg><div class="a" style="left:3031px;top:891px;width:423px;height:26px;background:linear-gradient(90deg,#f2f2f2 0%,#e6e6e6 40%,#e2e2e2 70%,#ececec 100%);"></div><div class="t s" style="left:3036.0px;top:895.0px;font-size:17px;line-height:20px;color:#333;font-weight:bold;">Microphone: Gain 45, Proc 10, VOX</div><svg class="a" style="left:3433px;top:899.0px" width="14" height="10"><path d="M1,8 h12 l-6,-6 z" fill="#999"/></svg><div class="a" style="left:3037px;top:923px;width:119px;height:35px;background:#e1e1e1;border:1px solid #adadad;box-sizing:border-box;"></div><div class="t s" style="left:3070.5px;top:930.5px;font-size:17px;line-height:20px;color:#222;transform:scaleX(0.950);transform-origin:0 50%;">Normal</div><div class="a" style="left:3163px;top:923px;width:119px;height:35px;background:#e1e1e1;border:1px solid #adadad;box-sizing:border-box;"></div><div class="t s" style="left:3211.3px;top:930.5px;font-size:17px;line-height:20px;color:#222;transform:scaleX(0.950);transform-origin:0 50%;">DX</div><div class="a" style="left:3289px;top:923px;width:119px;height:35px;background:#cce4f7;border:1px solid #2f78c0;box-sizing:border-box;"></div><div class="t s" style="left:3328.3px;top:930.5px;font-size:17px;line-height:20px;color:#222;transform:scaleX(0.950);transform-origin:0 50%;">Other</div><div class="a" style="left:3037px;top:975px;width:52px;height:36px;background:#e1e1e1;border:1px solid #adadad;box-sizing:border-box;"></div><svg class="a" style="left:3037px;top:975px" width="52" height="36"><path d="M18,28 l10,-10" stroke="#888" stroke-width="3"/><circle cx="31" cy="14" r="5" fill="#777"/></svg><div class="a" style="left:3095px;top:975px;width:317px;height:36px;background:#e1e1e1;border:1px solid #adadad;box-sizing:border-box;"></div><div class="t s" style="left:3097.0px;top:982.5px;font-size:18px;line-height:21px;color:#111;transform:scaleX(0.873);transform-origin:0 50%;">Hi-Fi Cable Output (VB-Audio Hi-Fi Cab...</div><svg class="a" style="left:3392px;top:988px" width="16" height="12"><path d="M1,1 h14 l-7,8 z" fill="#777"/></svg><div class="a" style="left:3037px;top:1018px;width:52px;height:35px;background:#cce4f7;border:1px solid #2f78c0;box-sizing:border-box;"></div><div class="t s" style="left:3046.4px;top:1025.5px;font-size:17px;line-height:20px;color:#222;transform:scaleX(0.950);transform-origin:0 50%;">Proc</div><div class="a" style="left:3095px;top:1018px;width:52px;height:35px;background:#cce4f7;border:1px solid #2f78c0;box-sizing:border-box;"></div><div class="t s" style="left:3103.9px;top:1025.5px;font-size:17px;line-height:20px;color:#222;transform:scaleX(0.950);transform-origin:0 50%;">VOX</div><div class="a" style="left:3154px;top:1018px;width:147px;height:35px;background:#e1e1e1;border:1px solid #adadad;box-sizing:border-box;"></div><div class="t s" style="left:3190.0px;top:1026.0px;font-size:17px;line-height:20px;color:#111;transform:scaleX(0.945);transform-origin:0 50%;">2.6kHz</div><svg class="a" style="left:3280px;top:1031px" width="16" height="12"><path d="M1,1 h14 l-7,8 z" fill="#777"/></svg><div class="a" style="left:3307px;top:1018px;width:105px;height:35px;background:#e1e1e1;border:1px solid #adadad;box-sizing:border-box;"></div><svg class="a" style="left:3312px;top:1022px" width="28" height="28"><circle cx="14" cy="14" r="11" fill="#fff" stroke="#333" stroke-width="1.5"/><circle cx="14" cy="14" r="4.5" fill="#e01818"/></svg><div class="t s" style="left:3349.0px;top:1026.0px;font-size:17px;line-height:20px;color:#111;transform:scaleX(0.949);transform-origin:0 50%;">Record</div><div class="t s" style="left:3045.0px;top:1085.0px;font-size:17px;line-height:20px;color:#111;transform:scaleX(0.950);transform-origin:0 50%;">Gain</div><div class="a" style="left:3103px;top:1095px;width:255px;height:6px;background:#e8e8e8;border:1px solid #c4c4c4;border-radius:3px;box-sizing:border-box;"></div><div class="a" style="left:3103px;top:1095px;width:105px;height:6px;background:#cfcfcf;border:1px solid #bdbdbd;border-radius:3px;box-sizing:border-box;"></div><div class="a" style="left:3208px;top:1085px;width:20px;height:27px;background:linear-gradient(90deg,#f4f4f4,#dcdcdc);border:1px solid #a6a6a6;border-radius:3px;box-sizing:border-box;"></div><div class="a" style="left:3215px;top:1091px;width:1px;height:14px;background:#b0b0b0;"></div><div class="a" style="left:3219px;top:1091px;width:1px;height:14px;background:#b0b0b0;"></div><div class="t s" style="left:3395.0px;top:1086.0px;font-size:17px;line-height:20px;color:#111;transform:scaleX(0.950);transform-origin:0 50%;">45</div><div class="t s" style="left:3045.0px;top:1128.0px;font-size:17px;line-height:20px;color:#111;transform:scaleX(0.950);transform-origin:0 50%;">Proc</div><div class="a" style="left:3103px;top:1138px;width:255px;height:6px;background:#e8e8e8;border:1px solid #c4c4c4;border-radius:3px;box-sizing:border-box;"></div><div class="a" style="left:3103px;top:1138px;width:16px;height:6px;background:#cfcfcf;border:1px solid #bdbdbd;border-radius:3px;box-sizing:border-box;"></div><div class="a" style="left:3119px;top:1128px;width:20px;height:27px;background:linear-gradient(90deg,#f4f4f4,#dcdcdc);border:1px solid #a6a6a6;border-radius:3px;box-sizing:border-box;"></div><div class="a" style="left:3126px;top:1134px;width:1px;height:14px;background:#b0b0b0;"></div><div class="a" style="left:3130px;top:1134px;width:1px;height:14px;background:#b0b0b0;"></div><div class="t s" style="left:3395.0px;top:1129.0px;font-size:17px;line-height:20px;color:#111;transform:scaleX(0.950);transform-origin:0 50%;">10</div><div class="t s" style="left:3045.0px;top:1184.0px;font-size:17px;line-height:20px;color:#111;transform:scaleX(0.950);transform-origin:0 50%;">VOX Gain</div><div class="a" style="left:3142px;top:1194px;width:216px;height:6px;background:#e8e8e8;border:1px solid #c4c4c4;border-radius:3px;box-sizing:border-box;"></div><div class="a" style="left:3142px;top:1184px;width:20px;height:27px;background:linear-gradient(90deg,#f4f4f4,#dcdcdc);border:1px solid #a6a6a6;border-radius:3px;box-sizing:border-box;"></div><div class="a" style="left:3149px;top:1190px;width:1px;height:14px;background:#b0b0b0;"></div><div class="a" style="left:3153px;top:1190px;width:1px;height:14px;background:#b0b0b0;"></div><div class="t s" style="left:3404.0px;top:1185.0px;font-size:17px;line-height:20px;color:#111;transform:scaleX(0.950);transform-origin:0 50%;">2</div><div class="t s" style="left:3045.0px;top:1226.0px;font-size:17px;line-height:20px;color:#111;transform:scaleX(0.950);transform-origin:0 50%;">VOX Hang</div><div class="a" style="left:3139px;top:1236px;width:219px;height:6px;background:#e8e8e8;border:1px solid #c4c4c4;border-radius:3px;box-sizing:border-box;"></div><div class="a" style="left:3138px;top:1226px;width:20px;height:27px;background:linear-gradient(90deg,#f4f4f4,#dcdcdc);border:1px solid #a6a6a6;border-radius:3px;box-sizing:border-box;"></div><div class="a" style="left:3145px;top:1232px;width:1px;height:14px;background:#b0b0b0;"></div><div class="a" style="left:3149px;top:1232px;width:1px;height:14px;background:#b0b0b0;"></div><div class="t s" style="left:3395.0px;top:1227.0px;font-size:17px;line-height:20px;color:#111;transform:scaleX(0.950);transform-origin:0 50%;">30</div><div class="a" style="left:3045px;top:1169px;width:359px;height:1px;background:#a0a0a0;"></div><div class="a" style="left:3031px;top:1267px;width:423px;height:24px;background:linear-gradient(90deg,#f2f2f2 0%,#e6e6e6 40%,#e2e2e2 70%,#ececec 100%);"></div><div class="t s" style="left:3036.0px;top:1270.0px;font-size:17px;line-height:20px;color:#333;font-weight:bold;">CTCSS</div><svg class="a" style="left:3433px;top:1274.0px" width="14" height="10"><path d="M1,8 h12 l-6,-6 z" fill="#999"/></svg><div class="a" style="left:3040px;top:1308px;width:20px;height:20px;background:#fff;border:1px solid #333;box-sizing:border-box;"></div><div class="a" style="left:3081px;top:1302px;width:81px;height:27px;background:#cfcfcf;border:1px solid #c6c6c6;box-sizing:border-box;"></div><div class="t s" style="left:3085.0px;top:1306.0px;font-size:17px;line-height:20px;color:#9a9a9a;transform:scaleX(0.967);transform-origin:0 50%;">67.0</div><svg class="a" style="left:3142px;top:1310px" width="12" height="10"><path d="M1,2 l5,5 l5,-5" stroke="#aaa" fill="none"/></svg><div class="a" style="left:3031px;top:1343px;width:423px;height:25px;background:linear-gradient(90deg,#f2f2f2 0%,#e6e6e6 40%,#e2e2e2 70%,#ececec 100%);"></div><div class="t s" style="left:3036.0px;top:1346.5px;font-size:17px;line-height:20px;color:#333;font-weight:bold;">Spectrum</div><svg class="a" style="left:3433px;top:1350.5px" width="14" height="10"><path d="M1,8 h12 l-6,-6 z" fill="#999"/></svg><div class="a" style="left:3031px;top:1368px;width:423px;height:235px;background:#000;"></div><div class="a" style="left:3036px;top:1373px;width:27px;height:56px;background:#111;border:1px solid #444;box-sizing:border-box;"></div><div class="a" style="left:3037px;top:1374px;width:25px;height:27px;background:linear-gradient(#3a3a3a,#222 45%,#000 50%);"></div><div class="a" style="left:3037px;top:1388px;width:25px;height:13px;background:radial-gradient(ellipse 50% 90% at 50% 100%,#c8c030,rgba(0,0,0,0));"></div><svg class="a" style="left:3036px;top:1373px" width="27" height="56"><circle cx="13.5" cy="16" r="4" fill="#fff"/><circle cx="13.5" cy="42" r="5" fill="none" stroke="#eee" stroke-width="1.5"/></svg><svg class="a" style="left:3031px;top:1368px" width="423" height="235"><path d="M122,14 V200" stroke="#7a7a7a" stroke-width="1"/><path d="M165,14 V200" stroke="#7a7a7a" stroke-width="1"/><path d="M208,14 V200" stroke="#7a7a7a" stroke-width="1"/><path d="M252,14 V200" stroke="#7a7a7a" stroke-width="1"/><path d="M295,14 V200" stroke="#7a7a7a" stroke-width="1"/><path d="M338,14 V200" stroke="#7a7a7a" stroke-width="1"/><path d="M79,76 H377" stroke="#7a7a7a" stroke-width="1"/><path d="M79,138 H377" stroke="#7a7a7a" stroke-width="1"/><rect x="79" y="14" width="298" height="186" fill="none" stroke="#d8d8d8" stroke-width="1.5"/><text x="69" y="19" font-size="13" font-family="Liberation Sans" fill="#f0f0f0" text-anchor="end">0</text><text x="385" y="19" font-size="13" font-family="Liberation Sans" fill="#f0f0f0">0</text><text x="69" y="81" font-size="13" font-family="Liberation Sans" fill="#f0f0f0" text-anchor="end">-20</text><text x="385" y="81" font-size="13" font-family="Liberation Sans" fill="#f0f0f0">-20</text><text x="69" y="143" font-size="13" font-family="Liberation Sans" fill="#f0f0f0" text-anchor="end">-40</text><text x="385" y="143" font-size="13" font-family="Liberation Sans" fill="#f0f0f0">-40</text><text x="69" y="205" font-size="13" font-family="Liberation Sans" fill="#f0f0f0" text-anchor="end">-60</text><text x="385" y="205" font-size="13" font-family="Liberation Sans" fill="#f0f0f0">-60</text><text x="80" y="223" font-size="13" font-family="Liberation Sans" fill="#f0f0f0" text-anchor="middle">50</text><text x="123" y="223" font-size="13" font-family="Liberation Sans" fill="#f0f0f0" text-anchor="middle">100</text><text x="166" y="223" font-size="13" font-family="Liberation Sans" fill="#f0f0f0" text-anchor="middle">200</text><text x="209" y="223" font-size="13" font-family="Liberation Sans" fill="#f0f0f0" text-anchor="middle">400</text><text x="252" y="223" font-size="13" font-family="Liberation Sans" fill="#f0f0f0" text-anchor="middle">800</text><text x="296" y="223" font-size="13" font-family="Liberation Sans" fill="#f0f0f0" text-anchor="middle">1k6</text><text x="338" y="223" font-size="13" font-family="Liberation Sans" fill="#f0f0f0" text-anchor="middle">3k2</text></svg><div class="a" style="left:3031px;top:1603px;width:423px;height:25px;background:linear-gradient(90deg,#f2f2f2 0%,#e6e6e6 40%,#e2e2e2 70%,#ececec 100%);"></div><div class="t s" style="left:3036.0px;top:1606.5px;font-size:17px;line-height:20px;color:#333;font-weight:bold;">Monitor</div><svg class="a" style="left:3433px;top:1610.5px" width="14" height="10"><path d="M1,8 h12 l-6,-6 z" fill="#999"/></svg><div class="a" style="left:3037px;top:1635px;width:375px;height:35px;background:#e1e1e1;border:1px solid #adadad;box-sizing:border-box;"></div><div class="t s" style="left:3039.0px;top:1642.5px;font-size:18px;line-height:21px;color:#111;transform:scaleX(0.887);transform-origin:0 50%;">VoiceMeeter Aux Input (VB-Audio VoiceMeeter ...</div><svg class="a" style="left:3392px;top:1647px" width="16" height="12"><path d="M1,1 h14 l-7,8 z" fill="#777"/></svg><div class="a" style="left:3037px;top:1682px;width:38px;height:35px;background:#e1e1e1;border:1px solid #adadad;box-sizing:border-box;"></div><div class="t s" style="left:3045.7px;top:1689.5px;font-size:17px;line-height:20px;color:#222;transform:scaleX(0.950);transform-origin:0 50%;">TX</div><div class="a" style="left:3082px;top:1682px;width:39px;height:35px;background:#cce4f7;border:1px solid #2f78c0;box-sizing:border-box;"></div><div class="t s" style="left:3090.3px;top:1689.5px;font-size:17px;line-height:20px;color:#222;transform:scaleX(0.950);transform-origin:0 50%;">RX</div><div class="a" style="left:3158px;top:1701px;width:212px;height:6px;background:#e8e8e8;border:1px solid #c4c4c4;border-radius:3px;box-sizing:border-box;"></div><div class="a" style="left:3348px;top:1691px;width:20px;height:27px;background:linear-gradient(90deg,#f4f4f4,#dcdcdc);border:1px solid #a6a6a6;border-radius:3px;box-sizing:border-box;"></div><div class="a" style="left:3355px;top:1697px;width:1px;height:14px;background:#b0b0b0;"></div><div class="a" style="left:3359px;top:1697px;width:1px;height:14px;background:#b0b0b0;"></div><div class="t s" style="left:3388.0px;top:1693.0px;font-size:17px;line-height:20px;color:#111;transform:scaleX(0.917);transform-origin:0 50%;">100</div><div class="a" style="left:3031px;top:1726px;width:423px;height:26px;background:linear-gradient(90deg,#f2f2f2 0%,#e6e6e6 40%,#e2e2e2 70%,#ececec 100%);"></div><div class="t s" style="left:3036.0px;top:1730.0px;font-size:17px;line-height:20px;color:#333;font-weight:bold;">Text</div><svg class="a" style="left:3433px;top:1734.0px" width="14" height="10"><path d="M1,8 h12 l-6,-6 z" fill="#999"/></svg><div class="a" style="left:3040px;top:1762px;width:243px;height:28px;background:#fff;border:1px solid #7a7a7a;box-sizing:border-box;"></div><div class="t m" style="left:3047.0px;top:1766.5px;font-size:16px;line-height:19px;color:#111;transform:scaleX(0.941);transform-origin:0 50%;">My rig ANAN 7000 MkII w</div><svg class="a" style="left:3263px;top:1771px" width="14" height="10"><path d="M1,2 l6,6 l6,-6" stroke="#333" stroke-width="1.3" fill="none"/></svg><div class="a" style="left:3298px;top:1763px;width:34px;height:30px;background:#e1e1e1;border:1px solid #adadad;box-sizing:border-box;"></div><svg class="a" style="left:3298px;top:1763px" width="34" height="30"><path d="M13,10 l10,5 l-10,5 z" fill="#111"/></svg><div class="a" style="left:3338px;top:1763px;width:34px;height:30px;background:#cfcfcf;border:1px solid #c6c6c6;box-sizing:border-box;"></div><div class="a" style="left:3350px;top:1773px;width:10px;height:10px;background:#888;"></div><div class="a" style="left:3379px;top:1763px;width:34px;height:30px;background:#e1e1e1;border:1px solid #adadad;box-sizing:border-box;"></div><svg class="a" style="left:3379px;top:1763px" width="34" height="30"><g fill="#111"><circle cx="10" cy="16" r="2.6"/><circle cx="17" cy="16" r="2.6"/><circle cx="24" cy="16" r="2.6"/></g></svg><div class="a" style="left:3031px;top:1807px;width:423px;height:25px;background:linear-gradient(90deg,#f2f2f2 0%,#e6e6e6 40%,#e2e2e2 70%,#ececec 100%);"></div><div class="t s" style="left:3036.0px;top:1810.5px;font-size:17px;line-height:20px;color:#333;font-weight:bold;">Voice Keyer</div><svg class="a" style="left:3433px;top:1814.5px" width="14" height="10"><path d="M1,8 h12 l-6,-6 z" fill="#999"/></svg><div class="a" style="left:3041px;top:1845px;width:33px;height:30px;background:#e1e1e1;border:2px solid #2f78c0;box-sizing:border-box;"></div><div class="t s" style="left:3052.8px;top:1850.0px;font-size:17px;line-height:20px;color:#222;">1</div><div class="a" style="left:3079px;top:1845px;width:34px;height:30px;background:#cfcfcf;border:1px solid #c6c6c6;box-sizing:border-box;"></div><div class="t s" style="left:3091.3px;top:1850.0px;font-size:17px;line-height:20px;color:#8a8a8a;">2</div><div class="a" style="left:3117px;top:1845px;width:34px;height:30px;background:#cfcfcf;border:1px solid #c6c6c6;box-sizing:border-box;"></div><div class="t s" style="left:3129.3px;top:1850.0px;font-size:17px;line-height:20px;color:#8a8a8a;">3</div><div class="a" style="left:3155px;top:1845px;width:34px;height:30px;background:#cfcfcf;border:1px solid #c6c6c6;box-sizing:border-box;"></div><div class="t s" style="left:3167.3px;top:1850.0px;font-size:17px;line-height:20px;color:#8a8a8a;">4</div><div class="a" style="left:3203px;top:1845px;width:34px;height:30px;background:#cfcfcf;border:1px solid #c6c6c6;box-sizing:border-box;"></div><div class="a" style="left:3215px;top:1855px;width:10px;height:10px;background:#888;"></div><div class="t s" style="left:3274.0px;top:1852.0px;font-size:15px;line-height:18px;color:#111;font-weight:bold;transform:scaleX(1.200);transform-origin:0 50%;">()</div><div class="a" style="left:3297px;top:1846px;width:72px;height:25px;background:#e1e1e1;border:1px solid #adadad;box-sizing:border-box;"></div><div class="t s" style="left:3301.0px;top:1849.0px;font-size:17px;line-height:20px;color:#111;transform:scaleX(0.935);transform-origin:0 50%;">None</div><svg class="a" style="left:3349px;top:1854px" width="14" height="10"><path d="M1,2 l6,6 l6,-6" stroke="#333" stroke-width="1.3" fill="none"/></svg><div class="a" style="left:3379px;top:1845px;width:34px;height:30px;background:#e1e1e1;border:1px solid #adadad;box-sizing:border-box;"></div><svg class="a" style="left:3379px;top:1845px" width="34" height="30"><g fill="#111"><circle cx="10" cy="16" r="2.6"/><circle cx="17" cy="16" r="2.6"/><circle cx="24" cy="16" r="2.6"/></g></svg><div class="a" style="left:3040px;top:1885px;width:198px;height:14px;background:#e6e6e6;border:1px solid #bcbcbc;box-sizing:border-box;"></div><div class="a" style="left:3274px;top:1885px;width:140px;height:14px;background:#e6e6e6;border:1px solid #bcbcbc;box-sizing:border-box;"></div><div class="t s" style="left:3040.0px;top:1913.0px;font-size:17px;line-height:20px;color:#111;transform:scaleX(0.940);transform-origin:0 50%;">Loop:</div><div class="a" style="left:3085px;top:1909px;width:58px;height:26px;background:#e1e1e1;border:1px solid #adadad;box-sizing:border-box;"></div><div class="t s" style="left:3089.0px;top:1910.0px;font-size:20px;line-height:24px;color:#111;">∞</div><svg class="a" style="left:3124px;top:1918px" width="14" height="10"><path d="M1,2 l6,6 l6,-6" stroke="#333" stroke-width="1.3" fill="none"/></svg><div class="a" style="left:3279px;top:1913px;width:20px;height:20px;background:#fff;border:1px solid #333;box-sizing:border-box;"></div><svg class="a" style="left:3279px;top:1913px" width="20" height="20"><path d="M4,10 l4,5 l8,-11" stroke="#222" stroke-width="1.8" fill="none"/></svg><div class="t s" style="left:3303.0px;top:1913.0px;font-size:17px;line-height:20px;color:#111;transform:scaleX(0.953);transform-origin:0 50%;">Monitor</div><div class="a" style="left:3031px;top:1948px;width:423px;height:115px;background:#e9edf5;"></div><div class="a" style="left:3459px;top:240px;width:381px;height:1823px;background:#f0f0f0;"></div><div class="a" style="left:3459px;top:208px;width:381px;height:32px;background:#bcc3cc;"></div><div class="t s" style="left:3463.0px;top:214.0px;font-size:17px;line-height:20px;color:#505050;">Favourites</div><svg class="a" style="left:3796px;top:208px" width="44" height="32"><path d="M3,13.0 h14 l-7,7 z" fill="#808080"/><path d="M26,10.0 l12,12 M38,10.0 l-12,12" stroke="#808080" stroke-width="2"/></svg><div class="a" style="left:3464px;top:247px;width:33px;height:29px;background:#e1e1e1;border:1px solid #c9c9c9;box-sizing:border-box;"></div><div class="a" style="left:3504px;top:247px;width:33px;height:29px;background:#e1e1e1;border:1px solid #c9c9c9;box-sizing:border-box;"></div><div class="a" style="left:3545px;top:247px;width:33px;height:29px;background:#e1e1e1;border:1px solid #c9c9c9;box-sizing:border-box;"></div><div class="a" style="left:3608px;top:247px;width:33px;height:29px;background:#e1e1e1;border:1px solid #c9c9c9;box-sizing:border-box;"></div><div class="a" style="left:3648px;top:247px;width:33px;height:29px;background:#e1e1e1;border:1px solid #c9c9c9;box-sizing:border-box;"></div><div class="a" style="left:3689px;top:247px;width:33px;height:29px;background:#e1e1e1;border:1px solid #c9c9c9;box-sizing:border-box;"></div><svg class="a" style="left:3459px;top:240px" width="280" height="43"><path d="M16,21 h13 M22.5,14.5 v13" stroke="#111" stroke-width="4"/><path d="M52,23 a10,10 0 0 1 17,-8 M73,19 a10,10 0 0 1 -17,8" stroke="#111" stroke-width="3.5" fill="none"/><path d="M65,9 l8,6 l-8,3 z M60,33 l-8,-6 l8,-3 z" fill="#111"/><circle cx="99" cy="21" r="2" fill="#111"/><circle cx="107" cy="21" r="2" fill="#111"/><path d="M157,15 h8 l3,3 h12 v13 h-23 z" fill="#f5d27a" stroke="#d8a84a"/><path d="M157,31 l4,-9 h23 l-4,9 z" fill="#fbe39a" stroke="#d8a84a"/><circle cx="203" cy="19" r="8" fill="#fff" stroke="#111" stroke-width="2"/><path d="M199,19 h8 M203,15 v8" stroke="#111" stroke-width="1.8"/><path d="M209,25 l6,6" stroke="#111" stroke-width="3.5"/><circle cx="244" cy="19" r="8" fill="#fff" stroke="#111" stroke-width="2"/><path d="M240,19 h8" stroke="#111" stroke-width="1.8"/><path d="M250,25 l6,6" stroke="#111" stroke-width="3.5"/></svg><div class="a" style="left:3459px;top:283px;width:354px;height:1755px;background:#fff;"></div><div class="a" style="left:3459px;top:283px;width:1px;height:1757px;background:#a0a0a0;"></div><div class="a" style="left:3459px;top:283px;width:354px;height:1755px;overflow:hidden"><div class="t m" style="left:82.0px;top:5.5px;font-size:20px;line-height:24px;color:#111;-webkit-text-stroke:0.35px #111;">8.540,200 STANAG CAN CF</div><div class="t m" style="left:82.0px;top:33.5px;font-size:20px;line-height:24px;color:#111;-webkit-text-stroke:0.35px #111;">8.564,200 STANAG CAN CF</div><div class="t m" style="left:63.0px;top:61.5px;font-size:20px;line-height:24px;color:#111;-webkit-text-stroke:0.35px #111;">DEU German Navy</div><div class="t m" style="left:82.0px;top:89.5px;font-size:20px;line-height:24px;color:#111;-webkit-text-stroke:0.35px #111;">1.768,200 STANAG DEU DH</div><div class="t m" style="left:82.0px;top:117.5px;font-size:20px;line-height:24px;color:#111;-webkit-text-stroke:0.35px #111;">1.897,200 STANAG DEU DH</div><div class="t m" style="left:82.0px;top:145.5px;font-size:20px;line-height:24px;color:#111;-webkit-text-stroke:0.35px #111;">2.574,200 STANAG DEU DH</div><div class="t m" style="left:82.0px;top:173.5px;font-size:20px;line-height:24px;color:#111;-webkit-text-stroke:0.35px #111;">2.623,200 STANAG DEU DH</div><div class="t m" style="left:82.0px;top:201.5px;font-size:20px;line-height:24px;color:#111;-webkit-text-stroke:0.35px #111;">2.810,200 STANAG DEU DH</div><div class="t m" style="left:82.0px;top:229.5px;font-size:20px;line-height:24px;color:#111;-webkit-text-stroke:0.35px #111;">3.247,200 STANAG DEU DH</div><div class="t m" style="left:82.0px;top:257.5px;font-size:20px;line-height:24px;color:#111;-webkit-text-stroke:0.35px #111;">3.805,200 STANAG DEU DH</div><div class="t m" style="left:82.0px;top:285.5px;font-size:20px;line-height:24px;color:#111;-webkit-text-stroke:0.35px #111;">3.891,200 STANAG DEU DH</div><div class="t m" style="left:82.0px;top:313.5px;font-size:20px;line-height:24px;color:#111;-webkit-text-stroke:0.35px #111;">4.000,200 STANG DEU DHJ</div><div class="t m" style="left:82.0px;top:341.5px;font-size:20px;line-height:24px;color:#111;-webkit-text-stroke:0.35px #111;">4.054,200 STANAG DEU DH</div><div class="t m" style="left:82.0px;top:369.5px;font-size:20px;line-height:24px;color:#111;-webkit-text-stroke:0.35px #111;">4.081,200 STANAG DEU DH</div><div class="t m" style="left:82.0px;top:397.5px;font-size:20px;line-height:24px;color:#111;-webkit-text-stroke:0.35px #111;">4.203,200 STANAG DEU DH</div><div class="t m" style="left:82.0px;top:425.5px;font-size:20px;line-height:24px;color:#111;-webkit-text-stroke:0.35px #111;">4.463,200 STANAG DEU DH</div><div class="t m" style="left:82.0px;top:453.5px;font-size:20px;line-height:24px;color:#111;-webkit-text-stroke:0.35px #111;">5.848,200 STANAG DEU DH</div><div class="t m" style="left:82.0px;top:481.5px;font-size:20px;line-height:24px;color:#111;-webkit-text-stroke:0.35px #111;">6.763,200 STANAG DEU DH</div><div class="t m" style="left:82.0px;top:509.5px;font-size:20px;line-height:24px;color:#111;-webkit-text-stroke:0.35px #111;">6.766,700 STANAG DEU DH</div><div class="t m" style="left:82.0px;top:537.5px;font-size:20px;line-height:24px;color:#111;-webkit-text-stroke:0.35px #111;">6.778,200 STANAG DEU DH</div><div class="t m" style="left:82.0px;top:565.5px;font-size:20px;line-height:24px;color:#111;-webkit-text-stroke:0.35px #111;">7.551,200 STANAG DEU DH</div><div class="t m" style="left:82.0px;top:593.5px;font-size:20px;line-height:24px;color:#111;-webkit-text-stroke:0.35px #111;">8.109,000 MAHRS DEU DHJ</div><div class="t m" style="left:82.0px;top:621.5px;font-size:20px;line-height:24px;color:#111;-webkit-text-stroke:0.35px #111;">8.140,200 STANAG DEU DH</div><div class="t m" style="left:82.0px;top:649.5px;font-size:20px;line-height:24px;color:#111;-webkit-text-stroke:0.35px #111;">8.336,500 STANAG DEU DH</div><div class="t m" style="left:82.0px;top:677.5px;font-size:20px;line-height:24px;color:#111;-webkit-text-stroke:0.35px #111;">12.280,200 STANAG DEU DH</div><div class="t m" style="left:63.0px;top:705.5px;font-size:20px;line-height:24px;color:#111;-webkit-text-stroke:0.35px #111;">DNK Danish Navy</div><div class="t m" style="left:82.0px;top:733.5px;font-size:20px;line-height:24px;color:#111;-webkit-text-stroke:0.35px #111;">2.408,100 STANAG DNK OU</div><div class="t m" style="left:82.0px;top:761.5px;font-size:20px;line-height:24px;color:#111;-webkit-text-stroke:0.35px #111;">2.658,200 STANAG DNK Da</div><div class="t m" style="left:82.0px;top:789.5px;font-size:20px;line-height:24px;color:#111;-webkit-text-stroke:0.35px #111;">3.192,200 STANAG DNK Na</div><div class="t m" style="left:82.0px;top:817.5px;font-size:20px;line-height:24px;color:#111;-webkit-text-stroke:0.35px #111;">5.361,800 STANAG DNK OU</div><div class="t m" style="left:82.0px;top:845.5px;font-size:20px;line-height:24px;color:#111;-webkit-text-stroke:0.35px #111;">6.481,200 STANAG DNK OU</div><div class="t m" style="left:82.0px;top:873.5px;font-size:20px;line-height:24px;color:#111;-webkit-text-stroke:0.35px #111;">8.151,700 STANAG-4285 DN</div><div class="t m" style="left:63.0px;top:901.5px;font-size:20px;line-height:24px;color:#111;-webkit-text-stroke:0.35px #111;">EGY Egyptian Navy</div><div class="t m" style="left:82.0px;top:929.5px;font-size:20px;line-height:24px;color:#111;-webkit-text-stroke:0.35px #111;">4.200,000 USB EGY Navy</div><div class="t m" style="left:82.0px;top:957.5px;font-size:20px;line-height:24px;color:#111;-webkit-text-stroke:0.35px #111;">4.222,000 USB EGY Navy</div><div class="t m" style="left:82.0px;top:985.5px;font-size:20px;line-height:24px;color:#111;-webkit-text-stroke:0.35px #111;">4.500,000 USB EGY Navy</div><div class="t m" style="left:82.0px;top:1013.5px;font-size:20px;line-height:24px;color:#111;-webkit-text-stroke:0.35px #111;">4.888,000 USB EGY Navy</div><div class="t m" style="left:82.0px;top:1041.5px;font-size:20px;line-height:24px;color:#111;-webkit-text-stroke:0.35px #111;">5.200,000 USB EGY Navy</div><div class="t m" style="left:82.0px;top:1069.5px;font-size:20px;line-height:24px;color:#111;-webkit-text-stroke:0.35px #111;">5.222,000 USB EGY Navy</div><div class="t m" style="left:82.0px;top:1097.5px;font-size:20px;line-height:24px;color:#111;-webkit-text-stroke:0.35px #111;">5.531,000 USB EGY Navy</div><div class="t m" style="left:82.0px;top:1125.5px;font-size:20px;line-height:24px;color:#111;-webkit-text-stroke:0.35px #111;">5.555,000 USB EGY JBALI</div><div class="t m" style="left:82.0px;top:1153.5px;font-size:20px;line-height:24px;color:#111;-webkit-text-stroke:0.35px #111;">5.566,000 USB EGY Navy</div><div class="t m" style="left:82.0px;top:1181.5px;font-size:20px;line-height:24px;color:#111;-webkit-text-stroke:0.35px #111;">5.623,000 USB EGY Navy</div><div class="t m" style="left:82.0px;top:1209.5px;font-size:20px;line-height:24px;color:#111;-webkit-text-stroke:0.35px #111;">5.666,000 USB EGY Navy</div><div class="a" style="left:59px;top:1235.5px;width:295px;height:28px;background:#d9d9d9;"></div><div class="t m" style="left:82.0px;top:1237.5px;font-size:20px;line-height:24px;color:#111;-webkit-text-stroke:0.35px #111;">6.568.000 USB EGY Navy</div><div class="t m" style="left:82.0px;top:1265.5px;font-size:20px;line-height:24px;color:#111;-webkit-text-stroke:0.35px #111;">6.666,000 USB EGY Navy</div><div class="t m" style="left:82.0px;top:1293.5px;font-size:20px;line-height:24px;color:#111;-webkit-text-stroke:0.35px #111;">6.688,000 USB EGY Navy</div><div class="t m" style="left:82.0px;top:1321.5px;font-size:20px;line-height:24px;color:#111;-webkit-text-stroke:0.35px #111;">7.788,000 USB EGY Navy</div><div class="t m" style="left:82.0px;top:1349.5px;font-size:20px;line-height:24px;color:#111;-webkit-text-stroke:0.35px #111;">8.404,000 USB EGY Navy</div><div class="t m" style="left:82.0px;top:1377.5px;font-size:20px;line-height:24px;color:#111;-webkit-text-stroke:0.35px #111;">8.500,000 USB EGY Navy</div><div class="t m" style="left:82.0px;top:1405.5px;font-size:20px;line-height:24px;color:#111;-webkit-text-stroke:0.35px #111;">8.600,000 USB EGY Navy</div><div class="t m" style="left:82.0px;top:1433.5px;font-size:20px;line-height:24px;color:#111;-webkit-text-stroke:0.35px #111;">8.689,000 USB EGY Navy</div><div class="t m" style="left:82.0px;top:1461.5px;font-size:20px;line-height:24px;color:#111;-webkit-text-stroke:0.35px #111;">9.080,000 USB EGY Navy</div><div class="t m" style="left:82.0px;top:1489.5px;font-size:20px;line-height:24px;color:#111;-webkit-text-stroke:0.35px #111;">10.204,000 USB EGY JBAL</div><div class="t m" style="left:82.0px;top:1517.5px;font-size:20px;line-height:24px;color:#111;-webkit-text-stroke:0.35px #111;">10.333,000 USB EGY JBAL</div><div class="t m" style="left:82.0px;top:1545.5px;font-size:20px;line-height:24px;color:#111;-webkit-text-stroke:0.35px #111;">10.500,000 USB EGY JBAL</div><div class="t m" style="left:82.0px;top:1573.5px;font-size:20px;line-height:24px;color:#111;-webkit-text-stroke:0.35px #111;">10.519,000 USB EGY Navy</div><div class="t m" style="left:82.0px;top:1601.5px;font-size:20px;line-height:24px;color:#111;-webkit-text-stroke:0.35px #111;">10.621,000 USB EGY JBAL</div><div class="t m" style="left:82.0px;top:1629.5px;font-size:20px;line-height:24px;color:#111;-webkit-text-stroke:0.35px #111;">11.100,000 USB EGY JBAL</div><div class="t m" style="left:82.0px;top:1657.5px;font-size:20px;line-height:24px;color:#111;-webkit-text-stroke:0.35px #111;">11.113,000 USB EGY JBAL</div><div class="t m" style="left:82.0px;top:1685.5px;font-size:20px;line-height:24px;color:#111;-webkit-text-stroke:0.35px #111;">11.125,000 USB EGY Navy</div><div class="t m" style="left:82.0px;top:1713.5px;font-size:20px;line-height:24px;color:#111;-webkit-text-stroke:0.35px #111;">11.136,000 USB EGY Navy</div><div class="t m" style="left:82.0px;top:1741.5px;font-size:20px;line-height:24px;color:#111;-webkit-text-stroke:0.35px #111;">12.200,000 USB EGY Navy</div><svg class="a" style="left:0;top:0" width="354" height="1757"><path transform="translate(69,17.5)" d="M0,-6.8 L2,-2.1 L6.8,-2.1 L3,1 L4.3,6.2 L0,3.3 L-4.3,6.2 L-3,1 L-6.8,-2.1 L-2,-2.1 Z" fill="#f6d566" stroke="#f0c850" stroke-width="0.5"/><path transform="translate(69,45.5)" d="M0,-6.8 L2,-2.1 L6.8,-2.1 L3,1 L4.3,6.2 L0,3.3 L-4.3,6.2 L-3,1 L-6.8,-2.1 L-2,-2.1 Z" fill="#f6d566" stroke="#f0c850" stroke-width="0.5"/><path d="M27,70.5 l4,4 l4,-4" stroke="#333" stroke-width="1.5" fill="none"/><rect x="43" y="67.5" width="15" height="12" fill="#f2d886" stroke="#b08a30" stroke-width="1"/><rect x="43" y="65.5" width="7" height="3" fill="#e8c870"/><path transform="translate(69,101.5)" d="M0,-6.8 L2,-2.1 L6.8,-2.1 L3,1 L4.3,6.2 L0,3.3 L-4.3,6.2 L-3,1 L-6.8,-2.1 L-2,-2.1 Z" fill="#f6d566" stroke="#f0c850" stroke-width="0.5"/><path transform="translate(69,129.5)" d="M0,-6.8 L2,-2.1 L6.8,-2.1 L3,1 L4.3,6.2 L0,3.3 L-4.3,6.2 L-3,1 L-6.8,-2.1 L-2,-2.1 Z" fill="#f6d566" stroke="#f0c850" stroke-width="0.5"/><path transform="translate(69,157.5)" d="M0,-6.8 L2,-2.1 L6.8,-2.1 L3,1 L4.3,6.2 L0,3.3 L-4.3,6.2 L-3,1 L-6.8,-2.1 L-2,-2.1 Z" fill="#f6d566" stroke="#f0c850" stroke-width="0.5"/><path transform="translate(69,185.5)" d="M0,-6.8 L2,-2.1 L6.8,-2.1 L3,1 L4.3,6.2 L0,3.3 L-4.3,6.2 L-3,1 L-6.8,-2.1 L-2,-2.1 Z" fill="#f6d566" stroke="#f0c850" stroke-width="0.5"/><path transform="translate(69,213.5)" d="M0,-6.8 L2,-2.1 L6.8,-2.1 L3,1 L4.3,6.2 L0,3.3 L-4.3,6.2 L-3,1 L-6.8,-2.1 L-2,-2.1 Z" fill="#f6d566" stroke="#f0c850" stroke-width="0.5"/><path transform="translate(69,241.5)" d="M0,-6.8 L2,-2.1 L6.8,-2.1 L3,1 L4.3,6.2 L0,3.3 L-4.3,6.2 L-3,1 L-6.8,-2.1 L-2,-2.1 Z" fill="#f6d566" stroke="#f0c850" stroke-width="0.5"/><path transform="translate(69,269.5)" d="M0,-6.8 L2,-2.1 L6.8,-2.1 L3,1 L4.3,6.2 L0,3.3 L-4.3,6.2 L-3,1 L-6.8,-2.1 L-2,-2.1 Z" fill="#f6d566" stroke="#f0c850" stroke-width="0.5"/><path transform="translate(69,297.5)" d="M0,-6.8 L2,-2.1 L6.8,-2.1 L3,1 L4.3,6.2 L0,3.3 L-4.3,6.2 L-3,1 L-6.8,-2.1 L-2,-2.1 Z" fill="#f6d566" stroke="#f0c850" stroke-width="0.5"/><path transform="translate(69,325.5)" d="M0,-6.8 L2,-2.1 L6.8,-2.1 L3,1 L4.3,6.2 L0,3.3 L-4.3,6.2 L-3,1 L-6.8,-2.1 L-2,-2.1 Z" fill="#f6d566" stroke="#f0c850" stroke-width="0.5"/><path transform="translate(69,353.5)" d="M0,-6.8 L2,-2.1 L6.8,-2.1 L3,1 L4.3,6.2 L0,3.3 L-4.3,6.2 L-3,1 L-6.8,-2.1 L-2,-2.1 Z" fill="#f6d566" stroke="#f0c850" stroke-width="0.5"/><path transform="translate(69,381.5)" d="M0,-6.8 L2,-2.1 L6.8,-2.1 L3,1 L4.3,6.2 L0,3.3 L-4.3,6.2 L-3,1 L-6.8,-2.1 L-2,-2.1 Z" fill="#f6d566" stroke="#f0c850" stroke-width="0.5"/><path transform="translate(69,409.5)" d="M0,-6.8 L2,-2.1 L6.8,-2.1 L3,1 L4.3,6.2 L0,3.3 L-4.3,6.2 L-3,1 L-6.8,-2.1 L-2,-2.1 Z" fill="#f6d566" stroke="#f0c850" stroke-width="0.5"/><path transform="translate(69,437.5)" d="M0,-6.8 L2,-2.1 L6.8,-2.1 L3,1 L4.3,6.2 L0,3.3 L-4.3,6.2 L-3,1 L-6.8,-2.1 L-2,-2.1 Z" fill="#f6d566" stroke="#f0c850" stroke-width="0.5"/><path transform="translate(69,465.5)" d="M0,-6.8 L2,-2.1 L6.8,-2.1 L3,1 L4.3,6.2 L0,3.3 L-4.3,6.2 L-3,1 L-6.8,-2.1 L-2,-2.1 Z" fill="#f6d566" stroke="#f0c850" stroke-width="0.5"/><path transform="translate(69,493.5)" d="M0,-6.8 L2,-2.1 L6.8,-2.1 L3,1 L4.3,6.2 L0,3.3 L-4.3,6.2 L-3,1 L-6.8,-2.1 L-2,-2.1 Z" fill="#f6d566" stroke="#f0c850" stroke-width="0.5"/><path transform="translate(69,521.5)" d="M0,-6.8 L2,-2.1 L6.8,-2.1 L3,1 L4.3,6.2 L0,3.3 L-4.3,6.2 L-3,1 L-6.8,-2.1 L-2,-2.1 Z" fill="#f6d566" stroke="#f0c850" stroke-width="0.5"/><path transform="translate(69,549.5)" d="M0,-6.8 L2,-2.1 L6.8,-2.1 L3,1 L4.3,6.2 L0,3.3 L-4.3,6.2 L-3,1 L-6.8,-2.1 L-2,-2.1 Z" fill="#f6d566" stroke="#f0c850" stroke-width="0.5"/><path transform="translate(69,577.5)" d="M0,-6.8 L2,-2.1 L6.8,-2.1 L3,1 L4.3,6.2 L0,3.3 L-4.3,6.2 L-3,1 L-6.8,-2.1 L-2,-2.1 Z" fill="#f6d566" stroke="#f0c850" stroke-width="0.5"/><path transform="translate(69,605.5)" d="M0,-6.8 L2,-2.1 L6.8,-2.1 L3,1 L4.3,6.2 L0,3.3 L-4.3,6.2 L-3,1 L-6.8,-2.1 L-2,-2.1 Z" fill="#f6d566" stroke="#f0c850" stroke-width="0.5"/><path transform="translate(69,633.5)" d="M0,-6.8 L2,-2.1 L6.8,-2.1 L3,1 L4.3,6.2 L0,3.3 L-4.3,6.2 L-3,1 L-6.8,-2.1 L-2,-2.1 Z" fill="#f6d566" stroke="#f0c850" stroke-width="0.5"/><path transform="translate(69,661.5)" d="M0,-6.8 L2,-2.1 L6.8,-2.1 L3,1 L4.3,6.2 L0,3.3 L-4.3,6.2 L-3,1 L-6.8,-2.1 L-2,-2.1 Z" fill="#f6d566" stroke="#f0c850" stroke-width="0.5"/><path transform="translate(69,689.5)" d="M0,-6.8 L2,-2.1 L6.8,-2.1 L3,1 L4.3,6.2 L0,3.3 L-4.3,6.2 L-3,1 L-6.8,-2.1 L-2,-2.1 Z" fill="#f6d566" stroke="#f0c850" stroke-width="0.5"/><path d="M27,714.5 l4,4 l4,-4" stroke="#333" stroke-width="1.5" fill="none"/><rect x="43" y="711.5" width="15" height="12" fill="#f2d886" stroke="#b08a30" stroke-width="1"/><rect x="43" y="709.5" width="7" height="3" fill="#e8c870"/><path transform="translate(69,745.5)" d="M0,-6.8 L2,-2.1 L6.8,-2.1 L3,1 L4.3,6.2 L0,3.3 L-4.3,6.2 L-3,1 L-6.8,-2.1 L-2,-2.1 Z" fill="#f6d566" stroke="#f0c850" stroke-width="0.5"/><path transform="translate(69,773.5)" d="M0,-6.8 L2,-2.1 L6.8,-2.1 L3,1 L4.3,6.2 L0,3.3 L-4.3,6.2 L-3,1 L-6.8,-2.1 L-2,-2.1 Z" fill="#f6d566" stroke="#f0c850" stroke-width="0.5"/><path transform="translate(69,801.5)" d="M0,-6.8 L2,-2.1 L6.8,-2.1 L3,1 L4.3,6.2 L0,3.3 L-4.3,6.2 L-3,1 L-6.8,-2.1 L-2,-2.1 Z" fill="#f6d566" stroke="#f0c850" stroke-width="0.5"/><path transform="translate(69,829.5)" d="M0,-6.8 L2,-2.1 L6.8,-2.1 L3,1 L4.3,6.2 L0,3.3 L-4.3,6.2 L-3,1 L-6.8,-2.1 L-2,-2.1 Z" fill="#f6d566" stroke="#f0c850" stroke-width="0.5"/><path transform="translate(69,857.5)" d="M0,-6.8 L2,-2.1 L6.8,-2.1 L3,1 L4.3,6.2 L0,3.3 L-4.3,6.2 L-3,1 L-6.8,-2.1 L-2,-2.1 Z" fill="#f6d566" stroke="#f0c850" stroke-width="0.5"/><path transform="translate(69,885.5)" d="M0,-6.8 L2,-2.1 L6.8,-2.1 L3,1 L4.3,6.2 L0,3.3 L-4.3,6.2 L-3,1 L-6.8,-2.1 L-2,-2.1 Z" fill="#f6d566" stroke="#f0c850" stroke-width="0.5"/><path d="M27,910.5 l4,4 l4,-4" stroke="#333" stroke-width="1.5" fill="none"/><rect x="43" y="907.5" width="15" height="12" fill="#f2d886" stroke="#b08a30" stroke-width="1"/><rect x="43" y="905.5" width="7" height="3" fill="#e8c870"/><path transform="translate(69,941.5)" d="M0,-6.8 L2,-2.1 L6.8,-2.1 L3,1 L4.3,6.2 L0,3.3 L-4.3,6.2 L-3,1 L-6.8,-2.1 L-2,-2.1 Z" fill="#f6d566" stroke="#f0c850" stroke-width="0.5"/><path transform="translate(69,969.5)" d="M0,-6.8 L2,-2.1 L6.8,-2.1 L3,1 L4.3,6.2 L0,3.3 L-4.3,6.2 L-3,1 L-6.8,-2.1 L-2,-2.1 Z" fill="#f6d566" stroke="#f0c850" stroke-width="0.5"/><path transform="translate(69,997.5)" d="M0,-6.8 L2,-2.1 L6.8,-2.1 L3,1 L4.3,6.2 L0,3.3 L-4.3,6.2 L-3,1 L-6.8,-2.1 L-2,-2.1 Z" fill="#f6d566" stroke="#f0c850" stroke-width="0.5"/><path transform="translate(69,1025.5)" d="M0,-6.8 L2,-2.1 L6.8,-2.1 L3,1 L4.3,6.2 L0,3.3 L-4.3,6.2 L-3,1 L-6.8,-2.1 L-2,-2.1 Z" fill="#f6d566" stroke="#f0c850" stroke-width="0.5"/><path transform="translate(69,1053.5)" d="M0,-6.8 L2,-2.1 L6.8,-2.1 L3,1 L4.3,6.2 L0,3.3 L-4.3,6.2 L-3,1 L-6.8,-2.1 L-2,-2.1 Z" fill="#f6d566" stroke="#f0c850" stroke-width="0.5"/><path transform="translate(69,1081.5)" d="M0,-6.8 L2,-2.1 L6.8,-2.1 L3,1 L4.3,6.2 L0,3.3 L-4.3,6.2 L-3,1 L-6.8,-2.1 L-2,-2.1 Z" fill="#f6d566" stroke="#f0c850" stroke-width="0.5"/><path transform="translate(69,1109.5)" d="M0,-6.8 L2,-2.1 L6.8,-2.1 L3,1 L4.3,6.2 L0,3.3 L-4.3,6.2 L-3,1 L-6.8,-2.1 L-2,-2.1 Z" fill="#f6d566" stroke="#f0c850" stroke-width="0.5"/><path transform="translate(69,1137.5)" d="M0,-6.8 L2,-2.1 L6.8,-2.1 L3,1 L4.3,6.2 L0,3.3 L-4.3,6.2 L-3,1 L-6.8,-2.1 L-2,-2.1 Z" fill="#f6d566" stroke="#f0c850" stroke-width="0.5"/><path transform="translate(69,1165.5)" d="M0,-6.8 L2,-2.1 L6.8,-2.1 L3,1 L4.3,6.2 L0,3.3 L-4.3,6.2 L-3,1 L-6.8,-2.1 L-2,-2.1 Z" fill="#f6d566" stroke="#f0c850" stroke-width="0.5"/><path transform="translate(69,1193.5)" d="M0,-6.8 L2,-2.1 L6.8,-2.1 L3,1 L4.3,6.2 L0,3.3 L-4.3,6.2 L-3,1 L-6.8,-2.1 L-2,-2.1 Z" fill="#f6d566" stroke="#f0c850" stroke-width="0.5"/><path transform="translate(69,1221.5)" d="M0,-6.8 L2,-2.1 L6.8,-2.1 L3,1 L4.3,6.2 L0,3.3 L-4.3,6.2 L-3,1 L-6.8,-2.1 L-2,-2.1 Z" fill="#f6d566" stroke="#f0c850" stroke-width="0.5"/><path transform="translate(69,1249.5)" d="M0,-6.8 L2,-2.1 L6.8,-2.1 L3,1 L4.3,6.2 L0,3.3 L-4.3,6.2 L-3,1 L-6.8,-2.1 L-2,-2.1 Z" fill="#f6d566" stroke="#f0c850" stroke-width="0.5"/><path transform="translate(69,1277.5)" d="M0,-6.8 L2,-2.1 L6.8,-2.1 L3,1 L4.3,6.2 L0,3.3 L-4.3,6.2 L-3,1 L-6.8,-2.1 L-2,-2.1 Z" fill="#f6d566" stroke="#f0c850" stroke-width="0.5"/><path transform="translate(69,1305.5)" d="M0,-6.8 L2,-2.1 L6.8,-2.1 L3,1 L4.3,6.2 L0,3.3 L-4.3,6.2 L-3,1 L-6.8,-2.1 L-2,-2.1 Z" fill="#f6d566" stroke="#f0c850" stroke-width="0.5"/><path transform="translate(69,1333.5)" d="M0,-6.8 L2,-2.1 L6.8,-2.1 L3,1 L4.3,6.2 L0,3.3 L-4.3,6.2 L-3,1 L-6.8,-2.1 L-2,-2.1 Z" fill="#f6d566" stroke="#f0c850" stroke-width="0.5"/><path transform="translate(69,1361.5)" d="M0,-6.8 L2,-2.1 L6.8,-2.1 L3,1 L4.3,6.2 L0,3.3 L-4.3,6.2 L-3,1 L-6.8,-2.1 L-2,-2.1 Z" fill="#f6d566" stroke="#f0c850" stroke-width="0.5"/><path transform="translate(69,1389.5)" d="M0,-6.8 L2,-2.1 L6.8,-2.1 L3,1 L4.3,6.2 L0,3.3 L-4.3,6.2 L-3,1 L-6.8,-2.1 L-2,-2.1 Z" fill="#f6d566" stroke="#f0c850" stroke-width="0.5"/><path transform="translate(69,1417.5)" d="M0,-6.8 L2,-2.1 L6.8,-2.1 L3,1 L4.3,6.2 L0,3.3 L-4.3,6.2 L-3,1 L-6.8,-2.1 L-2,-2.1 Z" fill="#f6d566" stroke="#f0c850" stroke-width="0.5"/><path transform="translate(69,1445.5)" d="M0,-6.8 L2,-2.1 L6.8,-2.1 L3,1 L4.3,6.2 L0,3.3 L-4.3,6.2 L-3,1 L-6.8,-2.1 L-2,-2.1 Z" fill="#f6d566" stroke="#f0c850" stroke-width="0.5"/><path transform="translate(69,1473.5)" d="M0,-6.8 L2,-2.1 L6.8,-2.1 L3,1 L4.3,6.2 L0,3.3 L-4.3,6.2 L-3,1 L-6.8,-2.1 L-2,-2.1 Z" fill="#f6d566" stroke="#f0c850" stroke-width="0.5"/><path transform="translate(69,1501.5)" d="M0,-6.8 L2,-2.1 L6.8,-2.1 L3,1 L4.3,6.2 L0,3.3 L-4.3,6.2 L-3,1 L-6.8,-2.1 L-2,-2.1 Z" fill="#f6d566" stroke="#f0c850" stroke-width="0.5"/><path transform="translate(69,1529.5)" d="M0,-6.8 L2,-2.1 L6.8,-2.1 L3,1 L4.3,6.2 L0,3.3 L-4.3,6.2 L-3,1 L-6.8,-2.1 L-2,-2.1 Z" fill="#f6d566" stroke="#f0c850" stroke-width="0.5"/><path transform="translate(69,1557.5)" d="M0,-6.8 L2,-2.1 L6.8,-2.1 L3,1 L4.3,6.2 L0,3.3 L-4.3,6.2 L-3,1 L-6.8,-2.1 L-2,-2.1 Z" fill="#f6d566" stroke="#f0c850" stroke-width="0.5"/><path transform="translate(69,1585.5)" d="M0,-6.8 L2,-2.1 L6.8,-2.1 L3,1 L4.3,6.2 L0,3.3 L-4.3,6.2 L-3,1 L-6.8,-2.1 L-2,-2.1 Z" fill="#f6d566" stroke="#f0c850" stroke-width="0.5"/><path transform="translate(69,1613.5)" d="M0,-6.8 L2,-2.1 L6.8,-2.1 L3,1 L4.3,6.2 L0,3.3 L-4.3,6.2 L-3,1 L-6.8,-2.1 L-2,-2.1 Z" fill="#f6d566" stroke="#f0c850" stroke-width="0.5"/><path transform="translate(69,1641.5)" d="M0,-6.8 L2,-2.1 L6.8,-2.1 L3,1 L4.3,6.2 L0,3.3 L-4.3,6.2 L-3,1 L-6.8,-2.1 L-2,-2.1 Z" fill="#f6d566" stroke="#f0c850" stroke-width="0.5"/><path transform="translate(69,1669.5)" d="M0,-6.8 L2,-2.1 L6.8,-2.1 L3,1 L4.3,6.2 L0,3.3 L-4.3,6.2 L-3,1 L-6.8,-2.1 L-2,-2.1 Z" fill="#f6d566" stroke="#f0c850" stroke-width="0.5"/><path transform="translate(69,1697.5)" d="M0,-6.8 L2,-2.1 L6.8,-2.1 L3,1 L4.3,6.2 L0,3.3 L-4.3,6.2 L-3,1 L-6.8,-2.1 L-2,-2.1 Z" fill="#f6d566" stroke="#f0c850" stroke-width="0.5"/><path transform="translate(69,1725.5)" d="M0,-6.8 L2,-2.1 L6.8,-2.1 L3,1 L4.3,6.2 L0,3.3 L-4.3,6.2 L-3,1 L-6.8,-2.1 L-2,-2.1 Z" fill="#f6d566" stroke="#f0c850" stroke-width="0.5"/><path transform="translate(69,1753.5)" d="M0,-6.8 L2,-2.1 L6.8,-2.1 L3,1 L4.3,6.2 L0,3.3 L-4.3,6.2 L-3,1 L-6.8,-2.1 L-2,-2.1 Z" fill="#f6d566" stroke="#f0c850" stroke-width="0.5"/></svg></div><div class="a" style="left:3813px;top:283px;width:27px;height:1757px;background:#f0f0f0;"></div><div class="a" style="left:3815px;top:635px;width:23px;height:609px;background:#cdcdcd;"></div><svg class="a" style="left:3813px;top:290px" width="27" height="20"><path d="M7,14 l6.5,-6 l6.5,6" stroke="#555" stroke-width="2.5" fill="none"/></svg><svg class="a" style="left:3813px;top:2012px" width="27" height="20"><path d="M7,6 l6.5,6 l6.5,-6" stroke="#555" stroke-width="2.5" fill="none"/></svg><div class="a" style="left:3459px;top:2040px;width:381px;height:23px;background:#f0f0f0;"></div><div class="a" style="left:3486px;top:2041px;width:130px;height:21px;background:#cdcdcd;"></div><svg class="a" style="left:3462px;top:2040px" width="360" height="23"><path d="M16,5 l-6,6.5 l6,6.5" stroke="#333" stroke-width="2.2" fill="none"/><path d="M331,5 l6,6.5 l-6,6.5" stroke="#333" stroke-width="2.2" fill="none"/></svg><div class="a" style="left:433px;top:1670px;width:2593px;height:5px;background:#e3e6ea;"></div><div class="a" style="left:433px;top:1675px;width:2593px;height:32px;background:#bcc3cc;"></div><div class="t s" style="left:437.0px;top:1680.0px;font-size:17px;line-height:20px;color:#555;transform:scaleX(0.970);transform-origin:0 50%;">Frequency Database</div><svg class="a" style="left:2982px;top:1675px" width="44" height="32"><path d="M3,13 h14 l-7,7 z" fill="#808080"/><path d="M26,10 l12,12 M38,10 l-12,12" stroke="#808080" stroke-width="2"/></svg><div class="a" style="left:433px;top:1707px;width:2593px;height:356px;background:#f0f0f0;"></div><div class="a" style="left:439px;top:1713px;width:34px;height:30px;background:#e1e1e1;border:1px solid #c9c9c9;box-sizing:border-box;"></div><div class="a" style="left:439px;top:1751px;width:34px;height:30px;background:#e1e1e1;border:1px solid #c9c9c9;box-sizing:border-box;"></div><div class="a" style="left:439px;top:1789px;width:34px;height:30px;background:#e1e1e1;border:1px solid #c9c9c9;box-sizing:border-box;"></div><div class="a" style="left:439px;top:1827px;width:34px;height:30px;background:#e1e1e1;border:1px solid #c9c9c9;box-sizing:border-box;"></div><div class="a" style="left:439px;top:1865px;width:34px;height:30px;background:#e1e1e1;border:1px solid #c9c9c9;box-sizing:border-box;"></div><svg class="a" style="left:439px;top:1713px" width="34" height="190"><path d="M8,16 l6,6 l12,-12" stroke="#4aa83a" stroke-width="3.5" fill="none"/><path d="M11,45 l14,8 l-14,8 z" fill="#3a6ac8"/><path d="M8,84 h18 l-7,8 v8 l-4,-3 v-5 z" fill="#7a8a8a"/><path d="M8,119 v12 M26,119 v12 M10,125 h14 M10,125 l3,-3 M10,125 l3,3 M24,125 l-3,-3 M24,125 l-3,3" stroke="#222" stroke-width="1.5" fill="none"/><circle cx="10" cy="167" r="2.2" fill="#111"/><circle cx="17" cy="167" r="2.2" fill="#111"/><circle cx="24" cy="167" r="2.2" fill="#111"/></svg><div class="a" style="left:483px;top:1707px;width:1px;height:356px;background:#a0a0a0;"></div><div class="a" style="left:484px;top:1707px;width:2515px;height:330px;background:#fff;"></div><div class="a" style="left:484px;top:1707px;width:2515px;height:26px;background:linear-gradient(#fdfdfd,#eeeeee);border-bottom:1px solid #d5d5d5;box-sizing:border-box;"></div><div class="a" style="left:602px;top:1708px;width:1px;height:25px;background:#dcdcdc;"></div><div class="a" style="left:1014px;top:1708px;width:1px;height:25px;background:#dcdcdc;"></div><div class="a" style="left:1577px;top:1708px;width:1px;height:25px;background:#dcdcdc;"></div><div class="a" style="left:1648px;top:1708px;width:1px;height:25px;background:#dcdcdc;"></div><div class="a" style="left:1730px;top:1708px;width:1px;height:25px;background:#dcdcdc;"></div><div class="a" style="left:1778px;top:1708px;width:1px;height:25px;background:#dcdcdc;"></div><div class="a" style="left:1850px;top:1708px;width:1px;height:25px;background:#dcdcdc;"></div><div class="a" style="left:2441px;top:1708px;width:1px;height:25px;background:#dcdcdc;"></div><div class="t m" style="left:490.0px;top:1711.0px;font-size:17px;line-height:20px;color:#111;transform:scaleX(0.975);transform-origin:0 50%;-webkit-text-stroke:0.3px #111;">Freq</div><div class="t m" style="left:608.0px;top:1711.0px;font-size:17px;line-height:20px;color:#111;transform:scaleX(0.975);transform-origin:0 50%;-webkit-text-stroke:0.3px #111;">Station</div><div class="t m" style="left:1020.0px;top:1711.0px;font-size:17px;line-height:20px;color:#111;transform:scaleX(0.975);transform-origin:0 50%;-webkit-text-stroke:0.3px #111;">Site</div><div class="t m" style="left:1581.0px;top:1711.0px;font-size:17px;line-height:20px;color:#111;transform:scaleX(0.975);transform-origin:0 50%;-webkit-text-stroke:0.3px #111;">Dist</div><div class="t m" style="left:1654.0px;top:1711.0px;font-size:17px;line-height:20px;color:#111;transform:scaleX(0.975);transform-origin:0 50%;-webkit-text-stroke:0.3px #111;">Locator</div><div class="t m" style="left:1736.0px;top:1711.0px;font-size:17px;line-height:20px;color:#111;transform:scaleX(0.975);transform-origin:0 50%;-webkit-text-stroke:0.3px #111;">PI</div><div class="t m" style="left:1784.0px;top:1711.0px;font-size:17px;line-height:20px;color:#111;transform:scaleX(0.975);transform-origin:0 50%;-webkit-text-stroke:0.3px #111;">Cal...</div><div class="t m" style="left:1856.0px;top:1711.0px;font-size:17px;line-height:20px;color:#111;transform:scaleX(0.975);transform-origin:0 50%;-webkit-text-stroke:0.3px #111;">Lang</div><div class="t m" style="left:2447.0px;top:1711.0px;font-size:17px;line-height:20px;color:#111;transform:scaleX(0.975);transform-origin:0 50%;-webkit-text-stroke:0.3px #111;">TX Country</div><div class="a" style="left:484px;top:1733px;width:2515px;height:304px;overflow:hidden"><div class="t m" style="left:6.0px;top:4.0px;font-size:17px;line-height:20px;color:#111;transform:scaleX(0.975);transform-origin:0 50%;-webkit-text-stroke:0.3px #111;">6.565.000</div><div class="t m" style="left:124.0px;top:4.0px;font-size:17px;line-height:20px;color:#111;transform:scaleX(0.975);transform-origin:0 50%;-webkit-text-stroke:0.3px #111;">Molokai HFDL (ID2)</div><div class="t m" style="left:536.0px;top:4.0px;font-size:17px;line-height:20px;color:#111;transform:scaleX(0.975);transform-origin:0 50%;-webkit-text-stroke:0.3px #111;">Molokai</div><div class="t m" style="left:1372.0px;top:4.0px;font-size:17px;line-height:20px;color:#111;transform:scaleX(0.975);transform-origin:0 50%;-webkit-text-stroke:0.3px #111;">HFDL squitter</div><div class="t m" style="left:1963.0px;top:4.0px;font-size:17px;line-height:20px;color:#111;transform:scaleX(0.975);transform-origin:0 50%;-webkit-text-stroke:0.3px #111;">Hawaii</div><div class="t m" style="left:6.0px;top:30.0px;font-size:17px;line-height:20px;color:#111;transform:scaleX(0.975);transform-origin:0 50%;-webkit-text-stroke:0.3px #111;">6.566.000</div><div class="t m" style="left:124.0px;top:30.0px;font-size:17px;line-height:20px;color:#111;transform:scaleX(0.975);transform-origin:0 50%;-webkit-text-stroke:0.3px #111;">Kyrgyz Military ALE</div><div class="t m" style="left:1963.0px;top:30.0px;font-size:17px;line-height:20px;color:#111;transform:scaleX(0.975);transform-origin:0 50%;-webkit-text-stroke:0.3px #111;">Kyrgyzstan</div><div class="a" style="left:0px;top:53.0px;width:2515px;height:26px;background:#f5f5f5;"></div><div class="t m" style="left:6.0px;top:56.0px;font-size:17px;line-height:20px;color:#111;transform:scaleX(0.975);transform-origin:0 50%;-webkit-text-stroke:0.3px #111;">6.566.000</div><div class="t m" style="left:124.0px;top:56.0px;font-size:17px;line-height:20px;color:#111;transform:scaleX(0.975);transform-origin:0 50%;-webkit-text-stroke:0.3px #111;">Kyrgyz Military ALE</div><div class="t m" style="left:536.0px;top:56.0px;font-size:17px;line-height:20px;color:#111;transform:scaleX(0.975);transform-origin:0 50%;-webkit-text-stroke:0.3px #111;">Bishkek</div><div class="t m" style="left:1372.0px;top:56.0px;font-size:17px;line-height:20px;color:#111;transform:scaleX(0.975);transform-origin:0 50%;-webkit-text-stroke:0.3px #111;">?</div><div class="t m" style="left:1963.0px;top:56.0px;font-size:17px;line-height:20px;color:#111;transform:scaleX(0.975);transform-origin:0 50%;-webkit-text-stroke:0.3px #111;">Kyrgyzstan</div><div class="a" style="left:0px;top:79.0px;width:2515px;height:26px;background:#f5f5f5;"></div><div class="t m" style="left:6.0px;top:82.0px;font-size:17px;line-height:20px;color:#111;transform:scaleX(0.975);transform-origin:0 50%;-webkit-text-stroke:0.3px #111;">6.566.000</div><div class="t m" style="left:124.0px;top:82.0px;font-size:17px;line-height:20px;color:#111;transform:scaleX(0.975);transform-origin:0 50%;-webkit-text-stroke:0.3px #111;">Mauritania Military ALE</div><div class="t m" style="left:1963.0px;top:82.0px;font-size:17px;line-height:20px;color:#111;transform:scaleX(0.975);transform-origin:0 50%;-webkit-text-stroke:0.3px #111;">Mauritania</div><div class="t m" style="left:6.0px;top:108.0px;font-size:17px;line-height:20px;color:#111;transform:scaleX(0.975);transform-origin:0 50%;-webkit-text-stroke:0.3px #111;">6.566.000</div><div class="t m" style="left:124.0px;top:108.0px;font-size:17px;line-height:20px;color:#111;transform:scaleX(0.975);transform-origin:0 50%;-webkit-text-stroke:0.3px #111;">Mauritania Military ALE</div><div class="t m" style="left:536.0px;top:108.0px;font-size:17px;line-height:20px;color:#111;transform:scaleX(0.975);transform-origin:0 50%;-webkit-text-stroke:0.3px #111;">Nouakchott</div><div class="t m" style="left:1372.0px;top:108.0px;font-size:17px;line-height:20px;color:#111;transform:scaleX(0.975);transform-origin:0 50%;-webkit-text-stroke:0.3px #111;">?</div><div class="t m" style="left:1963.0px;top:108.0px;font-size:17px;line-height:20px;color:#111;transform:scaleX(0.975);transform-origin:0 50%;-webkit-text-stroke:0.3px #111;">Mauritania</div><div class="t m" style="left:6.0px;top:134.0px;font-size:17px;line-height:20px;color:#111;transform:scaleX(0.975);transform-origin:0 50%;-webkit-text-stroke:0.3px #111;">6.566.400</div><div class="t m" style="left:124.0px;top:134.0px;font-size:17px;line-height:20px;color:#111;transform:scaleX(0.975);transform-origin:0 50%;-webkit-text-stroke:0.3px #111;">Airservices Australia</div><div class="t m" style="left:536.0px;top:134.0px;font-size:17px;line-height:20px;color:#111;transform:scaleX(0.975);transform-origin:0 50%;-webkit-text-stroke:0.3px #111;">Alice Springs/Santa Teresa Rd (NT)</div><div class="t m" style="left:1097.0px;top:134.0px;font-size:17px;line-height:20px;color:#111;transform:scaleX(0.975);transform-origin:0 50%;-webkit-text-stroke:0.3px #111;">10290</div><div class="t m" style="left:1170.0px;top:134.0px;font-size:17px;line-height:20px;color:#111;transform:scaleX(0.975);transform-origin:0 50%;-webkit-text-stroke:0.3px #111;">PG66wf</div><div class="a" style="left:0px;top:157.0px;width:2515px;height:26px;background:#f5f5f5;"></div><div class="t m" style="left:6.0px;top:160.0px;font-size:17px;line-height:20px;color:#111;transform:scaleX(0.975);transform-origin:0 50%;-webkit-text-stroke:0.3px #111;">6.577.000</div><div class="t m" style="left:124.0px;top:160.0px;font-size:17px;line-height:20px;color:#111;transform:scaleX(0.975);transform-origin:0 50%;-webkit-text-stroke:0.3px #111;">Barranquilla Aero</div><div class="t m" style="left:536.0px;top:160.0px;font-size:17px;line-height:20px;color:#111;transform:scaleX(0.975);transform-origin:0 50%;-webkit-text-stroke:0.3px #111;">Barranquilla (atl)</div><div class="t m" style="left:1097.0px;top:160.0px;font-size:17px;line-height:20px;color:#111;transform:scaleX(0.975);transform-origin:0 50%;-webkit-text-stroke:0.3px #111;">11833</div><div class="t m" style="left:1170.0px;top:160.0px;font-size:17px;line-height:20px;color:#111;transform:scaleX(0.975);transform-origin:0 50%;-webkit-text-stroke:0.3px #111;">FK20nt</div><div class="a" style="left:0px;top:183.0px;width:2515px;height:26px;background:#f5f5f5;"></div><div class="t m" style="left:6.0px;top:186.0px;font-size:17px;line-height:20px;color:#111;transform:scaleX(0.975);transform-origin:0 50%;-webkit-text-stroke:0.3px #111;">6.577.000</div><div class="t m" style="left:124.0px;top:186.0px;font-size:17px;line-height:20px;color:#111;transform:scaleX(0.975);transform-origin:0 50%;-webkit-text-stroke:0.3px #111;">KEA5 New York Aero</div><div class="t m" style="left:536.0px;top:186.0px;font-size:17px;line-height:20px;color:#111;transform:scaleX(0.975);transform-origin:0 50%;-webkit-text-stroke:0.3px #111;">Riverhead (NY)</div><div class="t m" style="left:1097.0px;top:186.0px;font-size:17px;line-height:20px;color:#111;transform:scaleX(0.975);transform-origin:0 50%;-webkit-text-stroke:0.3px #111;">12742</div><div class="t m" style="left:1170.0px;top:186.0px;font-size:17px;line-height:20px;color:#111;transform:scaleX(0.975);transform-origin:0 50%;-webkit-text-stroke:0.3px #111;">FN30qv</div><div class="t m" style="left:1372.0px;top:186.0px;font-size:17px;line-height:20px;color:#111;transform:scaleX(0.975);transform-origin:0 50%;-webkit-text-stroke:0.3px #111;">en</div><div class="t m" style="left:6.0px;top:212.0px;font-size:17px;line-height:20px;color:#111;transform:scaleX(0.975);transform-origin:0 50%;-webkit-text-stroke:0.3px #111;">6.577.000</div><div class="t m" style="left:124.0px;top:212.0px;font-size:17px;line-height:20px;color:#111;transform:scaleX(0.975);transform-origin:0 50%;-webkit-text-stroke:0.3px #111;">New York Radio CAR-A</div><div class="t m" style="left:1372.0px;top:212.0px;font-size:17px;line-height:20px;color:#111;transform:scaleX(0.975);transform-origin:0 50%;-webkit-text-stroke:0.3px #111;">English</div><div class="t m" style="left:1963.0px;top:212.0px;font-size:17px;line-height:20px;color:#111;transform:scaleX(0.975);transform-origin:0 50%;-webkit-text-stroke:0.3px #111;">United States of America</div><div class="t m" style="left:6.0px;top:238.0px;font-size:17px;line-height:20px;color:#111;transform:scaleX(0.975);transform-origin:0 50%;-webkit-text-stroke:0.3px #111;">6.577.000</div><div class="t m" style="left:124.0px;top:238.0px;font-size:17px;line-height:20px;color:#111;transform:scaleX(0.975);transform-origin:0 50%;-webkit-text-stroke:0.3px #111;">New York Radio CAR-A</div><div class="t m" style="left:536.0px;top:238.0px;font-size:17px;line-height:20px;color:#111;transform:scaleX(0.975);transform-origin:0 50%;-webkit-text-stroke:0.3px #111;">Barnegat, NJ</div><div class="t m" style="left:1372.0px;top:238.0px;font-size:17px;line-height:20px;color:#111;transform:scaleX(0.975);transform-origin:0 50%;-webkit-text-stroke:0.3px #111;">English</div><div class="t m" style="left:1963.0px;top:238.0px;font-size:17px;line-height:20px;color:#111;transform:scaleX(0.975);transform-origin:0 50%;-webkit-text-stroke:0.3px #111;">USA</div><div class="a" style="left:0px;top:261.0px;width:2515px;height:26px;background:#f5f5f5;"></div><div class="t m" style="left:6.0px;top:264.0px;font-size:17px;line-height:20px;color:#111;transform:scaleX(0.975);transform-origin:0 50%;-webkit-text-stroke:0.3px #111;">6.577.000</div><div class="t m" style="left:124.0px;top:264.0px;font-size:17px;line-height:20px;color:#111;transform:scaleX(0.975);transform-origin:0 50%;-webkit-text-stroke:0.3px #111;">Panama Aero</div><div class="t m" style="left:536.0px;top:264.0px;font-size:17px;line-height:20px;color:#111;transform:scaleX(0.975);transform-origin:0 50%;-webkit-text-stroke:0.3px #111;">Albrook (pnm)</div><div class="t m" style="left:1097.0px;top:264.0px;font-size:17px;line-height:20px;color:#111;transform:scaleX(0.975);transform-origin:0 50%;-webkit-text-stroke:0.3px #111;">12215</div><div class="t m" style="left:1170.0px;top:264.0px;font-size:17px;line-height:20px;color:#111;transform:scaleX(0.975);transform-origin:0 50%;-webkit-text-stroke:0.3px #111;">FJ08fx</div><div class="a" style="left:0px;top:287.0px;width:2515px;height:26px;background:#f5f5f5;"></div><div class="t m" style="left:6.0px;top:290.0px;font-size:17px;line-height:20px;color:#111;transform:scaleX(0.975);transform-origin:0 50%;-webkit-text-stroke:0.3px #111;">6.577.000</div><div class="t m" style="left:124.0px;top:290.0px;font-size:17px;line-height:20px;color:#111;transform:scaleX(0.975);transform-origin:0 50%;-webkit-text-stroke:0.3px #111;">Piarco Aero</div><div class="t m" style="left:536.0px;top:290.0px;font-size:17px;line-height:20px;color:#111;transform:scaleX(0.975);transform-origin:0 50%;-webkit-text-stroke:0.3px #111;">Piarco (tun)</div><div class="t m" style="left:1097.0px;top:290.0px;font-size:17px;line-height:20px;color:#111;transform:scaleX(0.975);transform-origin:0 50%;-webkit-text-stroke:0.3px #111;">10482</div><div class="t m" style="left:1170.0px;top:290.0px;font-size:17px;line-height:20px;color:#111;transform:scaleX(0.975);transform-origin:0 50%;-webkit-text-stroke:0.3px #111;">FK90io</div></div><div class="a" style="left:2999px;top:1707px;width:27px;height:330px;background:#f0f0f0;"></div><div class="a" style="left:3001px;top:1845px;width:23px;height:25px;background:#cdcdcd;"></div><svg class="a" style="left:2999px;top:1715px" width="27" height="20"><path d="M7,14 l6.5,-6 l6.5,6" stroke="#555" stroke-width="2.5" fill="none"/></svg><svg class="a" style="left:2999px;top:2013px" width="27" height="20"><path d="M7,6 l6.5,6 l6.5,-6" stroke="#555" stroke-width="2.5" fill="none"/></svg><div class="a" style="left:484px;top:2037px;width:2542px;height:26px;background:#f0f0f0;"></div><div class="a" style="left:512px;top:2039px;width:1535px;height:22px;background:#cdcdcd;"></div><svg class="a" style="left:484px;top:2037px" width="2542" height="26"><path d="M14,7 l-6,6 l6,6" stroke="#333" stroke-width="2.2" fill="none"/><path d="M2498,7 l6,6 l-6,6" stroke="#333" stroke-width="2.2" fill="none"/></svg><div class="a" style="left:0px;top:2063px;width:3840px;height:37px;background:linear-gradient(#d6dae0 0%,#c4c9d0 40%,#b9bec6 100%);border-top:1px solid #9aa0a8;box-sizing:border-box;"></div><div class="t s" style="left:10.0px;top:2071.5px;font-size:18px;line-height:21px;color:#333;transform:scaleX(0.932);transform-origin:0 50%;">ANAN Orion MKII (7k, 8k), BW = 192 kHz</div><div class="a" style="left:2950px;top:2064px;width:1px;height:36px;background:#9aa0a8;"></div><div class="t s" style="left:2966.0px;top:2071.5px;font-size:18px;line-height:21px;color:#333;transform:scaleX(0.930);transform-origin:0 50%;">Scheduler: On</div><div class="t s" style="left:3109.0px;top:2071.5px;font-size:18px;line-height:21px;color:#333;transform:scaleX(0.930);transform-origin:0 50%;">CPU: 3.4%</div><div class="a" style="left:3201px;top:2073px;width:69px;height:19px;background:linear-gradient(#f4f6fa,#dde2ea);border:1px solid #aab0b8;border-radius:2px;box-sizing:border-box;"></div><div class="t s" style="left:3285.0px;top:2071.5px;font-size:18px;line-height:21px;color:#333;transform:scaleX(0.930);transform-origin:0 50%;">GPU: 7.2%</div><div class="a" style="left:3387px;top:2073px;width:69px;height:19px;background:linear-gradient(#f4f6fa,#dde2ea);border:1px solid #aab0b8;border-radius:2px;box-sizing:border-box;"></div><div class="a" style="left:3389px;top:2075px;width:3px;height:15px;background:#9ad07a;"></div><div class="t s" style="left:3471.0px;top:2071.5px;font-size:18px;line-height:21px;color:#333;transform:scaleX(0.930);transform-origin:0 50%;">Audio: 12ms</div><div class="a" style="left:3579px;top:2073px;width:69px;height:19px;background:linear-gradient(#f4f6fa,#dde2ea);border:1px solid #aab0b8;border-radius:2px;box-sizing:border-box;"></div><div class="a" style="left:3581px;top:2075px;width:3px;height:15px;background:#9ad07a;"></div><div class="t s" style="left:3663.0px;top:2071.5px;font-size:18px;line-height:21px;color:#333;transform:scaleX(0.930);transform-origin:0 50%;">Size: 1.8 GB</div><div class="a" style="left:3765px;top:2073px;width:69px;height:19px;background:linear-gradient(#f4f6fa,#dde2ea);border:1px solid #aab0b8;border-radius:2px;box-sizing:border-box;"></div><div class="a" style="left:3767px;top:2075px;width:3px;height:15px;background:#9ad07a;"></div><svg class="a" style="left:3800px;top:2040px" width="40" height="40"><circle cx="40" cy="20" r="20" fill="#111"/></svg><svg class="a" style="left:3440px;top:0px" width="160" height="340"><path d="M48,27 H104 V115 H133 L77,203 L19,115 H48 Z" fill="none" stroke="#f58020" stroke-width="4.5" stroke-linejoin="miter"/><ellipse cx="82" cy="261" rx="49" ry="68" fill="none" stroke="#f58020" stroke-width="4.5"/></svg></body></html>
